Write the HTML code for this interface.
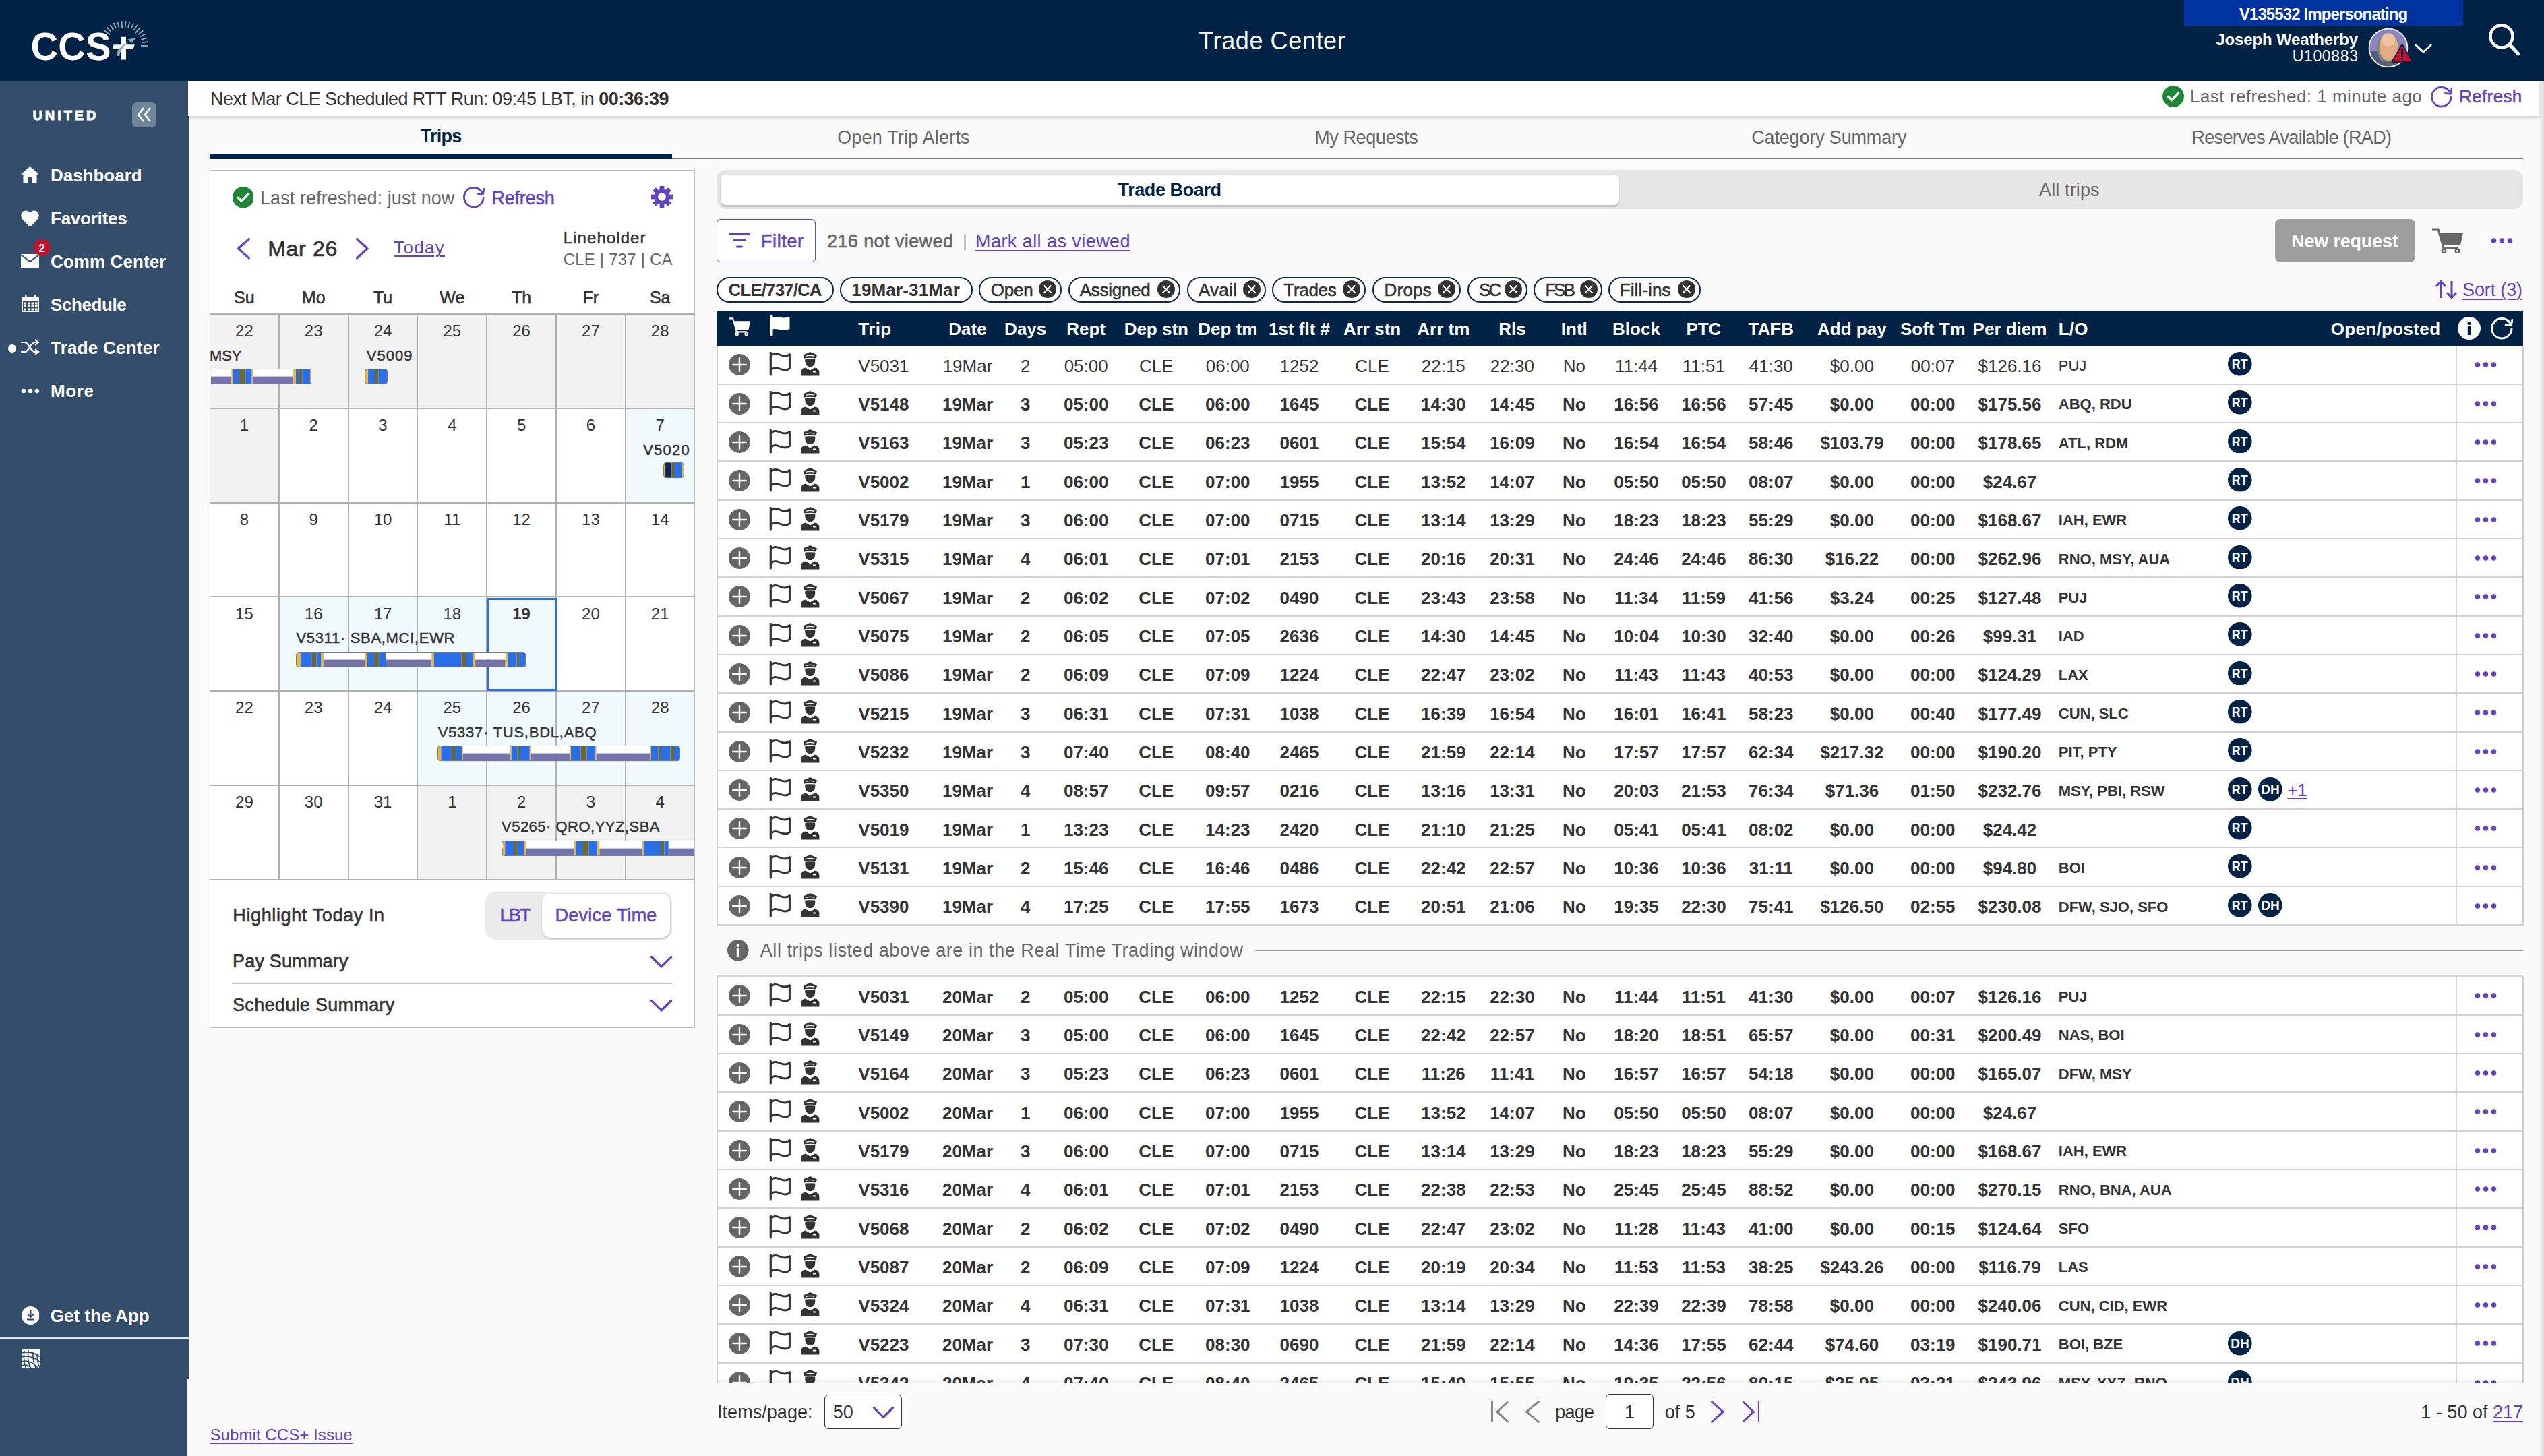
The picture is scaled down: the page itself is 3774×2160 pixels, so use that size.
<!DOCTYPE html><html><head><meta charset="utf-8"><title>Trade Center</title><style>
*{box-sizing:border-box;margin:0;padding:0}
html,body{width:3774px;height:2160px;overflow:hidden;background:#fafafa;font-family:"Liberation Sans",sans-serif;color:#333333}
.a{position:absolute;display:block}
.t{position:absolute;white-space:nowrap;line-height:1}
.u{text-decoration:underline;text-decoration-thickness:2px;text-underline-offset:4px}
</style></head><body>
<div class="a" style="left:0.00px;top:0.00px;width:3774.00px;height:120.00px;background:#002244;"></div>
<div class="a" style="left:0.00px;top:120.00px;width:280.00px;height:1926.00px;background:#334d6a;"></div>
<div class="a" style="left:0.00px;top:2046.00px;width:278.00px;height:114.00px;background:#334d6a;"></div>
<div class="a" style="left:3766.00px;top:120.00px;width:8.00px;height:2040.00px;background:linear-gradient(90deg,rgba(0,0,0,0),rgba(0,0,0,.12));"></div>
<div class="a" style="left:279.00px;top:120.00px;width:3488.00px;height:52.00px;background:#fff;box-shadow:0 3px 5px rgba(0,0,0,.16)"></div>
<svg class="a" style="left:30.00px;top:20.00px;width:210.00px;height:90.00px;" viewBox="0 0 210 90" preserveAspectRatio="none"><g stroke="#8ea3b5" stroke-width="1.9"><line x1="132.79" y1="31.64" x2="124.25" y2="24.72"/><line x1="134.41" y1="27.06" x2="128.43" y2="20.33"/><line x1="138.08" y1="24.31" x2="133.28" y2="16.69"/><line x1="142.15" y1="22.19" x2="138.66" y2="13.89"/><line x1="146.51" y1="20.76" x2="144.43" y2="12.01"/><line x1="151.19" y1="22.06" x2="150.42" y2="11.09"/><line x1="155.64" y1="20.12" x2="156.48" y2="11.16"/><line x1="160.15" y1="20.93" x2="162.45" y2="12.23"/><line x1="164.48" y1="22.46" x2="168.17" y2="14.25"/><line x1="168.49" y1="24.68" x2="173.48" y2="17.18"/><line x1="170.73" y1="28.98" x2="178.23" y2="20.94"/><line x1="175.18" y1="30.92" x2="182.31" y2="25.42"/><line x1="177.68" y1="34.77" x2="185.61" y2="30.52"/><line x1="179.51" y1="38.98" x2="188.03" y2="36.08"/><line x1="180.62" y1="43.43" x2="189.50" y2="41.96"/><line x1="179.00" y1="48.00" x2="190.00" y2="48.00"/></g><text x="15.5" y="69" font-family="Liberation Sans" font-weight="700" font-size="57" fill="#fff" textLength="119" lengthAdjust="spacingAndGlyphs">CCS</text><path d="M150 34.7 h7 v11.5 h12.8 l-2.2 6.6 h-10.6 v15.6 h-7 v-15.6 h-13.6 l2.4 -6.6 h11.2 z" fill="#fff"/><path d="M143 63 C 141 56, 149 48, 162 41.5 C 153 48, 148 55, 147.5 62.5 Z" fill="#8ea3b5"/><path d="M159.4 38.4 L 172.6 35.9 L 165.2 43.8 Z" fill="#8ea3b5"/></svg>
<div class="t" style="top:42.53px;font-size:36px;color:#fff;letter-spacing:0.603px;left:887.30px;width:2000px;text-align:center;">Trade Center</div>
<div class="a" style="left:3240.00px;top:0.00px;width:414.00px;height:38.30px;background:#0033a0;"></div>
<div class="t" style="top:8.68px;font-size:24px;color:#fff;font-weight:700;letter-spacing:-0.887px;left:2446.56px;width:2000px;text-align:center;">V135532 Impersonating</div>
<div class="t" style="top:46.68px;font-size:24px;color:#fff;font-weight:700;letter-spacing:-0.153px;right:276.15px;text-align:right;">Joseph Weatherby</div>
<div class="t" style="top:71.83px;font-size:23px;color:#fff;letter-spacing:0.663px;right:275.34px;text-align:right;">U100883</div>
<svg class="a" style="left:3512.50px;top:40.50px;width:60.00px;height:60.00px;" viewBox="0 0 60 60" preserveAspectRatio="none"><clipPath id="avc"><circle cx="30" cy="30" r="28.4"/></clipPath><g clip-path="url(#avc)"><rect width="60" height="60" fill="#8a86bd"/><rect x="0" y="34" width="60" height="26" fill="#4f5f7a"/><ellipse cx="30" cy="32" rx="17" ry="22" fill="#7b7f86"/><ellipse cx="30.5" cy="29" rx="14" ry="20" fill="#e2ad85"/><ellipse cx="30" cy="18" rx="10" ry="10" fill="#efc49e"/><path d="M14 60 Q16 50 30 50 Q44 50 46 60Z" fill="#5d6068"/></g><circle cx="30" cy="30" r="28.4" fill="none" stroke="#f4f4f4" stroke-width="1.8"/></svg>
<svg class="a" style="left:3546.80px;top:64.00px;width:33.00px;height:29.50px;" viewBox="0 0 33 29.5" preserveAspectRatio="none"><path d="M16.5 1.5 L32 28 L1 28 Z" fill="#c8102e" stroke="#002244" stroke-width="1.6" stroke-linejoin="round"/><rect x="15.1" y="9" width="2.8" height="11" fill="#002244"/><circle cx="16.5" cy="23.5" r="1.7" fill="#002244"/></svg>
<svg class="a" style="left:3582.00px;top:65.00px;width:26.00px;height:14.00px;" viewBox="0 0 26 14" preserveAspectRatio="none"><path d="M2 2 L13 12 L24 2" fill="none" stroke="#fff" stroke-width="3" stroke-linecap="round" stroke-linejoin="round"/></svg>
<svg class="a" style="left:3690.00px;top:33.00px;width:50.00px;height:53.00px;" viewBox="0 0 50 53" preserveAspectRatio="none"><circle cx="21" cy="21" r="16.5" fill="none" stroke="#fff" stroke-width="4.5"/><path d="M33 33 L46 47" stroke="#fff" stroke-width="5" stroke-linecap="round"/></svg>
<div class="t" style="top:160.57px;font-size:20px;color:#fff;font-weight:700;letter-spacing:3.924px;left:48.50px;-webkit-text-stroke:0.9px #fff;">UNITED</div>
<div class="a" style="left:196.00px;top:152.00px;width:36.00px;height:36.50px;background:#6f8698;border-radius:7px"></div>
<svg class="a" style="left:196.00px;top:152.00px;width:36.00px;height:36.50px;" viewBox="0 0 36 36.5" preserveAspectRatio="none"><path d="M17 8 L9 18 L17 28 M27 8 L19 18 L27 28" fill="none" stroke="#fff" stroke-width="2.6"/></svg>
<div class="t" style="top:246.99px;font-size:26px;color:#fff;font-weight:700;letter-spacing:-0.024px;left:75.00px;">Dashboard</div>
<div class="t" style="top:310.99px;font-size:26px;color:#fff;font-weight:700;letter-spacing:-0.245px;left:75.00px;">Favorites</div>
<div class="t" style="top:374.99px;font-size:26px;color:#fff;font-weight:700;letter-spacing:0.092px;left:75.00px;">Comm Center</div>
<div class="t" style="top:438.99px;font-size:26px;color:#fff;font-weight:700;letter-spacing:-0.399px;left:75.00px;">Schedule</div>
<div class="t" style="top:502.99px;font-size:26px;color:#fff;font-weight:700;letter-spacing:0.237px;left:75.00px;">Trade Center</div>
<div class="t" style="top:566.99px;font-size:26px;color:#fff;font-weight:700;letter-spacing:0.619px;left:75.00px;">More</div>
<svg class="a" style="left:31.00px;top:246.00px;width:27.00px;height:25.00px;" viewBox="0 0 27 25" preserveAspectRatio="none"><path d="M13.5 1 L27 12.5 L23.5 12.5 L23.5 25 L16.5 25 L16.5 17 L10.5 17 L10.5 25 L3.5 25 L3.5 12.5 L0 12.5 Z" fill="#fff"/></svg>
<svg class="a" style="left:31.00px;top:312.00px;width:27.00px;height:25.00px;" viewBox="0 0 27 25" preserveAspectRatio="none"><path d="M13.5 25 L2.5 13.5 C-2 8.5 1 0.5 7.5 0.5 C10.5 0.5 12.5 2.5 13.5 4.5 C14.5 2.5 16.5 0.5 19.5 0.5 C26 0.5 29 8.5 24.5 13.5 Z" fill="#fff"/></svg>
<svg class="a" style="left:31.00px;top:377.00px;width:27.00px;height:20.00px;" viewBox="0 0 27 20" preserveAspectRatio="none"><path d="M0 0 H27 V20 H0 Z" fill="#fff"/><path d="M0 1 L13.5 11 L27 1" fill="none" stroke="#334d6a" stroke-width="2"/></svg>
<svg class="a" style="left:50.40px;top:355.10px;width:24.60px;height:24.60px;" viewBox="0 0 24.6 24.6" preserveAspectRatio="none"><circle cx="12.3" cy="12.3" r="12.3" fill="#c8102e"/><text x="12.3" y="18.6" text-anchor="middle" font-family="Liberation Sans" font-weight="700" font-size="17" fill="#fff">2</text></svg>
<svg class="a" style="left:32.00px;top:438.00px;width:26.00px;height:25.00px;" viewBox="0 0 26 25" preserveAspectRatio="none"><rect x="0" y="3" width="26" height="22" fill="#fff"/><rect x="2" y="9" width="22" height="14" fill="#334d6a"/><rect x="3.5" y="10.5" width="3.5" height="3" fill="#fff"/><rect x="3.5" y="15.0" width="3.5" height="3" fill="#fff"/><rect x="3.5" y="19.5" width="3.5" height="3" fill="#fff"/><rect x="9.0" y="10.5" width="3.5" height="3" fill="#fff"/><rect x="9.0" y="15.0" width="3.5" height="3" fill="#fff"/><rect x="9.0" y="19.5" width="3.5" height="3" fill="#fff"/><rect x="14.5" y="10.5" width="3.5" height="3" fill="#fff"/><rect x="14.5" y="15.0" width="3.5" height="3" fill="#fff"/><rect x="14.5" y="19.5" width="3.5" height="3" fill="#fff"/><rect x="20.0" y="10.5" width="3.5" height="3" fill="#fff"/><rect x="20.0" y="15.0" width="3.5" height="3" fill="#fff"/><rect x="20.0" y="19.5" width="3.5" height="3" fill="#fff"/><rect x="5" y="0" width="2.5" height="6" fill="#fff"/><rect x="18.5" y="0" width="2.5" height="6" fill="#fff"/></svg>
<svg class="a" style="left:31.00px;top:503.00px;width:28.00px;height:24.00px;" viewBox="0 0 28 24" preserveAspectRatio="none"><path d="M0 5 H6 C12 5 14 19 21 19 H25 M0 19 H6 C12 19 14 5 21 5 H25" fill="none" stroke="#fff" stroke-width="2.2"/><path d="M21 1 L26 5 L21 9 M21 15 L26 19 L21 23" fill="none" stroke="#fff" stroke-width="2.2"/></svg>
<div class="a" style="left:11.80px;top:510.60px;width:12.00px;height:12.00px;background:#fff;border-radius:50%"></div>
<svg class="a" style="left:31.00px;top:575.00px;width:28.00px;height:10.00px;" viewBox="0 0 28 10" preserveAspectRatio="none"><circle cx="4" cy="5" r="3.3" fill="#fff"/><circle cx="14" cy="5" r="3.3" fill="#fff"/><circle cx="24" cy="5" r="3.3" fill="#fff"/></svg>
<svg class="a" style="left:31.60px;top:1938.00px;width:26.80px;height:27.00px;" viewBox="0 0 27 27" preserveAspectRatio="none"><circle cx="13.5" cy="13.5" r="13.5" fill="#fff"/><path d="M13.5 5.5 V15.5 M9 11.5 L13.5 16 L18 11.5 M8 19.5 H19" fill="none" stroke="#334d6a" stroke-width="2.2"/></svg>
<div class="t" style="top:1939.39px;font-size:26px;color:#fff;font-weight:700;letter-spacing:0.057px;left:74.80px;">Get the App</div>
<div class="a" style="left:0.00px;top:1983.50px;width:280.00px;height:2.00px;background:#dfe4ea;"></div>
<svg class="a" style="left:31.60px;top:2001.00px;width:28.40px;height:28.40px;" viewBox="0 0 28.4 28.4" preserveAspectRatio="none"><rect width="28.4" height="28.4" fill="#fff"/><g fill="none" stroke="#334d6a" stroke-width="1.6"><path d="M0 6 Q14 2 28 12"/><path d="M0 12 Q14 8 28 20"/><path d="M0 19 Q12 15 24 28"/><path d="M0 25 Q8 22 14 28"/><path d="M4 3 Q2 16 6 28"/><path d="M10 2 Q8 16 13 28"/><path d="M17 4 Q16 18 21 28"/><path d="M23 8 Q23 20 27 28"/></g></svg>
<div class="t" style="top:2117.28px;font-size:24px;color:#6244bb;letter-spacing:0.071px;left:311.50px;text-decoration:underline;text-decoration-thickness:2px;text-underline-offset:3px;">Submit CCS+ Issue</div>
<div class="t" style="top:134.34px;font-size:27px;color:#333333;letter-spacing:-0.535px;left:312.00px;">Next Mar CLE Scheduled RTT Run: 09:45 LBT, in <b>00:36:39</b></div>
<svg class="a" style="left:3207.80px;top:126.90px;width:32.00px;height:32.00px;" viewBox="0 0 32 32" preserveAspectRatio="none"><circle cx="16" cy="16" r="16" fill="#208637"/><path d="M8.5 16.5 L13.5 21.5 L23.5 11" fill="none" stroke="#fff" stroke-width="3.6" stroke-linecap="round" stroke-linejoin="round"/></svg>
<div class="t" style="top:130.09px;font-size:26px;color:#666666;letter-spacing:0.476px;left:3249.00px;">Last refreshed: 1 minute ago</div>
<svg class="a" style="left:3606.00px;top:127.50px;width:32.00px;height:32.00px;" viewBox="0 0 32 32" preserveAspectRatio="none"><path d="M28.2 8.6 A14.3 14.3 0 1 0 30.1 16.3" fill="none" stroke="#6244bb" stroke-width="2.8" stroke-linecap="round"/><path d="M21.5 10.4 L29.4 11.3 L31 3.3" fill="none" stroke="#6244bb" stroke-width="2.8" stroke-linejoin="round" stroke-linecap="round"/></svg>
<div class="t" style="top:130.09px;font-size:26px;color:#6244bb;-webkit-text-stroke:0.57px #6244bb;letter-spacing:0.379px;left:3648.00px;">Refresh</div>
<div class="t" style="top:189.34px;font-size:27px;color:#002244;font-weight:700;letter-spacing:-0.786px;left:-345.89px;width:2000px;text-align:center;">Trips</div>
<div class="t" style="top:190.74px;font-size:27px;color:#666666;letter-spacing:0.188px;left:340.49px;width:2000px;text-align:center;">Open Trip Alerts</div>
<div class="t" style="top:190.74px;font-size:27px;color:#666666;letter-spacing:-0.415px;left:1026.79px;width:2000px;text-align:center;">My Requests</div>
<div class="t" style="top:190.74px;font-size:27px;color:#666666;letter-spacing:-0.161px;left:1713.22px;width:2000px;text-align:center;">Category Summary</div>
<div class="t" style="top:190.74px;font-size:27px;color:#666666;letter-spacing:-0.651px;left:2399.37px;width:2000px;text-align:center;">Reserves Available (RAD)</div>
<div class="a" style="left:311.00px;top:234.50px;width:3432.00px;height:1.50px;background:#7a7a7a;"></div>
<div class="a" style="left:311.00px;top:228.00px;width:686.00px;height:8.00px;background:#002244;"></div>
<div class="a" style="left:311.00px;top:252.00px;width:720.00px;height:1273.00px;background:#fff;border:1.5px solid #bdbdbd"></div>
<svg class="a" style="left:344.60px;top:276.70px;width:31.60px;height:31.60px;" viewBox="0 0 32 32" preserveAspectRatio="none"><circle cx="16" cy="16" r="16" fill="#208637"/><path d="M8.5 16.5 L13.5 21.5 L23.5 11" fill="none" stroke="#fff" stroke-width="3.6" stroke-linecap="round" stroke-linejoin="round"/></svg>
<div class="t" style="top:280.64px;font-size:27px;color:#666666;letter-spacing:0.073px;left:386.00px;">Last refreshed: just now</div>
<svg class="a" style="left:687.00px;top:277.00px;width:32.00px;height:32.00px;" viewBox="0 0 32 32" preserveAspectRatio="none"><path d="M28.2 8.6 A14.3 14.3 0 1 0 30.1 16.3" fill="none" stroke="#6244bb" stroke-width="2.8" stroke-linecap="round"/><path d="M21.5 10.4 L29.4 11.3 L31 3.3" fill="none" stroke="#6244bb" stroke-width="2.8" stroke-linejoin="round" stroke-linecap="round"/></svg>
<div class="t" style="top:280.64px;font-size:27px;color:#6244bb;-webkit-text-stroke:0.59px #6244bb;letter-spacing:-0.164px;left:729.30px;">Refresh</div>
<svg class="a" style="left:966.00px;top:276.00px;width:32.00px;height:32.00px;" viewBox="0 0 32 32" preserveAspectRatio="none"><rect x="12.6" y="0" width="6.8" height="8" transform="rotate(0 16 16)" fill="#6244bb"/><rect x="12.6" y="0" width="6.8" height="8" transform="rotate(45 16 16)" fill="#6244bb"/><rect x="12.6" y="0" width="6.8" height="8" transform="rotate(90 16 16)" fill="#6244bb"/><rect x="12.6" y="0" width="6.8" height="8" transform="rotate(135 16 16)" fill="#6244bb"/><rect x="12.6" y="0" width="6.8" height="8" transform="rotate(180 16 16)" fill="#6244bb"/><rect x="12.6" y="0" width="6.8" height="8" transform="rotate(225 16 16)" fill="#6244bb"/><rect x="12.6" y="0" width="6.8" height="8" transform="rotate(270 16 16)" fill="#6244bb"/><rect x="12.6" y="0" width="6.8" height="8" transform="rotate(315 16 16)" fill="#6244bb"/><circle cx="16" cy="16" r="11.6" fill="#6244bb"/><circle cx="16" cy="16" r="5.8" fill="#fff"/></svg>
<svg class="a" style="left:351.50px;top:352.60px;width:18.90px;height:31.60px;overflow:visible" viewBox="0 0 18.90 31.60" preserveAspectRatio="none"><path d="M17.40 1.5 L1.5 15.80 L17.40 30.10" fill="none" stroke="#6244bb" stroke-width="3.2" stroke-linecap="round" stroke-linejoin="round"/></svg>
<div class="t" style="top:352.71px;font-size:32px;color:#333333;-webkit-text-stroke:0.70px #333333;letter-spacing:0.684px;left:397.20px;">Mar 26</div>
<svg class="a" style="left:527.70px;top:352.60px;width:18.50px;height:31.60px;overflow:visible" viewBox="0 0 18.50 31.60" preserveAspectRatio="none"><path d="M1.5 1.5 L17.00 15.80 L1.5 30.10" fill="none" stroke="#6244bb" stroke-width="3.2" stroke-linecap="round" stroke-linejoin="round"/></svg>
<div class="t" style="top:354.29px;font-size:26px;color:#6244bb;letter-spacing:1.242px;left:584.30px;text-decoration:underline;text-decoration-thickness:2px;text-underline-offset:3px;">Today</div>
<div class="t" style="top:340.58px;font-size:24px;color:#333333;-webkit-text-stroke:0.53px #333333;letter-spacing:1.081px;left:835.70px;">Lineholder</div>
<div class="t" style="top:373.18px;font-size:24px;color:#666666;letter-spacing:0.199px;left:835.70px;">CLE | 737 | CA</div>
<div class="t" style="top:429.04px;font-size:25px;color:#333333;-webkit-text-stroke:0.55px #333333;left:-637.60px;width:2000px;text-align:center;">Su</div>
<div class="t" style="top:429.04px;font-size:25px;color:#333333;-webkit-text-stroke:0.55px #333333;left:-534.80px;width:2000px;text-align:center;">Mo</div>
<div class="t" style="top:429.04px;font-size:25px;color:#333333;-webkit-text-stroke:0.55px #333333;left:-432.00px;width:2000px;text-align:center;">Tu</div>
<div class="t" style="top:429.04px;font-size:25px;color:#333333;-webkit-text-stroke:0.55px #333333;left:-329.20px;width:2000px;text-align:center;">We</div>
<div class="t" style="top:429.04px;font-size:25px;color:#333333;-webkit-text-stroke:0.55px #333333;left:-226.40px;width:2000px;text-align:center;">Th</div>
<div class="t" style="top:429.04px;font-size:25px;color:#333333;-webkit-text-stroke:0.55px #333333;left:-123.60px;width:2000px;text-align:center;">Fr</div>
<div class="t" style="top:429.04px;font-size:25px;color:#333333;-webkit-text-stroke:0.55px #333333;left:-20.80px;width:2000px;text-align:center;">Sa</div>
<div class="a" style="left:311.00px;top:466.00px;width:102.80px;height:139.80px;background:#f2f2f2;"></div>
<div class="a" style="left:413.80px;top:466.00px;width:102.80px;height:139.80px;background:#f2f2f2;"></div>
<div class="a" style="left:516.60px;top:466.00px;width:102.80px;height:139.80px;background:#f2f2f2;"></div>
<div class="a" style="left:619.40px;top:466.00px;width:102.80px;height:139.80px;background:#f2f2f2;"></div>
<div class="a" style="left:722.20px;top:466.00px;width:102.80px;height:139.80px;background:#f2f2f2;"></div>
<div class="a" style="left:825.00px;top:466.00px;width:102.80px;height:139.80px;background:#f2f2f2;"></div>
<div class="a" style="left:927.80px;top:466.00px;width:102.80px;height:139.80px;background:#f2f2f2;"></div>
<div class="a" style="left:311.00px;top:605.80px;width:102.80px;height:139.80px;background:#f2f2f2;"></div>
<div class="a" style="left:927.80px;top:605.80px;width:102.80px;height:139.80px;background:#f0f9fb;"></div>
<div class="a" style="left:413.80px;top:885.40px;width:102.80px;height:139.80px;background:#f0f9fb;"></div>
<div class="a" style="left:516.60px;top:885.40px;width:102.80px;height:139.80px;background:#f0f9fb;"></div>
<div class="a" style="left:619.40px;top:885.40px;width:102.80px;height:139.80px;background:#f0f9fb;"></div>
<div class="a" style="left:722.20px;top:885.40px;width:102.80px;height:139.80px;background:#f0f9fb;"></div>
<div class="a" style="left:619.40px;top:1025.20px;width:102.80px;height:139.80px;background:#f0f9fb;"></div>
<div class="a" style="left:722.20px;top:1025.20px;width:102.80px;height:139.80px;background:#f0f9fb;"></div>
<div class="a" style="left:825.00px;top:1025.20px;width:102.80px;height:139.80px;background:#f0f9fb;"></div>
<div class="a" style="left:927.80px;top:1025.20px;width:102.80px;height:139.80px;background:#f0f9fb;"></div>
<div class="a" style="left:619.40px;top:1165.00px;width:102.80px;height:139.80px;background:#f2f2f2;"></div>
<div class="a" style="left:722.20px;top:1165.00px;width:102.80px;height:139.80px;background:#f2f2f2;"></div>
<div class="a" style="left:825.00px;top:1165.00px;width:102.80px;height:139.80px;background:#f2f2f2;"></div>
<div class="a" style="left:927.80px;top:1165.00px;width:102.80px;height:139.80px;background:#f2f2f2;"></div>
<div class="a" style="left:311.00px;top:465.00px;width:720.00px;height:2.00px;background:#b0b0b0;"></div>
<div class="a" style="left:311.00px;top:604.80px;width:720.00px;height:2.00px;background:#b0b0b0;"></div>
<div class="a" style="left:311.00px;top:744.60px;width:720.00px;height:2.00px;background:#b0b0b0;"></div>
<div class="a" style="left:311.00px;top:884.40px;width:720.00px;height:2.00px;background:#b0b0b0;"></div>
<div class="a" style="left:311.00px;top:1024.20px;width:720.00px;height:2.00px;background:#b0b0b0;"></div>
<div class="a" style="left:311.00px;top:1164.00px;width:720.00px;height:2.00px;background:#b0b0b0;"></div>
<div class="a" style="left:311.00px;top:1303.80px;width:720.00px;height:2.00px;background:#b0b0b0;"></div>
<div class="a" style="left:412.80px;top:466.00px;width:2.00px;height:838.80px;background:#b0b0b0;"></div>
<div class="a" style="left:515.60px;top:466.00px;width:2.00px;height:838.80px;background:#b0b0b0;"></div>
<div class="a" style="left:618.40px;top:466.00px;width:2.00px;height:838.80px;background:#b0b0b0;"></div>
<div class="a" style="left:721.20px;top:466.00px;width:2.00px;height:838.80px;background:#b0b0b0;"></div>
<div class="a" style="left:824.00px;top:466.00px;width:2.00px;height:838.80px;background:#b0b0b0;"></div>
<div class="a" style="left:926.80px;top:466.00px;width:2.00px;height:838.80px;background:#b0b0b0;"></div>
<div class="t" style="top:479.18px;font-size:24px;color:#333333;left:-637.60px;width:2000px;text-align:center;">22</div>
<div class="t" style="top:479.18px;font-size:24px;color:#333333;left:-534.80px;width:2000px;text-align:center;">23</div>
<div class="t" style="top:479.18px;font-size:24px;color:#333333;left:-432.00px;width:2000px;text-align:center;">24</div>
<div class="t" style="top:479.18px;font-size:24px;color:#333333;left:-329.20px;width:2000px;text-align:center;">25</div>
<div class="t" style="top:479.18px;font-size:24px;color:#333333;left:-226.40px;width:2000px;text-align:center;">26</div>
<div class="t" style="top:479.18px;font-size:24px;color:#333333;left:-123.60px;width:2000px;text-align:center;">27</div>
<div class="t" style="top:479.18px;font-size:24px;color:#333333;left:-20.80px;width:2000px;text-align:center;">28</div>
<div class="t" style="top:618.98px;font-size:24px;color:#333333;left:-637.60px;width:2000px;text-align:center;">1</div>
<div class="t" style="top:618.98px;font-size:24px;color:#333333;left:-534.80px;width:2000px;text-align:center;">2</div>
<div class="t" style="top:618.98px;font-size:24px;color:#333333;left:-432.00px;width:2000px;text-align:center;">3</div>
<div class="t" style="top:618.98px;font-size:24px;color:#333333;left:-329.20px;width:2000px;text-align:center;">4</div>
<div class="t" style="top:618.98px;font-size:24px;color:#333333;left:-226.40px;width:2000px;text-align:center;">5</div>
<div class="t" style="top:618.98px;font-size:24px;color:#333333;left:-123.60px;width:2000px;text-align:center;">6</div>
<div class="t" style="top:618.98px;font-size:24px;color:#333333;left:-20.80px;width:2000px;text-align:center;">7</div>
<div class="t" style="top:758.78px;font-size:24px;color:#333333;left:-637.60px;width:2000px;text-align:center;">8</div>
<div class="t" style="top:758.78px;font-size:24px;color:#333333;left:-534.80px;width:2000px;text-align:center;">9</div>
<div class="t" style="top:758.78px;font-size:24px;color:#333333;left:-432.00px;width:2000px;text-align:center;">10</div>
<div class="t" style="top:758.78px;font-size:24px;color:#333333;left:-329.20px;width:2000px;text-align:center;">11</div>
<div class="t" style="top:758.78px;font-size:24px;color:#333333;left:-226.40px;width:2000px;text-align:center;">12</div>
<div class="t" style="top:758.78px;font-size:24px;color:#333333;left:-123.60px;width:2000px;text-align:center;">13</div>
<div class="t" style="top:758.78px;font-size:24px;color:#333333;left:-20.80px;width:2000px;text-align:center;">14</div>
<div class="t" style="top:898.58px;font-size:24px;color:#333333;left:-637.60px;width:2000px;text-align:center;">15</div>
<div class="t" style="top:898.58px;font-size:24px;color:#333333;left:-534.80px;width:2000px;text-align:center;">16</div>
<div class="t" style="top:898.58px;font-size:24px;color:#333333;left:-432.00px;width:2000px;text-align:center;">17</div>
<div class="t" style="top:898.58px;font-size:24px;color:#333333;left:-329.20px;width:2000px;text-align:center;">18</div>
<div class="t" style="top:898.58px;font-size:24px;color:#333333;font-weight:700;left:-226.40px;width:2000px;text-align:center;">19</div>
<div class="t" style="top:898.58px;font-size:24px;color:#333333;left:-123.60px;width:2000px;text-align:center;">20</div>
<div class="t" style="top:898.58px;font-size:24px;color:#333333;left:-20.80px;width:2000px;text-align:center;">21</div>
<div class="t" style="top:1038.38px;font-size:24px;color:#333333;left:-637.60px;width:2000px;text-align:center;">22</div>
<div class="t" style="top:1038.38px;font-size:24px;color:#333333;left:-534.80px;width:2000px;text-align:center;">23</div>
<div class="t" style="top:1038.38px;font-size:24px;color:#333333;left:-432.00px;width:2000px;text-align:center;">24</div>
<div class="t" style="top:1038.38px;font-size:24px;color:#333333;left:-329.20px;width:2000px;text-align:center;">25</div>
<div class="t" style="top:1038.38px;font-size:24px;color:#333333;left:-226.40px;width:2000px;text-align:center;">26</div>
<div class="t" style="top:1038.38px;font-size:24px;color:#333333;left:-123.60px;width:2000px;text-align:center;">27</div>
<div class="t" style="top:1038.38px;font-size:24px;color:#333333;left:-20.80px;width:2000px;text-align:center;">28</div>
<div class="t" style="top:1178.18px;font-size:24px;color:#333333;left:-637.60px;width:2000px;text-align:center;">29</div>
<div class="t" style="top:1178.18px;font-size:24px;color:#333333;left:-534.80px;width:2000px;text-align:center;">30</div>
<div class="t" style="top:1178.18px;font-size:24px;color:#333333;left:-432.00px;width:2000px;text-align:center;">31</div>
<div class="t" style="top:1178.18px;font-size:24px;color:#333333;left:-329.20px;width:2000px;text-align:center;">1</div>
<div class="t" style="top:1178.18px;font-size:24px;color:#333333;left:-226.40px;width:2000px;text-align:center;">2</div>
<div class="t" style="top:1178.18px;font-size:24px;color:#333333;left:-123.60px;width:2000px;text-align:center;">3</div>
<div class="t" style="top:1178.18px;font-size:24px;color:#333333;left:-20.80px;width:2000px;text-align:center;">4</div>
<div class="a" style="left:723.00px;top:887.40px;width:102.50px;height:137.30px;background:none;border:3px solid #2b70e0"></div>
<div class="t" style="top:516.68px;font-size:22px;color:#333333;-webkit-text-stroke:0.48px #333333;letter-spacing:-0.096px;left:311.00px;">MSY</div>
<div class="t" style="top:516.68px;font-size:22px;color:#333333;-webkit-text-stroke:0.48px #333333;letter-spacing:1.015px;left:543.80px;">V5009</div>
<div class="t" style="top:656.78px;font-size:22px;color:#333333;-webkit-text-stroke:0.48px #333333;letter-spacing:1.235px;left:954.20px;">V5020</div>
<div class="t" style="top:936.38px;font-size:22px;color:#333333;-webkit-text-stroke:0.48px #333333;letter-spacing:0.693px;left:439.40px;">V5311· SBA,MCI,EWR</div>
<div class="t" style="top:1075.78px;font-size:22px;color:#333333;-webkit-text-stroke:0.48px #333333;letter-spacing:0.753px;left:649.70px;">V5337· TUS,BDL,ABQ</div>
<div class="t" style="top:1216.38px;font-size:22px;color:#333333;-webkit-text-stroke:0.48px #333333;letter-spacing:0.489px;left:744.00px;">V5265· QRO,YYZ,SBA</div>
<svg class="a" style="left:312.50px;top:547.30px;width:149.70px;height:23.20px;" viewBox="0 0 149.70 23.20" preserveAspectRatio="none"><defs><clipPath id="cpmsy"><rect x="-12" y="0.5" width="161.20" height="22.20" rx="4"/></clipPath></defs><g clip-path="url(#cpmsy)"><rect x="-12.50" y="0" width="42.80" height="11.60" fill="#fff"/><rect x="-12.50" y="11.60" width="42.80" height="11.60" fill="#7474ab"/><rect x="30.30" y="0" width="2.40" height="23.20" fill="#e8b640"/><rect x="32.70" y="0" width="9.30" height="23.20" fill="#2a6fe8"/><rect x="42.00" y="0" width="9.30" height="23.20" fill="#6e6934"/><rect x="51.30" y="0" width="9.30" height="23.20" fill="#2a6fe8"/><rect x="60.60" y="0" width="1.40" height="23.20" fill="#e8b640"/><rect x="62.00" y="0" width="60.10" height="11.60" fill="#fff"/><rect x="62.00" y="11.60" width="60.10" height="11.60" fill="#7474ab"/><rect x="122.10" y="0" width="3.80" height="23.20" fill="#e8b640"/><rect x="125.90" y="0" width="4.20" height="23.20" fill="#2a6fe8"/><rect x="130.10" y="0" width="5.10" height="23.20" fill="#6e6934"/><rect x="135.20" y="0" width="12.40" height="23.20" fill="#2a6fe8"/><rect x="147.60" y="0" width="2.10" height="23.20" fill="#e8b640"/></g><rect x="-12" y="0.5" width="161.20" height="22.20" rx="4" fill="none" stroke="#777" stroke-width="1"/></svg>
<svg class="a" style="left:541.40px;top:547.30px;width:34.00px;height:23.20px;" viewBox="0 0 34.00 23.20" preserveAspectRatio="none"><defs><clipPath id="cp541547"><rect x="0.5" y="0.5" width="33.00" height="22.20" rx="4"/></clipPath></defs><g clip-path="url(#cp541547)"><rect x="0.00" y="0" width="5.10" height="23.20" fill="#e8b640"/><rect x="5.10" y="0" width="10.20" height="23.20" fill="#2a6fe8"/><rect x="15.30" y="0" width="5.10" height="23.20" fill="#6e6934"/><rect x="20.40" y="0" width="13.60" height="23.20" fill="#2a6fe8"/></g><rect x="0.5" y="0.5" width="33.00" height="22.20" rx="4" fill="none" stroke="#777" stroke-width="1"/></svg>
<svg class="a" style="left:984.40px;top:686.40px;width:30.90px;height:23.20px;" viewBox="0 0 30.90 23.20" preserveAspectRatio="none"><defs><clipPath id="cp984686"><rect x="0.5" y="0.5" width="29.90" height="22.20" rx="4"/></clipPath></defs><g clip-path="url(#cp984686)"><rect x="0.00" y="0" width="3.09" height="23.20" fill="#e8b640"/><rect x="3.09" y="0" width="9.27" height="23.20" fill="#0b2461"/><rect x="12.36" y="0" width="4.63" height="23.20" fill="#6e6934"/><rect x="16.99" y="0" width="10.81" height="23.20" fill="#2a6fe8"/><rect x="27.81" y="0" width="3.09" height="23.20" fill="#e8b640"/></g><rect x="0.5" y="0.5" width="29.90" height="22.20" rx="4" fill="none" stroke="#777" stroke-width="1"/></svg>
<svg class="a" style="left:438.60px;top:967.00px;width:341.30px;height:23.20px;" viewBox="0 0 341.30 23.20" preserveAspectRatio="none"><defs><clipPath id="cp438967"><rect x="0.5" y="0.5" width="340.30" height="22.20" rx="4"/></clipPath></defs><g clip-path="url(#cp438967)"><rect x="0.00" y="0" width="6.83" height="23.20" fill="#e8b640"/><rect x="6.83" y="0" width="17.06" height="23.20" fill="#2a6fe8"/><rect x="23.89" y="0" width="6.83" height="23.20" fill="#6e6934"/><rect x="30.72" y="0" width="6.83" height="23.20" fill="#2a6fe8"/><rect x="37.54" y="0" width="3.41" height="23.20" fill="#e8b640"/><rect x="40.96" y="0" width="61.43" height="11.60" fill="#fff"/><rect x="40.96" y="11.60" width="61.43" height="11.60" fill="#7474ab"/><rect x="102.39" y="0" width="3.41" height="23.20" fill="#e8b640"/><rect x="105.80" y="0" width="10.24" height="23.20" fill="#2a6fe8"/><rect x="116.04" y="0" width="6.83" height="23.20" fill="#6e6934"/><rect x="122.87" y="0" width="10.24" height="23.20" fill="#2a6fe8"/><rect x="133.11" y="0" width="68.26" height="11.60" fill="#fff"/><rect x="133.11" y="11.60" width="68.26" height="11.60" fill="#7474ab"/><rect x="201.37" y="0" width="3.41" height="23.20" fill="#e8b640"/><rect x="204.78" y="0" width="40.96" height="23.20" fill="#2a6fe8"/><rect x="245.74" y="0" width="6.83" height="23.20" fill="#6e6934"/><rect x="252.56" y="0" width="10.24" height="23.20" fill="#2a6fe8"/><rect x="262.80" y="0" width="3.41" height="23.20" fill="#e8b640"/><rect x="266.21" y="0" width="44.37" height="11.60" fill="#fff"/><rect x="266.21" y="11.60" width="44.37" height="11.60" fill="#7474ab"/><rect x="310.58" y="0" width="3.41" height="23.20" fill="#e8b640"/><rect x="314.00" y="0" width="13.65" height="23.20" fill="#2a6fe8"/><rect x="327.65" y="0" width="3.41" height="23.20" fill="#6e6934"/><rect x="331.06" y="0" width="10.24" height="23.20" fill="#2a6fe8"/></g><rect x="0.5" y="0.5" width="340.30" height="22.20" rx="4" fill="none" stroke="#777" stroke-width="1"/></svg>
<svg class="a" style="left:648.90px;top:1106.40px;width:360.00px;height:23.20px;" viewBox="0 0 360.00 23.20" preserveAspectRatio="none"><defs><clipPath id="cp6481106"><rect x="0.5" y="0.5" width="359.00" height="22.20" rx="4"/></clipPath></defs><g clip-path="url(#cp6481106)"><rect x="0.00" y="0" width="5.40" height="23.20" fill="#e8b640"/><rect x="5.40" y="0" width="16.20" height="23.20" fill="#2a6fe8"/><rect x="21.60" y="0" width="5.40" height="23.20" fill="#6e6934"/><rect x="27.00" y="0" width="9.00" height="23.20" fill="#2a6fe8"/><rect x="36.00" y="0" width="1.80" height="23.20" fill="#e8b640"/><rect x="37.80" y="0" width="70.20" height="11.60" fill="#fff"/><rect x="37.80" y="11.60" width="70.20" height="11.60" fill="#7474ab"/><rect x="108.00" y="0" width="1.80" height="23.20" fill="#e8b640"/><rect x="109.80" y="0" width="9.00" height="23.20" fill="#2a6fe8"/><rect x="118.80" y="0" width="3.60" height="23.20" fill="#6e6934"/><rect x="122.40" y="0" width="14.40" height="23.20" fill="#2a6fe8"/><rect x="136.80" y="0" width="1.80" height="23.20" fill="#e8b640"/><rect x="138.60" y="0" width="57.60" height="11.60" fill="#fff"/><rect x="138.60" y="11.60" width="57.60" height="11.60" fill="#7474ab"/><rect x="196.20" y="0" width="1.80" height="23.20" fill="#e8b640"/><rect x="198.00" y="0" width="14.40" height="23.20" fill="#2a6fe8"/><rect x="212.40" y="0" width="9.00" height="23.20" fill="#6e6934"/><rect x="221.40" y="0" width="12.60" height="23.20" fill="#2a6fe8"/><rect x="234.00" y="0" width="1.80" height="23.20" fill="#e8b640"/><rect x="235.80" y="0" width="79.20" height="11.60" fill="#fff"/><rect x="235.80" y="11.60" width="79.20" height="11.60" fill="#7474ab"/><rect x="315.00" y="0" width="1.80" height="23.20" fill="#e8b640"/><rect x="316.80" y="0" width="10.80" height="23.20" fill="#2a6fe8"/><rect x="327.60" y="0" width="3.60" height="23.20" fill="#6e6934"/><rect x="331.20" y="0" width="14.40" height="23.20" fill="#2a6fe8"/><rect x="345.60" y="0" width="5.40" height="23.20" fill="#6e6934"/><rect x="351.00" y="0" width="9.00" height="23.20" fill="#2a6fe8"/></g><rect x="0.5" y="0.5" width="359.00" height="22.20" rx="4" fill="none" stroke="#777" stroke-width="1"/></svg>
<svg class="a" style="left:744.00px;top:1246.60px;width:316.00px;height:23.20px;" viewBox="0 0 316.00 23.20" preserveAspectRatio="none"><defs><clipPath id="cp7441246"><rect x="0.5" y="0.5" width="315.00" height="22.20" rx="4"/></clipPath></defs><g clip-path="url(#cp7441246)"><rect x="0.00" y="0" width="1.90" height="11.60" fill="#fff"/><rect x="0.00" y="11.60" width="1.90" height="11.60" fill="#7474ab"/><rect x="1.90" y="0" width="3.32" height="23.20" fill="#e8b640"/><rect x="5.21" y="0" width="13.18" height="23.20" fill="#2a6fe8"/><rect x="18.39" y="0" width="5.50" height="23.20" fill="#6e6934"/><rect x="23.89" y="0" width="9.20" height="23.20" fill="#2a6fe8"/><rect x="33.09" y="0" width="2.81" height="23.20" fill="#e8b640"/><rect x="35.90" y="0" width="72.11" height="11.60" fill="#fff"/><rect x="35.90" y="11.60" width="72.11" height="11.60" fill="#7474ab"/><rect x="108.01" y="0" width="2.59" height="23.20" fill="#e8b640"/><rect x="110.60" y="0" width="9.39" height="23.20" fill="#2a6fe8"/><rect x="119.99" y="0" width="9.32" height="23.20" fill="#6e6934"/><rect x="129.31" y="0" width="12.89" height="23.20" fill="#2a6fe8"/><rect x="142.20" y="0" width="3.29" height="23.20" fill="#e8b640"/><rect x="145.49" y="0" width="62.82" height="11.60" fill="#fff"/><rect x="145.49" y="11.60" width="62.82" height="11.60" fill="#7474ab"/><rect x="208.31" y="0" width="2.59" height="23.20" fill="#e8b640"/><rect x="210.90" y="0" width="25.09" height="23.20" fill="#2a6fe8"/><rect x="235.99" y="0" width="5.31" height="23.20" fill="#6e6934"/><rect x="241.30" y="0" width="6.51" height="23.20" fill="#2a6fe8"/><rect x="247.81" y="0" width="68.19" height="11.60" fill="#fff"/><rect x="247.81" y="11.60" width="68.19" height="11.60" fill="#7474ab"/></g><rect x="0.5" y="0.5" width="315.00" height="22.20" rx="4" fill="none" stroke="#777" stroke-width="1"/></svg>
<div class="a" style="left:1030.40px;top:1240.00px;width:31.60px;height:35.00px;background:#fafafa;"></div>
<div class="a" style="left:1029.50px;top:466.00px;width:1.50px;height:839.00px;background:#bdbdbd;"></div>
<div class="t" style="top:1345.34px;font-size:27px;color:#333333;-webkit-text-stroke:0.59px #333333;letter-spacing:0.625px;left:345.30px;">Highlight Today In</div>
<div class="a" style="left:720.00px;top:1322.80px;width:277.00px;height:71.40px;background:#ebebeb;border-radius:15px"></div>
<div class="a" style="left:803.70px;top:1326.00px;width:190.10px;height:65.20px;background:#fff;border-radius:13px;box-shadow:0 2px 3px rgba(0,0,0,.2)"></div>
<div class="t" style="top:1345.34px;font-size:27px;color:#6244bb;-webkit-text-stroke:0.59px #6244bb;letter-spacing:-1.510px;left:741.40px;">LBT</div>
<div class="t" style="top:1345.34px;font-size:27px;color:#6244bb;-webkit-text-stroke:0.59px #6244bb;letter-spacing:0.223px;left:823.60px;">Device Time</div>
<div class="t" style="top:1412.74px;font-size:27px;color:#333333;-webkit-text-stroke:0.59px #333333;letter-spacing:0.196px;left:345.00px;">Pay Summary</div>
<svg class="a" style="left:965.30px;top:1418.20px;width:32.20px;height:17.40px;overflow:visible" viewBox="0 0 32.20 17.40" preserveAspectRatio="none"><path d="M1.5 1.5 L16.10 15.90 L30.70 1.5" fill="none" stroke="#6244bb" stroke-width="3.4" stroke-linecap="round" stroke-linejoin="round"/></svg>
<div class="a" style="left:344.00px;top:1458.50px;width:653.50px;height:1.50px;background:#c8c8c8;"></div>
<div class="t" style="top:1478.14px;font-size:27px;color:#333333;-webkit-text-stroke:0.59px #333333;letter-spacing:0.318px;left:345.00px;">Schedule Summary</div>
<svg class="a" style="left:965.30px;top:1483.00px;width:32.20px;height:17.50px;overflow:visible" viewBox="0 0 32.20 17.50" preserveAspectRatio="none"><path d="M1.5 1.5 L16.10 16.00 L30.70 1.5" fill="none" stroke="#6244bb" stroke-width="3.4" stroke-linecap="round" stroke-linejoin="round"/></svg>
<div class="a" style="left:1063.00px;top:252.00px;width:2680.00px;height:57.50px;background:#e6e6e6;border-radius:14px"></div>
<div class="a" style="left:1069.00px;top:258.70px;width:1333.20px;height:45.30px;background:#fff;border-radius:8px;box-shadow:0 2.5px 2px rgba(0,0,0,.16)"></div>
<div class="t" style="top:268.84px;font-size:27px;color:#002244;font-weight:700;letter-spacing:-0.413px;left:735.09px;width:2000px;text-align:center;">Trade Board</div>
<div class="t" style="top:269.14px;font-size:27px;color:#666666;letter-spacing:0.132px;left:2069.87px;width:2000px;text-align:center;">All trips</div>
<div class="a" style="left:1063.00px;top:325.30px;width:147.00px;height:63.30px;background:#fff;border:1.5px solid #6244bb;border-radius:6px"></div>
<svg class="a" style="left:1081.00px;top:345.00px;width:32.00px;height:23.00px;" viewBox="0 0 32 23" preserveAspectRatio="none"><path d="M1.5 2 H30.5 M7.5 11.5 H24.5 M12.5 21 H19.5" stroke="#6244bb" stroke-width="3.2" stroke-linecap="round"/></svg>
<div class="t" style="top:344.84px;font-size:27px;color:#6244bb;-webkit-text-stroke:0.59px #6244bb;letter-spacing:0.600px;left:1129.00px;">Filter</div>
<div class="t" style="top:344.84px;font-size:27px;color:#666666;-webkit-text-stroke:0.59px #666666;letter-spacing:0.411px;left:1227.00px;">216 not viewed</div>
<div class="a" style="left:1430.00px;top:347.00px;width:2.50px;height:24.00px;background:#c4c4c4;"></div>
<div class="t" style="top:344.84px;font-size:27px;color:#6244bb;letter-spacing:0.440px;left:1447.00px;text-decoration:underline;text-decoration-thickness:2px;text-underline-offset:4px;">Mark all as viewed</div>
<div class="a" style="left:3375.00px;top:325.20px;width:208.00px;height:63.80px;background:#9e9e9e;border-radius:8px"></div>
<div class="t" style="top:344.54px;font-size:27px;color:#fff;font-weight:700;letter-spacing:-0.197px;left:2478.40px;width:2000px;text-align:center;">New request</div>
<svg class="a" style="left:3608.00px;top:337.70px;width:46.00px;height:37.80px;" viewBox="0 0 46 38" preserveAspectRatio="none"><path d="M0 2 H9 L17 30 H38" fill="none" stroke="#666" stroke-width="3" stroke-linejoin="round"/><path d="M10 7.5 H46 L42 26 H15 Z" fill="#666"/><circle cx="17.5" cy="34.5" r="2.8" fill="none" stroke="#666" stroke-width="2.4"/><circle cx="37.5" cy="34.5" r="2.8" fill="none" stroke="#666" stroke-width="2.4"/></svg>
<svg class="a" style="left:3694.60px;top:351.60px;width:33.00px;height:10.00px;" viewBox="0 0 33 10" preserveAspectRatio="none"><circle cx="4.5" cy="5" r="3.8" fill="#6244bb"/><circle cx="16.5" cy="5" r="3.8" fill="#6244bb"/><circle cx="28.5" cy="5" r="3.8" fill="#6244bb"/></svg>
<div class="a" style="left:1063.30px;top:410.60px;width:173.40px;height:38.50px;background:#fff;border:2px solid #0d2a4d;border-radius:20px"></div>
<div class="t" style="top:417.19px;font-size:26px;color:#333333;font-weight:700;letter-spacing:-0.929px;left:1080.60px;">CLE/737/CA</div>
<div class="a" style="left:1246.00px;top:410.60px;width:197.00px;height:38.50px;background:#fff;border:2px solid #0d2a4d;border-radius:20px"></div>
<div class="t" style="top:417.19px;font-size:26px;color:#333333;font-weight:700;letter-spacing:0.156px;left:1263.30px;">19Mar-31Mar</div>
<div class="a" style="left:1452.40px;top:410.60px;width:122.60px;height:38.50px;background:#fff;border:2px solid #0d2a4d;border-radius:20px"></div>
<svg class="a" style="left:1541.00px;top:415.60px;width:26.00px;height:26.00px;" viewBox="0 0 26 26" preserveAspectRatio="none"><circle cx="13" cy="13" r="13" fill="#333"/><path d="M7.5 7.5 L18.5 18.5 M18.5 7.5 L7.5 18.5" stroke="#fff" stroke-width="1.9"/></svg>
<div class="t" style="top:417.19px;font-size:26px;color:#333333;-webkit-text-stroke:0.57px #333333;letter-spacing:-0.202px;left:1469.70px;">Open</div>
<div class="a" style="left:1584.50px;top:410.60px;width:166.70px;height:38.50px;background:#fff;border:2px solid #0d2a4d;border-radius:20px"></div>
<svg class="a" style="left:1717.20px;top:415.60px;width:26.00px;height:26.00px;" viewBox="0 0 26 26" preserveAspectRatio="none"><circle cx="13" cy="13" r="13" fill="#333"/><path d="M7.5 7.5 L18.5 18.5 M18.5 7.5 L7.5 18.5" stroke="#fff" stroke-width="1.9"/></svg>
<div class="t" style="top:417.19px;font-size:26px;color:#333333;-webkit-text-stroke:0.57px #333333;letter-spacing:-0.296px;left:1601.80px;">Assigned</div>
<div class="a" style="left:1760.60px;top:410.60px;width:117.20px;height:38.50px;background:#fff;border:2px solid #0d2a4d;border-radius:20px"></div>
<svg class="a" style="left:1843.80px;top:415.60px;width:26.00px;height:26.00px;" viewBox="0 0 26 26" preserveAspectRatio="none"><circle cx="13" cy="13" r="13" fill="#333"/><path d="M7.5 7.5 L18.5 18.5 M18.5 7.5 L7.5 18.5" stroke="#fff" stroke-width="1.9"/></svg>
<div class="t" style="top:417.19px;font-size:26px;color:#333333;-webkit-text-stroke:0.57px #333333;letter-spacing:0.282px;left:1777.90px;">Avail</div>
<div class="a" style="left:1887.00px;top:410.60px;width:139.40px;height:38.50px;background:#fff;border:2px solid #0d2a4d;border-radius:20px"></div>
<svg class="a" style="left:1992.40px;top:415.60px;width:26.00px;height:26.00px;" viewBox="0 0 26 26" preserveAspectRatio="none"><circle cx="13" cy="13" r="13" fill="#333"/><path d="M7.5 7.5 L18.5 18.5 M18.5 7.5 L7.5 18.5" stroke="#fff" stroke-width="1.9"/></svg>
<div class="t" style="top:417.19px;font-size:26px;color:#333333;-webkit-text-stroke:0.57px #333333;letter-spacing:-0.295px;left:1904.30px;">Trades</div>
<div class="a" style="left:2036.30px;top:410.60px;width:130.50px;height:38.50px;background:#fff;border:2px solid #0d2a4d;border-radius:20px"></div>
<svg class="a" style="left:2132.80px;top:415.60px;width:26.00px;height:26.00px;" viewBox="0 0 26 26" preserveAspectRatio="none"><circle cx="13" cy="13" r="13" fill="#333"/><path d="M7.5 7.5 L18.5 18.5 M18.5 7.5 L7.5 18.5" stroke="#fff" stroke-width="1.9"/></svg>
<div class="t" style="top:417.19px;font-size:26px;color:#333333;-webkit-text-stroke:0.57px #333333;letter-spacing:0.208px;left:2053.60px;">Drops</div>
<div class="a" style="left:2176.70px;top:410.60px;width:89.10px;height:38.50px;background:#fff;border:2px solid #0d2a4d;border-radius:20px"></div>
<svg class="a" style="left:2231.80px;top:415.60px;width:26.00px;height:26.00px;" viewBox="0 0 26 26" preserveAspectRatio="none"><circle cx="13" cy="13" r="13" fill="#333"/><path d="M7.5 7.5 L18.5 18.5 M18.5 7.5 L7.5 18.5" stroke="#fff" stroke-width="1.9"/></svg>
<div class="t" style="top:417.19px;font-size:26px;color:#333333;-webkit-text-stroke:0.57px #333333;letter-spacing:-2.963px;left:2194.00px;">SC</div>
<div class="a" style="left:2275.20px;top:410.60px;width:102.30px;height:38.50px;background:#fff;border:2px solid #0d2a4d;border-radius:20px"></div>
<svg class="a" style="left:2343.50px;top:415.60px;width:26.00px;height:26.00px;" viewBox="0 0 26 26" preserveAspectRatio="none"><circle cx="13" cy="13" r="13" fill="#333"/><path d="M7.5 7.5 L18.5 18.5 M18.5 7.5 L7.5 18.5" stroke="#fff" stroke-width="1.9"/></svg>
<div class="t" style="top:417.19px;font-size:26px;color:#333333;-webkit-text-stroke:0.57px #333333;letter-spacing:-3.093px;left:2292.50px;">FSB</div>
<div class="a" style="left:2385.50px;top:410.60px;width:137.50px;height:38.50px;background:#fff;border:2px solid #0d2a4d;border-radius:20px"></div>
<svg class="a" style="left:2489.00px;top:415.60px;width:26.00px;height:26.00px;" viewBox="0 0 26 26" preserveAspectRatio="none"><circle cx="13" cy="13" r="13" fill="#333"/><path d="M7.5 7.5 L18.5 18.5 M18.5 7.5 L7.5 18.5" stroke="#fff" stroke-width="1.9"/></svg>
<div class="t" style="top:417.19px;font-size:26px;color:#333333;-webkit-text-stroke:0.57px #333333;letter-spacing:0.074px;left:2402.80px;">Fill-ins</div>
<svg class="a" style="left:3612.00px;top:415.00px;width:34.00px;height:29.00px;" viewBox="0 0 34 29" preserveAspectRatio="none"><path d="M9 27 V3 M2 10 L9 2.5 L16 10" fill="none" stroke="#6244bb" stroke-width="3"/><path d="M25 2 V26 M18 19 L25 26.5 L32 19" fill="none" stroke="#6244bb" stroke-width="3"/></svg>
<div class="t" style="top:416.84px;font-size:27px;color:#6244bb;letter-spacing:-0.129px;left:3653.00px;text-decoration:underline;text-decoration-thickness:2px;text-underline-offset:4px;">Sort (3)</div>
<div class="a" style="left:1063.00px;top:461.00px;width:2680.00px;height:51.70px;background:#002244;"></div>
<svg class="a" style="left:1080.60px;top:471.00px;width:32.10px;height:27.00px;" viewBox="0 0 46 38" preserveAspectRatio="none"><path d="M0 2 H9 L17 30 H38" fill="none" stroke="#fff" stroke-width="3" stroke-linejoin="round"/><path d="M10 7.5 H46 L42 26 H15 Z" fill="#fff"/><circle cx="17.5" cy="34.5" r="2.8" fill="none" stroke="#fff" stroke-width="2.4"/><circle cx="37.5" cy="34.5" r="2.8" fill="none" stroke="#fff" stroke-width="2.4"/></svg>
<svg class="a" style="left:1141.50px;top:468.00px;width:30.50px;height:31.00px;" viewBox="0 0 30 31" preserveAspectRatio="none"><path d="M1.7 1 V30" stroke="#fff" stroke-width="3.4" stroke-linecap="round"/><path d="M2 3 C 9 0, 17 6, 29 2 V20 C 17 24, 9 18, 2 21 Z" fill="#fff"/></svg>
<div class="t" style="top:475.29px;font-size:26px;color:#fff;font-weight:700;letter-spacing:0.407px;left:1273.30px;">Trip</div>
<div class="t" style="top:475.29px;font-size:26px;color:#fff;font-weight:700;left:435.50px;width:2000px;text-align:center;">Date</div>
<div class="t" style="top:475.29px;font-size:26px;color:#fff;font-weight:700;left:521.20px;width:2000px;text-align:center;">Days</div>
<div class="t" style="top:475.29px;font-size:26px;color:#fff;font-weight:700;left:611.20px;width:2000px;text-align:center;">Rept</div>
<div class="t" style="top:475.29px;font-size:26px;color:#fff;font-weight:700;left:715.30px;width:2000px;text-align:center;">Dep stn</div>
<div class="t" style="top:475.29px;font-size:26px;color:#fff;font-weight:700;left:821.30px;width:2000px;text-align:center;">Dep tm</div>
<div class="t" style="top:475.29px;font-size:26px;color:#fff;font-weight:700;left:927.50px;width:2000px;text-align:center;">1st flt #</div>
<div class="t" style="top:475.29px;font-size:26px;color:#fff;font-weight:700;left:1035.60px;width:2000px;text-align:center;">Arr stn</div>
<div class="t" style="top:475.29px;font-size:26px;color:#fff;font-weight:700;left:1141.30px;width:2000px;text-align:center;">Arr tm</div>
<div class="t" style="top:475.29px;font-size:26px;color:#fff;font-weight:700;left:1243.40px;width:2000px;text-align:center;">Rls</div>
<div class="t" style="top:475.29px;font-size:26px;color:#fff;font-weight:700;left:1335.30px;width:2000px;text-align:center;">Intl</div>
<div class="t" style="top:475.29px;font-size:26px;color:#fff;font-weight:700;left:1427.50px;width:2000px;text-align:center;">Block</div>
<div class="t" style="top:475.29px;font-size:26px;color:#fff;font-weight:700;left:1527.40px;width:2000px;text-align:center;">PTC</div>
<div class="t" style="top:475.29px;font-size:26px;color:#fff;font-weight:700;left:1627.30px;width:2000px;text-align:center;">TAFB</div>
<div class="t" style="top:475.29px;font-size:26px;color:#fff;font-weight:700;left:1747.40px;width:2000px;text-align:center;">Add pay</div>
<div class="t" style="top:475.29px;font-size:26px;color:#fff;font-weight:700;left:1867.30px;width:2000px;text-align:center;">Soft Tm</div>
<div class="t" style="top:475.29px;font-size:26px;color:#fff;font-weight:700;left:1981.50px;width:2000px;text-align:center;">Per diem</div>
<div class="t" style="top:475.29px;font-size:26px;color:#fff;font-weight:700;letter-spacing:0.119px;left:3053.80px;">L/O</div>
<div class="t" style="top:475.29px;font-size:26px;color:#fff;font-weight:700;letter-spacing:0.345px;left:3457.70px;">Open/posted</div>
<svg class="a" style="left:3646.00px;top:469.50px;width:34.00px;height:34.00px;" viewBox="0 0 34 34" preserveAspectRatio="none"><circle cx="17" cy="17" r="17" fill="#fff"/><circle cx="17" cy="9.5" r="2.6" fill="#002244"/><rect x="14.8" y="14" width="4.4" height="13" fill="#002244"/></svg>
<svg class="a" style="left:3694.70px;top:470.50px;width:33.00px;height:33.00px;" viewBox="0 0 32 32" preserveAspectRatio="none"><path d="M28.2 8.6 A14.3 14.3 0 1 0 30.1 16.3" fill="none" stroke="#fff" stroke-width="2.9" stroke-linecap="round"/><path d="M21.5 10.4 L29.4 11.3 L31 3.3" fill="none" stroke="#fff" stroke-width="2.9" stroke-linejoin="round" stroke-linecap="round"/></svg>
<div class="a" style="left:1063.00px;top:512.70px;width:2680.00px;height:859.95px;background:#fff;"></div>
<div class="a" style="left:1063.00px;top:512.70px;width:2.00px;height:859.95px;background:#cfcfcf;"></div>
<div class="a" style="left:3642.50px;top:512.70px;width:2.00px;height:859.95px;background:#d6d6d6;"></div>
<div class="a" style="left:3741.50px;top:512.70px;width:2.00px;height:859.95px;background:#cfcfcf;"></div>
<div class="a" style="left:1065.00px;top:568.53px;width:2678.00px;height:2.00px;background:#d2d2d2;"></div>
<svg class="a" style="left:1081.20px;top:525.37px;width:32.00px;height:32.00px;" viewBox="0 0 32 32" preserveAspectRatio="none"><circle cx="16" cy="16" r="16" fill="#666"/><path d="M16 6.3 V25.7 M6.3 16 H25.7" stroke="#fff" stroke-width="2.4" stroke-linecap="round"/></svg>
<svg class="a" style="left:1140.50px;top:522.37px;width:32.00px;height:36.00px;" viewBox="0 0 32 36" preserveAspectRatio="none"><path d="M2.3 1.5 V34" stroke="#333" stroke-width="3.2" stroke-linecap="round"/><path d="M3 4.6 C 7 1.8, 10.5 1.6, 15.5 4 S 25.5 7.6, 30.4 3.6 V 24.6 C 25.5 28.6, 20.5 27.2, 15.5 25 S 7 22.2, 3 25.6" fill="none" stroke="#333" stroke-width="3" stroke-linejoin="round"/></svg>
<svg class="a" style="left:1188.00px;top:522.37px;width:28.00px;height:36.00px;" viewBox="0 0 28 36" preserveAspectRatio="none"><path d="M3.6 4.6 L13.8 0 L24 4.6 L22.6 9.4 Q13.8 8 5 9.4 Z" fill="#333"/><path d="M7.5 6.4 Q13.8 4.4 20.1 6.4" fill="none" stroke="#fff" stroke-width="1.3"/><path d="M6.6 10.6 Q13.8 9.8 21 10.6 Q21.6 12 21.2 14.8 A7.4 7.4 0 0 1 6.4 14.8 Q6 12 6.6 10.6 Z" fill="#333"/><path d="M0.4 35.5 V30.5 Q0.4 24.6 7 23.6 L13.8 27.4 L20.6 23.6 Q27.4 24.6 27.4 30.5 V35.5 Z" fill="#333"/><rect x="17.8" y="28.6" width="4.8" height="2" rx="1" fill="#fff"/></svg>
<div class="t" style="top:529.69px;font-size:26px;color:#333333;left:1273.30px;">V5031</div>
<div class="t" style="top:529.69px;font-size:26px;color:#333333;left:435.50px;width:2000px;text-align:center;">19Mar</div>
<div class="t" style="top:529.69px;font-size:26px;color:#333333;left:521.20px;width:2000px;text-align:center;">2</div>
<div class="t" style="top:529.69px;font-size:26px;color:#333333;left:611.20px;width:2000px;text-align:center;">05:00</div>
<div class="t" style="top:529.69px;font-size:26px;color:#333333;left:715.30px;width:2000px;text-align:center;">CLE</div>
<div class="t" style="top:529.69px;font-size:26px;color:#333333;left:821.30px;width:2000px;text-align:center;">06:00</div>
<div class="t" style="top:529.69px;font-size:26px;color:#333333;left:927.50px;width:2000px;text-align:center;">1252</div>
<div class="t" style="top:529.69px;font-size:26px;color:#333333;left:1035.60px;width:2000px;text-align:center;">CLE</div>
<div class="t" style="top:529.69px;font-size:26px;color:#333333;left:1141.30px;width:2000px;text-align:center;">22:15</div>
<div class="t" style="top:529.69px;font-size:26px;color:#333333;left:1243.40px;width:2000px;text-align:center;">22:30</div>
<div class="t" style="top:529.69px;font-size:26px;color:#333333;left:1335.30px;width:2000px;text-align:center;">No</div>
<div class="t" style="top:529.69px;font-size:26px;color:#333333;left:1427.50px;width:2000px;text-align:center;">11:44</div>
<div class="t" style="top:529.69px;font-size:26px;color:#333333;left:1527.40px;width:2000px;text-align:center;">11:51</div>
<div class="t" style="top:529.69px;font-size:26px;color:#333333;left:1627.30px;width:2000px;text-align:center;">41:30</div>
<div class="t" style="top:529.69px;font-size:26px;color:#333333;left:1747.40px;width:2000px;text-align:center;">$0.00</div>
<div class="t" style="top:529.69px;font-size:26px;color:#333333;left:1867.30px;width:2000px;text-align:center;">00:07</div>
<div class="t" style="top:529.69px;font-size:26px;color:#333333;left:1981.50px;width:2000px;text-align:center;">$126.16</div>
<div class="t" style="top:532.08px;font-size:22px;color:#333333;left:3053.80px;">PUJ</div>
<svg class="a" style="left:3305.40px;top:522.07px;width:35.60px;height:35.60px;" viewBox="0 0 35.6 35.6" preserveAspectRatio="none"><circle cx="17.8" cy="17.8" r="17.8" fill="#002244"/><text x="5.8" y="24.9" font-family="Liberation Sans" font-weight="700" font-size="19.5" fill="#fff" textLength="23.8" lengthAdjust="spacingAndGlyphs">RT</text></svg>
<svg class="a" style="left:3671.00px;top:536.37px;width:33.00px;height:10.00px;" viewBox="0 0 33 10" preserveAspectRatio="none"><circle cx="4.5" cy="5" r="3.8" fill="#6244bb"/><circle cx="16.5" cy="5" r="3.8" fill="#6244bb"/><circle cx="28.5" cy="5" r="3.8" fill="#6244bb"/></svg>
<div class="a" style="left:1065.00px;top:625.86px;width:2678.00px;height:2.00px;background:#d2d2d2;"></div>
<svg class="a" style="left:1081.20px;top:582.70px;width:32.00px;height:32.00px;" viewBox="0 0 32 32" preserveAspectRatio="none"><circle cx="16" cy="16" r="16" fill="#666"/><path d="M16 6.3 V25.7 M6.3 16 H25.7" stroke="#fff" stroke-width="2.4" stroke-linecap="round"/></svg>
<svg class="a" style="left:1140.50px;top:579.70px;width:32.00px;height:36.00px;" viewBox="0 0 32 36" preserveAspectRatio="none"><path d="M2.3 1.5 V34" stroke="#333" stroke-width="3.2" stroke-linecap="round"/><path d="M3 4.6 C 7 1.8, 10.5 1.6, 15.5 4 S 25.5 7.6, 30.4 3.6 V 24.6 C 25.5 28.6, 20.5 27.2, 15.5 25 S 7 22.2, 3 25.6" fill="none" stroke="#333" stroke-width="3" stroke-linejoin="round"/></svg>
<svg class="a" style="left:1188.00px;top:579.70px;width:28.00px;height:36.00px;" viewBox="0 0 28 36" preserveAspectRatio="none"><path d="M3.6 4.6 L13.8 0 L24 4.6 L22.6 9.4 Q13.8 8 5 9.4 Z" fill="#333"/><path d="M7.5 6.4 Q13.8 4.4 20.1 6.4" fill="none" stroke="#fff" stroke-width="1.3"/><path d="M6.6 10.6 Q13.8 9.8 21 10.6 Q21.6 12 21.2 14.8 A7.4 7.4 0 0 1 6.4 14.8 Q6 12 6.6 10.6 Z" fill="#333"/><path d="M0.4 35.5 V30.5 Q0.4 24.6 7 23.6 L13.8 27.4 L20.6 23.6 Q27.4 24.6 27.4 30.5 V35.5 Z" fill="#333"/><rect x="17.8" y="28.6" width="4.8" height="2" rx="1" fill="#fff"/></svg>
<div class="t" style="top:587.02px;font-size:26px;color:#333333;font-weight:700;left:1273.30px;">V5148</div>
<div class="t" style="top:587.02px;font-size:26px;color:#333333;font-weight:700;left:435.50px;width:2000px;text-align:center;">19Mar</div>
<div class="t" style="top:587.02px;font-size:26px;color:#333333;font-weight:700;left:521.20px;width:2000px;text-align:center;">3</div>
<div class="t" style="top:587.02px;font-size:26px;color:#333333;font-weight:700;left:611.20px;width:2000px;text-align:center;">05:00</div>
<div class="t" style="top:587.02px;font-size:26px;color:#333333;font-weight:700;left:715.30px;width:2000px;text-align:center;">CLE</div>
<div class="t" style="top:587.02px;font-size:26px;color:#333333;font-weight:700;left:821.30px;width:2000px;text-align:center;">06:00</div>
<div class="t" style="top:587.02px;font-size:26px;color:#333333;font-weight:700;left:927.50px;width:2000px;text-align:center;">1645</div>
<div class="t" style="top:587.02px;font-size:26px;color:#333333;font-weight:700;left:1035.60px;width:2000px;text-align:center;">CLE</div>
<div class="t" style="top:587.02px;font-size:26px;color:#333333;font-weight:700;left:1141.30px;width:2000px;text-align:center;">14:30</div>
<div class="t" style="top:587.02px;font-size:26px;color:#333333;font-weight:700;left:1243.40px;width:2000px;text-align:center;">14:45</div>
<div class="t" style="top:587.02px;font-size:26px;color:#333333;font-weight:700;left:1335.30px;width:2000px;text-align:center;">No</div>
<div class="t" style="top:587.02px;font-size:26px;color:#333333;font-weight:700;left:1427.50px;width:2000px;text-align:center;">16:56</div>
<div class="t" style="top:587.02px;font-size:26px;color:#333333;font-weight:700;left:1527.40px;width:2000px;text-align:center;">16:56</div>
<div class="t" style="top:587.02px;font-size:26px;color:#333333;font-weight:700;left:1627.30px;width:2000px;text-align:center;">57:45</div>
<div class="t" style="top:587.02px;font-size:26px;color:#333333;font-weight:700;left:1747.40px;width:2000px;text-align:center;">$0.00</div>
<div class="t" style="top:587.02px;font-size:26px;color:#333333;font-weight:700;left:1867.30px;width:2000px;text-align:center;">00:00</div>
<div class="t" style="top:587.02px;font-size:26px;color:#333333;font-weight:700;left:1981.50px;width:2000px;text-align:center;">$175.56</div>
<div class="t" style="top:589.41px;font-size:22px;color:#333333;font-weight:700;left:3053.80px;">ABQ, RDU</div>
<svg class="a" style="left:3305.40px;top:579.40px;width:35.60px;height:35.60px;" viewBox="0 0 35.6 35.6" preserveAspectRatio="none"><circle cx="17.8" cy="17.8" r="17.8" fill="#002244"/><text x="5.8" y="24.9" font-family="Liberation Sans" font-weight="700" font-size="19.5" fill="#fff" textLength="23.8" lengthAdjust="spacingAndGlyphs">RT</text></svg>
<svg class="a" style="left:3671.00px;top:593.70px;width:33.00px;height:10.00px;" viewBox="0 0 33 10" preserveAspectRatio="none"><circle cx="4.5" cy="5" r="3.8" fill="#6244bb"/><circle cx="16.5" cy="5" r="3.8" fill="#6244bb"/><circle cx="28.5" cy="5" r="3.8" fill="#6244bb"/></svg>
<div class="a" style="left:1065.00px;top:683.19px;width:2678.00px;height:2.00px;background:#d2d2d2;"></div>
<svg class="a" style="left:1081.20px;top:640.02px;width:32.00px;height:32.00px;" viewBox="0 0 32 32" preserveAspectRatio="none"><circle cx="16" cy="16" r="16" fill="#666"/><path d="M16 6.3 V25.7 M6.3 16 H25.7" stroke="#fff" stroke-width="2.4" stroke-linecap="round"/></svg>
<svg class="a" style="left:1140.50px;top:637.02px;width:32.00px;height:36.00px;" viewBox="0 0 32 36" preserveAspectRatio="none"><path d="M2.3 1.5 V34" stroke="#333" stroke-width="3.2" stroke-linecap="round"/><path d="M3 4.6 C 7 1.8, 10.5 1.6, 15.5 4 S 25.5 7.6, 30.4 3.6 V 24.6 C 25.5 28.6, 20.5 27.2, 15.5 25 S 7 22.2, 3 25.6" fill="none" stroke="#333" stroke-width="3" stroke-linejoin="round"/></svg>
<svg class="a" style="left:1188.00px;top:637.02px;width:28.00px;height:36.00px;" viewBox="0 0 28 36" preserveAspectRatio="none"><path d="M3.6 4.6 L13.8 0 L24 4.6 L22.6 9.4 Q13.8 8 5 9.4 Z" fill="#333"/><path d="M7.5 6.4 Q13.8 4.4 20.1 6.4" fill="none" stroke="#fff" stroke-width="1.3"/><path d="M6.6 10.6 Q13.8 9.8 21 10.6 Q21.6 12 21.2 14.8 A7.4 7.4 0 0 1 6.4 14.8 Q6 12 6.6 10.6 Z" fill="#333"/><path d="M0.4 35.5 V30.5 Q0.4 24.6 7 23.6 L13.8 27.4 L20.6 23.6 Q27.4 24.6 27.4 30.5 V35.5 Z" fill="#333"/><rect x="17.8" y="28.6" width="4.8" height="2" rx="1" fill="#fff"/></svg>
<div class="t" style="top:644.35px;font-size:26px;color:#333333;font-weight:700;left:1273.30px;">V5163</div>
<div class="t" style="top:644.35px;font-size:26px;color:#333333;font-weight:700;left:435.50px;width:2000px;text-align:center;">19Mar</div>
<div class="t" style="top:644.35px;font-size:26px;color:#333333;font-weight:700;left:521.20px;width:2000px;text-align:center;">3</div>
<div class="t" style="top:644.35px;font-size:26px;color:#333333;font-weight:700;left:611.20px;width:2000px;text-align:center;">05:23</div>
<div class="t" style="top:644.35px;font-size:26px;color:#333333;font-weight:700;left:715.30px;width:2000px;text-align:center;">CLE</div>
<div class="t" style="top:644.35px;font-size:26px;color:#333333;font-weight:700;left:821.30px;width:2000px;text-align:center;">06:23</div>
<div class="t" style="top:644.35px;font-size:26px;color:#333333;font-weight:700;left:927.50px;width:2000px;text-align:center;">0601</div>
<div class="t" style="top:644.35px;font-size:26px;color:#333333;font-weight:700;left:1035.60px;width:2000px;text-align:center;">CLE</div>
<div class="t" style="top:644.35px;font-size:26px;color:#333333;font-weight:700;left:1141.30px;width:2000px;text-align:center;">15:54</div>
<div class="t" style="top:644.35px;font-size:26px;color:#333333;font-weight:700;left:1243.40px;width:2000px;text-align:center;">16:09</div>
<div class="t" style="top:644.35px;font-size:26px;color:#333333;font-weight:700;left:1335.30px;width:2000px;text-align:center;">No</div>
<div class="t" style="top:644.35px;font-size:26px;color:#333333;font-weight:700;left:1427.50px;width:2000px;text-align:center;">16:54</div>
<div class="t" style="top:644.35px;font-size:26px;color:#333333;font-weight:700;left:1527.40px;width:2000px;text-align:center;">16:54</div>
<div class="t" style="top:644.35px;font-size:26px;color:#333333;font-weight:700;left:1627.30px;width:2000px;text-align:center;">58:46</div>
<div class="t" style="top:644.35px;font-size:26px;color:#333333;font-weight:700;left:1747.40px;width:2000px;text-align:center;">$103.79</div>
<div class="t" style="top:644.35px;font-size:26px;color:#333333;font-weight:700;left:1867.30px;width:2000px;text-align:center;">00:00</div>
<div class="t" style="top:644.35px;font-size:26px;color:#333333;font-weight:700;left:1981.50px;width:2000px;text-align:center;">$178.65</div>
<div class="t" style="top:646.74px;font-size:22px;color:#333333;font-weight:700;left:3053.80px;">ATL, RDM</div>
<svg class="a" style="left:3305.40px;top:636.73px;width:35.60px;height:35.60px;" viewBox="0 0 35.6 35.6" preserveAspectRatio="none"><circle cx="17.8" cy="17.8" r="17.8" fill="#002244"/><text x="5.8" y="24.9" font-family="Liberation Sans" font-weight="700" font-size="19.5" fill="#fff" textLength="23.8" lengthAdjust="spacingAndGlyphs">RT</text></svg>
<svg class="a" style="left:3671.00px;top:651.02px;width:33.00px;height:10.00px;" viewBox="0 0 33 10" preserveAspectRatio="none"><circle cx="4.5" cy="5" r="3.8" fill="#6244bb"/><circle cx="16.5" cy="5" r="3.8" fill="#6244bb"/><circle cx="28.5" cy="5" r="3.8" fill="#6244bb"/></svg>
<div class="a" style="left:1065.00px;top:740.52px;width:2678.00px;height:2.00px;background:#d2d2d2;"></div>
<svg class="a" style="left:1081.20px;top:697.36px;width:32.00px;height:32.00px;" viewBox="0 0 32 32" preserveAspectRatio="none"><circle cx="16" cy="16" r="16" fill="#666"/><path d="M16 6.3 V25.7 M6.3 16 H25.7" stroke="#fff" stroke-width="2.4" stroke-linecap="round"/></svg>
<svg class="a" style="left:1140.50px;top:694.36px;width:32.00px;height:36.00px;" viewBox="0 0 32 36" preserveAspectRatio="none"><path d="M2.3 1.5 V34" stroke="#333" stroke-width="3.2" stroke-linecap="round"/><path d="M3 4.6 C 7 1.8, 10.5 1.6, 15.5 4 S 25.5 7.6, 30.4 3.6 V 24.6 C 25.5 28.6, 20.5 27.2, 15.5 25 S 7 22.2, 3 25.6" fill="none" stroke="#333" stroke-width="3" stroke-linejoin="round"/></svg>
<svg class="a" style="left:1188.00px;top:694.36px;width:28.00px;height:36.00px;" viewBox="0 0 28 36" preserveAspectRatio="none"><path d="M3.6 4.6 L13.8 0 L24 4.6 L22.6 9.4 Q13.8 8 5 9.4 Z" fill="#333"/><path d="M7.5 6.4 Q13.8 4.4 20.1 6.4" fill="none" stroke="#fff" stroke-width="1.3"/><path d="M6.6 10.6 Q13.8 9.8 21 10.6 Q21.6 12 21.2 14.8 A7.4 7.4 0 0 1 6.4 14.8 Q6 12 6.6 10.6 Z" fill="#333"/><path d="M0.4 35.5 V30.5 Q0.4 24.6 7 23.6 L13.8 27.4 L20.6 23.6 Q27.4 24.6 27.4 30.5 V35.5 Z" fill="#333"/><rect x="17.8" y="28.6" width="4.8" height="2" rx="1" fill="#fff"/></svg>
<div class="t" style="top:701.68px;font-size:26px;color:#333333;font-weight:700;left:1273.30px;">V5002</div>
<div class="t" style="top:701.68px;font-size:26px;color:#333333;font-weight:700;left:435.50px;width:2000px;text-align:center;">19Mar</div>
<div class="t" style="top:701.68px;font-size:26px;color:#333333;font-weight:700;left:521.20px;width:2000px;text-align:center;">1</div>
<div class="t" style="top:701.68px;font-size:26px;color:#333333;font-weight:700;left:611.20px;width:2000px;text-align:center;">06:00</div>
<div class="t" style="top:701.68px;font-size:26px;color:#333333;font-weight:700;left:715.30px;width:2000px;text-align:center;">CLE</div>
<div class="t" style="top:701.68px;font-size:26px;color:#333333;font-weight:700;left:821.30px;width:2000px;text-align:center;">07:00</div>
<div class="t" style="top:701.68px;font-size:26px;color:#333333;font-weight:700;left:927.50px;width:2000px;text-align:center;">1955</div>
<div class="t" style="top:701.68px;font-size:26px;color:#333333;font-weight:700;left:1035.60px;width:2000px;text-align:center;">CLE</div>
<div class="t" style="top:701.68px;font-size:26px;color:#333333;font-weight:700;left:1141.30px;width:2000px;text-align:center;">13:52</div>
<div class="t" style="top:701.68px;font-size:26px;color:#333333;font-weight:700;left:1243.40px;width:2000px;text-align:center;">14:07</div>
<div class="t" style="top:701.68px;font-size:26px;color:#333333;font-weight:700;left:1335.30px;width:2000px;text-align:center;">No</div>
<div class="t" style="top:701.68px;font-size:26px;color:#333333;font-weight:700;left:1427.50px;width:2000px;text-align:center;">05:50</div>
<div class="t" style="top:701.68px;font-size:26px;color:#333333;font-weight:700;left:1527.40px;width:2000px;text-align:center;">05:50</div>
<div class="t" style="top:701.68px;font-size:26px;color:#333333;font-weight:700;left:1627.30px;width:2000px;text-align:center;">08:07</div>
<div class="t" style="top:701.68px;font-size:26px;color:#333333;font-weight:700;left:1747.40px;width:2000px;text-align:center;">$0.00</div>
<div class="t" style="top:701.68px;font-size:26px;color:#333333;font-weight:700;left:1867.30px;width:2000px;text-align:center;">00:00</div>
<div class="t" style="top:701.68px;font-size:26px;color:#333333;font-weight:700;left:1981.50px;width:2000px;text-align:center;">$24.67</div>
<svg class="a" style="left:3305.40px;top:694.06px;width:35.60px;height:35.60px;" viewBox="0 0 35.6 35.6" preserveAspectRatio="none"><circle cx="17.8" cy="17.8" r="17.8" fill="#002244"/><text x="5.8" y="24.9" font-family="Liberation Sans" font-weight="700" font-size="19.5" fill="#fff" textLength="23.8" lengthAdjust="spacingAndGlyphs">RT</text></svg>
<svg class="a" style="left:3671.00px;top:708.36px;width:33.00px;height:10.00px;" viewBox="0 0 33 10" preserveAspectRatio="none"><circle cx="4.5" cy="5" r="3.8" fill="#6244bb"/><circle cx="16.5" cy="5" r="3.8" fill="#6244bb"/><circle cx="28.5" cy="5" r="3.8" fill="#6244bb"/></svg>
<div class="a" style="left:1065.00px;top:797.85px;width:2678.00px;height:2.00px;background:#d2d2d2;"></div>
<svg class="a" style="left:1081.20px;top:754.68px;width:32.00px;height:32.00px;" viewBox="0 0 32 32" preserveAspectRatio="none"><circle cx="16" cy="16" r="16" fill="#666"/><path d="M16 6.3 V25.7 M6.3 16 H25.7" stroke="#fff" stroke-width="2.4" stroke-linecap="round"/></svg>
<svg class="a" style="left:1140.50px;top:751.68px;width:32.00px;height:36.00px;" viewBox="0 0 32 36" preserveAspectRatio="none"><path d="M2.3 1.5 V34" stroke="#333" stroke-width="3.2" stroke-linecap="round"/><path d="M3 4.6 C 7 1.8, 10.5 1.6, 15.5 4 S 25.5 7.6, 30.4 3.6 V 24.6 C 25.5 28.6, 20.5 27.2, 15.5 25 S 7 22.2, 3 25.6" fill="none" stroke="#333" stroke-width="3" stroke-linejoin="round"/></svg>
<svg class="a" style="left:1188.00px;top:751.68px;width:28.00px;height:36.00px;" viewBox="0 0 28 36" preserveAspectRatio="none"><path d="M3.6 4.6 L13.8 0 L24 4.6 L22.6 9.4 Q13.8 8 5 9.4 Z" fill="#333"/><path d="M7.5 6.4 Q13.8 4.4 20.1 6.4" fill="none" stroke="#fff" stroke-width="1.3"/><path d="M6.6 10.6 Q13.8 9.8 21 10.6 Q21.6 12 21.2 14.8 A7.4 7.4 0 0 1 6.4 14.8 Q6 12 6.6 10.6 Z" fill="#333"/><path d="M0.4 35.5 V30.5 Q0.4 24.6 7 23.6 L13.8 27.4 L20.6 23.6 Q27.4 24.6 27.4 30.5 V35.5 Z" fill="#333"/><rect x="17.8" y="28.6" width="4.8" height="2" rx="1" fill="#fff"/></svg>
<div class="t" style="top:759.01px;font-size:26px;color:#333333;font-weight:700;left:1273.30px;">V5179</div>
<div class="t" style="top:759.01px;font-size:26px;color:#333333;font-weight:700;left:435.50px;width:2000px;text-align:center;">19Mar</div>
<div class="t" style="top:759.01px;font-size:26px;color:#333333;font-weight:700;left:521.20px;width:2000px;text-align:center;">3</div>
<div class="t" style="top:759.01px;font-size:26px;color:#333333;font-weight:700;left:611.20px;width:2000px;text-align:center;">06:00</div>
<div class="t" style="top:759.01px;font-size:26px;color:#333333;font-weight:700;left:715.30px;width:2000px;text-align:center;">CLE</div>
<div class="t" style="top:759.01px;font-size:26px;color:#333333;font-weight:700;left:821.30px;width:2000px;text-align:center;">07:00</div>
<div class="t" style="top:759.01px;font-size:26px;color:#333333;font-weight:700;left:927.50px;width:2000px;text-align:center;">0715</div>
<div class="t" style="top:759.01px;font-size:26px;color:#333333;font-weight:700;left:1035.60px;width:2000px;text-align:center;">CLE</div>
<div class="t" style="top:759.01px;font-size:26px;color:#333333;font-weight:700;left:1141.30px;width:2000px;text-align:center;">13:14</div>
<div class="t" style="top:759.01px;font-size:26px;color:#333333;font-weight:700;left:1243.40px;width:2000px;text-align:center;">13:29</div>
<div class="t" style="top:759.01px;font-size:26px;color:#333333;font-weight:700;left:1335.30px;width:2000px;text-align:center;">No</div>
<div class="t" style="top:759.01px;font-size:26px;color:#333333;font-weight:700;left:1427.50px;width:2000px;text-align:center;">18:23</div>
<div class="t" style="top:759.01px;font-size:26px;color:#333333;font-weight:700;left:1527.40px;width:2000px;text-align:center;">18:23</div>
<div class="t" style="top:759.01px;font-size:26px;color:#333333;font-weight:700;left:1627.30px;width:2000px;text-align:center;">55:29</div>
<div class="t" style="top:759.01px;font-size:26px;color:#333333;font-weight:700;left:1747.40px;width:2000px;text-align:center;">$0.00</div>
<div class="t" style="top:759.01px;font-size:26px;color:#333333;font-weight:700;left:1867.30px;width:2000px;text-align:center;">00:00</div>
<div class="t" style="top:759.01px;font-size:26px;color:#333333;font-weight:700;left:1981.50px;width:2000px;text-align:center;">$168.67</div>
<div class="t" style="top:761.40px;font-size:22px;color:#333333;font-weight:700;left:3053.80px;">IAH, EWR</div>
<svg class="a" style="left:3305.40px;top:751.38px;width:35.60px;height:35.60px;" viewBox="0 0 35.6 35.6" preserveAspectRatio="none"><circle cx="17.8" cy="17.8" r="17.8" fill="#002244"/><text x="5.8" y="24.9" font-family="Liberation Sans" font-weight="700" font-size="19.5" fill="#fff" textLength="23.8" lengthAdjust="spacingAndGlyphs">RT</text></svg>
<svg class="a" style="left:3671.00px;top:765.68px;width:33.00px;height:10.00px;" viewBox="0 0 33 10" preserveAspectRatio="none"><circle cx="4.5" cy="5" r="3.8" fill="#6244bb"/><circle cx="16.5" cy="5" r="3.8" fill="#6244bb"/><circle cx="28.5" cy="5" r="3.8" fill="#6244bb"/></svg>
<div class="a" style="left:1065.00px;top:855.18px;width:2678.00px;height:2.00px;background:#d2d2d2;"></div>
<svg class="a" style="left:1081.20px;top:812.01px;width:32.00px;height:32.00px;" viewBox="0 0 32 32" preserveAspectRatio="none"><circle cx="16" cy="16" r="16" fill="#666"/><path d="M16 6.3 V25.7 M6.3 16 H25.7" stroke="#fff" stroke-width="2.4" stroke-linecap="round"/></svg>
<svg class="a" style="left:1140.50px;top:809.01px;width:32.00px;height:36.00px;" viewBox="0 0 32 36" preserveAspectRatio="none"><path d="M2.3 1.5 V34" stroke="#333" stroke-width="3.2" stroke-linecap="round"/><path d="M3 4.6 C 7 1.8, 10.5 1.6, 15.5 4 S 25.5 7.6, 30.4 3.6 V 24.6 C 25.5 28.6, 20.5 27.2, 15.5 25 S 7 22.2, 3 25.6" fill="none" stroke="#333" stroke-width="3" stroke-linejoin="round"/></svg>
<svg class="a" style="left:1188.00px;top:809.01px;width:28.00px;height:36.00px;" viewBox="0 0 28 36" preserveAspectRatio="none"><path d="M3.6 4.6 L13.8 0 L24 4.6 L22.6 9.4 Q13.8 8 5 9.4 Z" fill="#333"/><path d="M7.5 6.4 Q13.8 4.4 20.1 6.4" fill="none" stroke="#fff" stroke-width="1.3"/><path d="M6.6 10.6 Q13.8 9.8 21 10.6 Q21.6 12 21.2 14.8 A7.4 7.4 0 0 1 6.4 14.8 Q6 12 6.6 10.6 Z" fill="#333"/><path d="M0.4 35.5 V30.5 Q0.4 24.6 7 23.6 L13.8 27.4 L20.6 23.6 Q27.4 24.6 27.4 30.5 V35.5 Z" fill="#333"/><rect x="17.8" y="28.6" width="4.8" height="2" rx="1" fill="#fff"/></svg>
<div class="t" style="top:816.34px;font-size:26px;color:#333333;font-weight:700;left:1273.30px;">V5315</div>
<div class="t" style="top:816.34px;font-size:26px;color:#333333;font-weight:700;left:435.50px;width:2000px;text-align:center;">19Mar</div>
<div class="t" style="top:816.34px;font-size:26px;color:#333333;font-weight:700;left:521.20px;width:2000px;text-align:center;">4</div>
<div class="t" style="top:816.34px;font-size:26px;color:#333333;font-weight:700;left:611.20px;width:2000px;text-align:center;">06:01</div>
<div class="t" style="top:816.34px;font-size:26px;color:#333333;font-weight:700;left:715.30px;width:2000px;text-align:center;">CLE</div>
<div class="t" style="top:816.34px;font-size:26px;color:#333333;font-weight:700;left:821.30px;width:2000px;text-align:center;">07:01</div>
<div class="t" style="top:816.34px;font-size:26px;color:#333333;font-weight:700;left:927.50px;width:2000px;text-align:center;">2153</div>
<div class="t" style="top:816.34px;font-size:26px;color:#333333;font-weight:700;left:1035.60px;width:2000px;text-align:center;">CLE</div>
<div class="t" style="top:816.34px;font-size:26px;color:#333333;font-weight:700;left:1141.30px;width:2000px;text-align:center;">20:16</div>
<div class="t" style="top:816.34px;font-size:26px;color:#333333;font-weight:700;left:1243.40px;width:2000px;text-align:center;">20:31</div>
<div class="t" style="top:816.34px;font-size:26px;color:#333333;font-weight:700;left:1335.30px;width:2000px;text-align:center;">No</div>
<div class="t" style="top:816.34px;font-size:26px;color:#333333;font-weight:700;left:1427.50px;width:2000px;text-align:center;">24:46</div>
<div class="t" style="top:816.34px;font-size:26px;color:#333333;font-weight:700;left:1527.40px;width:2000px;text-align:center;">24:46</div>
<div class="t" style="top:816.34px;font-size:26px;color:#333333;font-weight:700;left:1627.30px;width:2000px;text-align:center;">86:30</div>
<div class="t" style="top:816.34px;font-size:26px;color:#333333;font-weight:700;left:1747.40px;width:2000px;text-align:center;">$16.22</div>
<div class="t" style="top:816.34px;font-size:26px;color:#333333;font-weight:700;left:1867.30px;width:2000px;text-align:center;">00:00</div>
<div class="t" style="top:816.34px;font-size:26px;color:#333333;font-weight:700;left:1981.50px;width:2000px;text-align:center;">$262.96</div>
<div class="t" style="top:818.73px;font-size:22px;color:#333333;font-weight:700;left:3053.80px;">RNO, MSY, AUA</div>
<svg class="a" style="left:3305.40px;top:808.72px;width:35.60px;height:35.60px;" viewBox="0 0 35.6 35.6" preserveAspectRatio="none"><circle cx="17.8" cy="17.8" r="17.8" fill="#002244"/><text x="5.8" y="24.9" font-family="Liberation Sans" font-weight="700" font-size="19.5" fill="#fff" textLength="23.8" lengthAdjust="spacingAndGlyphs">RT</text></svg>
<svg class="a" style="left:3671.00px;top:823.01px;width:33.00px;height:10.00px;" viewBox="0 0 33 10" preserveAspectRatio="none"><circle cx="4.5" cy="5" r="3.8" fill="#6244bb"/><circle cx="16.5" cy="5" r="3.8" fill="#6244bb"/><circle cx="28.5" cy="5" r="3.8" fill="#6244bb"/></svg>
<div class="a" style="left:1065.00px;top:912.51px;width:2678.00px;height:2.00px;background:#d2d2d2;"></div>
<svg class="a" style="left:1081.20px;top:869.35px;width:32.00px;height:32.00px;" viewBox="0 0 32 32" preserveAspectRatio="none"><circle cx="16" cy="16" r="16" fill="#666"/><path d="M16 6.3 V25.7 M6.3 16 H25.7" stroke="#fff" stroke-width="2.4" stroke-linecap="round"/></svg>
<svg class="a" style="left:1140.50px;top:866.35px;width:32.00px;height:36.00px;" viewBox="0 0 32 36" preserveAspectRatio="none"><path d="M2.3 1.5 V34" stroke="#333" stroke-width="3.2" stroke-linecap="round"/><path d="M3 4.6 C 7 1.8, 10.5 1.6, 15.5 4 S 25.5 7.6, 30.4 3.6 V 24.6 C 25.5 28.6, 20.5 27.2, 15.5 25 S 7 22.2, 3 25.6" fill="none" stroke="#333" stroke-width="3" stroke-linejoin="round"/></svg>
<svg class="a" style="left:1188.00px;top:866.35px;width:28.00px;height:36.00px;" viewBox="0 0 28 36" preserveAspectRatio="none"><path d="M3.6 4.6 L13.8 0 L24 4.6 L22.6 9.4 Q13.8 8 5 9.4 Z" fill="#333"/><path d="M7.5 6.4 Q13.8 4.4 20.1 6.4" fill="none" stroke="#fff" stroke-width="1.3"/><path d="M6.6 10.6 Q13.8 9.8 21 10.6 Q21.6 12 21.2 14.8 A7.4 7.4 0 0 1 6.4 14.8 Q6 12 6.6 10.6 Z" fill="#333"/><path d="M0.4 35.5 V30.5 Q0.4 24.6 7 23.6 L13.8 27.4 L20.6 23.6 Q27.4 24.6 27.4 30.5 V35.5 Z" fill="#333"/><rect x="17.8" y="28.6" width="4.8" height="2" rx="1" fill="#fff"/></svg>
<div class="t" style="top:873.67px;font-size:26px;color:#333333;font-weight:700;left:1273.30px;">V5067</div>
<div class="t" style="top:873.67px;font-size:26px;color:#333333;font-weight:700;left:435.50px;width:2000px;text-align:center;">19Mar</div>
<div class="t" style="top:873.67px;font-size:26px;color:#333333;font-weight:700;left:521.20px;width:2000px;text-align:center;">2</div>
<div class="t" style="top:873.67px;font-size:26px;color:#333333;font-weight:700;left:611.20px;width:2000px;text-align:center;">06:02</div>
<div class="t" style="top:873.67px;font-size:26px;color:#333333;font-weight:700;left:715.30px;width:2000px;text-align:center;">CLE</div>
<div class="t" style="top:873.67px;font-size:26px;color:#333333;font-weight:700;left:821.30px;width:2000px;text-align:center;">07:02</div>
<div class="t" style="top:873.67px;font-size:26px;color:#333333;font-weight:700;left:927.50px;width:2000px;text-align:center;">0490</div>
<div class="t" style="top:873.67px;font-size:26px;color:#333333;font-weight:700;left:1035.60px;width:2000px;text-align:center;">CLE</div>
<div class="t" style="top:873.67px;font-size:26px;color:#333333;font-weight:700;left:1141.30px;width:2000px;text-align:center;">23:43</div>
<div class="t" style="top:873.67px;font-size:26px;color:#333333;font-weight:700;left:1243.40px;width:2000px;text-align:center;">23:58</div>
<div class="t" style="top:873.67px;font-size:26px;color:#333333;font-weight:700;left:1335.30px;width:2000px;text-align:center;">No</div>
<div class="t" style="top:873.67px;font-size:26px;color:#333333;font-weight:700;left:1427.50px;width:2000px;text-align:center;">11:34</div>
<div class="t" style="top:873.67px;font-size:26px;color:#333333;font-weight:700;left:1527.40px;width:2000px;text-align:center;">11:59</div>
<div class="t" style="top:873.67px;font-size:26px;color:#333333;font-weight:700;left:1627.30px;width:2000px;text-align:center;">41:56</div>
<div class="t" style="top:873.67px;font-size:26px;color:#333333;font-weight:700;left:1747.40px;width:2000px;text-align:center;">$3.24</div>
<div class="t" style="top:873.67px;font-size:26px;color:#333333;font-weight:700;left:1867.30px;width:2000px;text-align:center;">00:25</div>
<div class="t" style="top:873.67px;font-size:26px;color:#333333;font-weight:700;left:1981.50px;width:2000px;text-align:center;">$127.48</div>
<div class="t" style="top:876.06px;font-size:22px;color:#333333;font-weight:700;left:3053.80px;">PUJ</div>
<svg class="a" style="left:3305.40px;top:866.05px;width:35.60px;height:35.60px;" viewBox="0 0 35.6 35.6" preserveAspectRatio="none"><circle cx="17.8" cy="17.8" r="17.8" fill="#002244"/><text x="5.8" y="24.9" font-family="Liberation Sans" font-weight="700" font-size="19.5" fill="#fff" textLength="23.8" lengthAdjust="spacingAndGlyphs">RT</text></svg>
<svg class="a" style="left:3671.00px;top:880.35px;width:33.00px;height:10.00px;" viewBox="0 0 33 10" preserveAspectRatio="none"><circle cx="4.5" cy="5" r="3.8" fill="#6244bb"/><circle cx="16.5" cy="5" r="3.8" fill="#6244bb"/><circle cx="28.5" cy="5" r="3.8" fill="#6244bb"/></svg>
<div class="a" style="left:1065.00px;top:969.84px;width:2678.00px;height:2.00px;background:#d2d2d2;"></div>
<svg class="a" style="left:1081.20px;top:926.67px;width:32.00px;height:32.00px;" viewBox="0 0 32 32" preserveAspectRatio="none"><circle cx="16" cy="16" r="16" fill="#666"/><path d="M16 6.3 V25.7 M6.3 16 H25.7" stroke="#fff" stroke-width="2.4" stroke-linecap="round"/></svg>
<svg class="a" style="left:1140.50px;top:923.67px;width:32.00px;height:36.00px;" viewBox="0 0 32 36" preserveAspectRatio="none"><path d="M2.3 1.5 V34" stroke="#333" stroke-width="3.2" stroke-linecap="round"/><path d="M3 4.6 C 7 1.8, 10.5 1.6, 15.5 4 S 25.5 7.6, 30.4 3.6 V 24.6 C 25.5 28.6, 20.5 27.2, 15.5 25 S 7 22.2, 3 25.6" fill="none" stroke="#333" stroke-width="3" stroke-linejoin="round"/></svg>
<svg class="a" style="left:1188.00px;top:923.67px;width:28.00px;height:36.00px;" viewBox="0 0 28 36" preserveAspectRatio="none"><path d="M3.6 4.6 L13.8 0 L24 4.6 L22.6 9.4 Q13.8 8 5 9.4 Z" fill="#333"/><path d="M7.5 6.4 Q13.8 4.4 20.1 6.4" fill="none" stroke="#fff" stroke-width="1.3"/><path d="M6.6 10.6 Q13.8 9.8 21 10.6 Q21.6 12 21.2 14.8 A7.4 7.4 0 0 1 6.4 14.8 Q6 12 6.6 10.6 Z" fill="#333"/><path d="M0.4 35.5 V30.5 Q0.4 24.6 7 23.6 L13.8 27.4 L20.6 23.6 Q27.4 24.6 27.4 30.5 V35.5 Z" fill="#333"/><rect x="17.8" y="28.6" width="4.8" height="2" rx="1" fill="#fff"/></svg>
<div class="t" style="top:931.00px;font-size:26px;color:#333333;font-weight:700;left:1273.30px;">V5075</div>
<div class="t" style="top:931.00px;font-size:26px;color:#333333;font-weight:700;left:435.50px;width:2000px;text-align:center;">19Mar</div>
<div class="t" style="top:931.00px;font-size:26px;color:#333333;font-weight:700;left:521.20px;width:2000px;text-align:center;">2</div>
<div class="t" style="top:931.00px;font-size:26px;color:#333333;font-weight:700;left:611.20px;width:2000px;text-align:center;">06:05</div>
<div class="t" style="top:931.00px;font-size:26px;color:#333333;font-weight:700;left:715.30px;width:2000px;text-align:center;">CLE</div>
<div class="t" style="top:931.00px;font-size:26px;color:#333333;font-weight:700;left:821.30px;width:2000px;text-align:center;">07:05</div>
<div class="t" style="top:931.00px;font-size:26px;color:#333333;font-weight:700;left:927.50px;width:2000px;text-align:center;">2636</div>
<div class="t" style="top:931.00px;font-size:26px;color:#333333;font-weight:700;left:1035.60px;width:2000px;text-align:center;">CLE</div>
<div class="t" style="top:931.00px;font-size:26px;color:#333333;font-weight:700;left:1141.30px;width:2000px;text-align:center;">14:30</div>
<div class="t" style="top:931.00px;font-size:26px;color:#333333;font-weight:700;left:1243.40px;width:2000px;text-align:center;">14:45</div>
<div class="t" style="top:931.00px;font-size:26px;color:#333333;font-weight:700;left:1335.30px;width:2000px;text-align:center;">No</div>
<div class="t" style="top:931.00px;font-size:26px;color:#333333;font-weight:700;left:1427.50px;width:2000px;text-align:center;">10:04</div>
<div class="t" style="top:931.00px;font-size:26px;color:#333333;font-weight:700;left:1527.40px;width:2000px;text-align:center;">10:30</div>
<div class="t" style="top:931.00px;font-size:26px;color:#333333;font-weight:700;left:1627.30px;width:2000px;text-align:center;">32:40</div>
<div class="t" style="top:931.00px;font-size:26px;color:#333333;font-weight:700;left:1747.40px;width:2000px;text-align:center;">$0.00</div>
<div class="t" style="top:931.00px;font-size:26px;color:#333333;font-weight:700;left:1867.30px;width:2000px;text-align:center;">00:26</div>
<div class="t" style="top:931.00px;font-size:26px;color:#333333;font-weight:700;left:1981.50px;width:2000px;text-align:center;">$99.31</div>
<div class="t" style="top:933.39px;font-size:22px;color:#333333;font-weight:700;left:3053.80px;">IAD</div>
<svg class="a" style="left:3305.40px;top:923.38px;width:35.60px;height:35.60px;" viewBox="0 0 35.6 35.6" preserveAspectRatio="none"><circle cx="17.8" cy="17.8" r="17.8" fill="#002244"/><text x="5.8" y="24.9" font-family="Liberation Sans" font-weight="700" font-size="19.5" fill="#fff" textLength="23.8" lengthAdjust="spacingAndGlyphs">RT</text></svg>
<svg class="a" style="left:3671.00px;top:937.67px;width:33.00px;height:10.00px;" viewBox="0 0 33 10" preserveAspectRatio="none"><circle cx="4.5" cy="5" r="3.8" fill="#6244bb"/><circle cx="16.5" cy="5" r="3.8" fill="#6244bb"/><circle cx="28.5" cy="5" r="3.8" fill="#6244bb"/></svg>
<div class="a" style="left:1065.00px;top:1027.17px;width:2678.00px;height:2.00px;background:#d2d2d2;"></div>
<svg class="a" style="left:1081.20px;top:984.00px;width:32.00px;height:32.00px;" viewBox="0 0 32 32" preserveAspectRatio="none"><circle cx="16" cy="16" r="16" fill="#666"/><path d="M16 6.3 V25.7 M6.3 16 H25.7" stroke="#fff" stroke-width="2.4" stroke-linecap="round"/></svg>
<svg class="a" style="left:1140.50px;top:981.00px;width:32.00px;height:36.00px;" viewBox="0 0 32 36" preserveAspectRatio="none"><path d="M2.3 1.5 V34" stroke="#333" stroke-width="3.2" stroke-linecap="round"/><path d="M3 4.6 C 7 1.8, 10.5 1.6, 15.5 4 S 25.5 7.6, 30.4 3.6 V 24.6 C 25.5 28.6, 20.5 27.2, 15.5 25 S 7 22.2, 3 25.6" fill="none" stroke="#333" stroke-width="3" stroke-linejoin="round"/></svg>
<svg class="a" style="left:1188.00px;top:981.00px;width:28.00px;height:36.00px;" viewBox="0 0 28 36" preserveAspectRatio="none"><path d="M3.6 4.6 L13.8 0 L24 4.6 L22.6 9.4 Q13.8 8 5 9.4 Z" fill="#333"/><path d="M7.5 6.4 Q13.8 4.4 20.1 6.4" fill="none" stroke="#fff" stroke-width="1.3"/><path d="M6.6 10.6 Q13.8 9.8 21 10.6 Q21.6 12 21.2 14.8 A7.4 7.4 0 0 1 6.4 14.8 Q6 12 6.6 10.6 Z" fill="#333"/><path d="M0.4 35.5 V30.5 Q0.4 24.6 7 23.6 L13.8 27.4 L20.6 23.6 Q27.4 24.6 27.4 30.5 V35.5 Z" fill="#333"/><rect x="17.8" y="28.6" width="4.8" height="2" rx="1" fill="#fff"/></svg>
<div class="t" style="top:988.33px;font-size:26px;color:#333333;font-weight:700;left:1273.30px;">V5086</div>
<div class="t" style="top:988.33px;font-size:26px;color:#333333;font-weight:700;left:435.50px;width:2000px;text-align:center;">19Mar</div>
<div class="t" style="top:988.33px;font-size:26px;color:#333333;font-weight:700;left:521.20px;width:2000px;text-align:center;">2</div>
<div class="t" style="top:988.33px;font-size:26px;color:#333333;font-weight:700;left:611.20px;width:2000px;text-align:center;">06:09</div>
<div class="t" style="top:988.33px;font-size:26px;color:#333333;font-weight:700;left:715.30px;width:2000px;text-align:center;">CLE</div>
<div class="t" style="top:988.33px;font-size:26px;color:#333333;font-weight:700;left:821.30px;width:2000px;text-align:center;">07:09</div>
<div class="t" style="top:988.33px;font-size:26px;color:#333333;font-weight:700;left:927.50px;width:2000px;text-align:center;">1224</div>
<div class="t" style="top:988.33px;font-size:26px;color:#333333;font-weight:700;left:1035.60px;width:2000px;text-align:center;">CLE</div>
<div class="t" style="top:988.33px;font-size:26px;color:#333333;font-weight:700;left:1141.30px;width:2000px;text-align:center;">22:47</div>
<div class="t" style="top:988.33px;font-size:26px;color:#333333;font-weight:700;left:1243.40px;width:2000px;text-align:center;">23:02</div>
<div class="t" style="top:988.33px;font-size:26px;color:#333333;font-weight:700;left:1335.30px;width:2000px;text-align:center;">No</div>
<div class="t" style="top:988.33px;font-size:26px;color:#333333;font-weight:700;left:1427.50px;width:2000px;text-align:center;">11:43</div>
<div class="t" style="top:988.33px;font-size:26px;color:#333333;font-weight:700;left:1527.40px;width:2000px;text-align:center;">11:43</div>
<div class="t" style="top:988.33px;font-size:26px;color:#333333;font-weight:700;left:1627.30px;width:2000px;text-align:center;">40:53</div>
<div class="t" style="top:988.33px;font-size:26px;color:#333333;font-weight:700;left:1747.40px;width:2000px;text-align:center;">$0.00</div>
<div class="t" style="top:988.33px;font-size:26px;color:#333333;font-weight:700;left:1867.30px;width:2000px;text-align:center;">00:00</div>
<div class="t" style="top:988.33px;font-size:26px;color:#333333;font-weight:700;left:1981.50px;width:2000px;text-align:center;">$124.29</div>
<div class="t" style="top:990.72px;font-size:22px;color:#333333;font-weight:700;left:3053.80px;">LAX</div>
<svg class="a" style="left:3305.40px;top:980.71px;width:35.60px;height:35.60px;" viewBox="0 0 35.6 35.6" preserveAspectRatio="none"><circle cx="17.8" cy="17.8" r="17.8" fill="#002244"/><text x="5.8" y="24.9" font-family="Liberation Sans" font-weight="700" font-size="19.5" fill="#fff" textLength="23.8" lengthAdjust="spacingAndGlyphs">RT</text></svg>
<svg class="a" style="left:3671.00px;top:995.00px;width:33.00px;height:10.00px;" viewBox="0 0 33 10" preserveAspectRatio="none"><circle cx="4.5" cy="5" r="3.8" fill="#6244bb"/><circle cx="16.5" cy="5" r="3.8" fill="#6244bb"/><circle cx="28.5" cy="5" r="3.8" fill="#6244bb"/></svg>
<div class="a" style="left:1065.00px;top:1084.50px;width:2678.00px;height:2.00px;background:#d2d2d2;"></div>
<svg class="a" style="left:1081.20px;top:1041.34px;width:32.00px;height:32.00px;" viewBox="0 0 32 32" preserveAspectRatio="none"><circle cx="16" cy="16" r="16" fill="#666"/><path d="M16 6.3 V25.7 M6.3 16 H25.7" stroke="#fff" stroke-width="2.4" stroke-linecap="round"/></svg>
<svg class="a" style="left:1140.50px;top:1038.34px;width:32.00px;height:36.00px;" viewBox="0 0 32 36" preserveAspectRatio="none"><path d="M2.3 1.5 V34" stroke="#333" stroke-width="3.2" stroke-linecap="round"/><path d="M3 4.6 C 7 1.8, 10.5 1.6, 15.5 4 S 25.5 7.6, 30.4 3.6 V 24.6 C 25.5 28.6, 20.5 27.2, 15.5 25 S 7 22.2, 3 25.6" fill="none" stroke="#333" stroke-width="3" stroke-linejoin="round"/></svg>
<svg class="a" style="left:1188.00px;top:1038.34px;width:28.00px;height:36.00px;" viewBox="0 0 28 36" preserveAspectRatio="none"><path d="M3.6 4.6 L13.8 0 L24 4.6 L22.6 9.4 Q13.8 8 5 9.4 Z" fill="#333"/><path d="M7.5 6.4 Q13.8 4.4 20.1 6.4" fill="none" stroke="#fff" stroke-width="1.3"/><path d="M6.6 10.6 Q13.8 9.8 21 10.6 Q21.6 12 21.2 14.8 A7.4 7.4 0 0 1 6.4 14.8 Q6 12 6.6 10.6 Z" fill="#333"/><path d="M0.4 35.5 V30.5 Q0.4 24.6 7 23.6 L13.8 27.4 L20.6 23.6 Q27.4 24.6 27.4 30.5 V35.5 Z" fill="#333"/><rect x="17.8" y="28.6" width="4.8" height="2" rx="1" fill="#fff"/></svg>
<div class="t" style="top:1045.66px;font-size:26px;color:#333333;font-weight:700;left:1273.30px;">V5215</div>
<div class="t" style="top:1045.66px;font-size:26px;color:#333333;font-weight:700;left:435.50px;width:2000px;text-align:center;">19Mar</div>
<div class="t" style="top:1045.66px;font-size:26px;color:#333333;font-weight:700;left:521.20px;width:2000px;text-align:center;">3</div>
<div class="t" style="top:1045.66px;font-size:26px;color:#333333;font-weight:700;left:611.20px;width:2000px;text-align:center;">06:31</div>
<div class="t" style="top:1045.66px;font-size:26px;color:#333333;font-weight:700;left:715.30px;width:2000px;text-align:center;">CLE</div>
<div class="t" style="top:1045.66px;font-size:26px;color:#333333;font-weight:700;left:821.30px;width:2000px;text-align:center;">07:31</div>
<div class="t" style="top:1045.66px;font-size:26px;color:#333333;font-weight:700;left:927.50px;width:2000px;text-align:center;">1038</div>
<div class="t" style="top:1045.66px;font-size:26px;color:#333333;font-weight:700;left:1035.60px;width:2000px;text-align:center;">CLE</div>
<div class="t" style="top:1045.66px;font-size:26px;color:#333333;font-weight:700;left:1141.30px;width:2000px;text-align:center;">16:39</div>
<div class="t" style="top:1045.66px;font-size:26px;color:#333333;font-weight:700;left:1243.40px;width:2000px;text-align:center;">16:54</div>
<div class="t" style="top:1045.66px;font-size:26px;color:#333333;font-weight:700;left:1335.30px;width:2000px;text-align:center;">No</div>
<div class="t" style="top:1045.66px;font-size:26px;color:#333333;font-weight:700;left:1427.50px;width:2000px;text-align:center;">16:01</div>
<div class="t" style="top:1045.66px;font-size:26px;color:#333333;font-weight:700;left:1527.40px;width:2000px;text-align:center;">16:41</div>
<div class="t" style="top:1045.66px;font-size:26px;color:#333333;font-weight:700;left:1627.30px;width:2000px;text-align:center;">58:23</div>
<div class="t" style="top:1045.66px;font-size:26px;color:#333333;font-weight:700;left:1747.40px;width:2000px;text-align:center;">$0.00</div>
<div class="t" style="top:1045.66px;font-size:26px;color:#333333;font-weight:700;left:1867.30px;width:2000px;text-align:center;">00:40</div>
<div class="t" style="top:1045.66px;font-size:26px;color:#333333;font-weight:700;left:1981.50px;width:2000px;text-align:center;">$177.49</div>
<div class="t" style="top:1048.05px;font-size:22px;color:#333333;font-weight:700;left:3053.80px;">CUN, SLC</div>
<svg class="a" style="left:3305.40px;top:1038.04px;width:35.60px;height:35.60px;" viewBox="0 0 35.6 35.6" preserveAspectRatio="none"><circle cx="17.8" cy="17.8" r="17.8" fill="#002244"/><text x="5.8" y="24.9" font-family="Liberation Sans" font-weight="700" font-size="19.5" fill="#fff" textLength="23.8" lengthAdjust="spacingAndGlyphs">RT</text></svg>
<svg class="a" style="left:3671.00px;top:1052.34px;width:33.00px;height:10.00px;" viewBox="0 0 33 10" preserveAspectRatio="none"><circle cx="4.5" cy="5" r="3.8" fill="#6244bb"/><circle cx="16.5" cy="5" r="3.8" fill="#6244bb"/><circle cx="28.5" cy="5" r="3.8" fill="#6244bb"/></svg>
<div class="a" style="left:1065.00px;top:1141.83px;width:2678.00px;height:2.00px;background:#d2d2d2;"></div>
<svg class="a" style="left:1081.20px;top:1098.66px;width:32.00px;height:32.00px;" viewBox="0 0 32 32" preserveAspectRatio="none"><circle cx="16" cy="16" r="16" fill="#666"/><path d="M16 6.3 V25.7 M6.3 16 H25.7" stroke="#fff" stroke-width="2.4" stroke-linecap="round"/></svg>
<svg class="a" style="left:1140.50px;top:1095.66px;width:32.00px;height:36.00px;" viewBox="0 0 32 36" preserveAspectRatio="none"><path d="M2.3 1.5 V34" stroke="#333" stroke-width="3.2" stroke-linecap="round"/><path d="M3 4.6 C 7 1.8, 10.5 1.6, 15.5 4 S 25.5 7.6, 30.4 3.6 V 24.6 C 25.5 28.6, 20.5 27.2, 15.5 25 S 7 22.2, 3 25.6" fill="none" stroke="#333" stroke-width="3" stroke-linejoin="round"/></svg>
<svg class="a" style="left:1188.00px;top:1095.66px;width:28.00px;height:36.00px;" viewBox="0 0 28 36" preserveAspectRatio="none"><path d="M3.6 4.6 L13.8 0 L24 4.6 L22.6 9.4 Q13.8 8 5 9.4 Z" fill="#333"/><path d="M7.5 6.4 Q13.8 4.4 20.1 6.4" fill="none" stroke="#fff" stroke-width="1.3"/><path d="M6.6 10.6 Q13.8 9.8 21 10.6 Q21.6 12 21.2 14.8 A7.4 7.4 0 0 1 6.4 14.8 Q6 12 6.6 10.6 Z" fill="#333"/><path d="M0.4 35.5 V30.5 Q0.4 24.6 7 23.6 L13.8 27.4 L20.6 23.6 Q27.4 24.6 27.4 30.5 V35.5 Z" fill="#333"/><rect x="17.8" y="28.6" width="4.8" height="2" rx="1" fill="#fff"/></svg>
<div class="t" style="top:1102.99px;font-size:26px;color:#333333;font-weight:700;left:1273.30px;">V5232</div>
<div class="t" style="top:1102.99px;font-size:26px;color:#333333;font-weight:700;left:435.50px;width:2000px;text-align:center;">19Mar</div>
<div class="t" style="top:1102.99px;font-size:26px;color:#333333;font-weight:700;left:521.20px;width:2000px;text-align:center;">3</div>
<div class="t" style="top:1102.99px;font-size:26px;color:#333333;font-weight:700;left:611.20px;width:2000px;text-align:center;">07:40</div>
<div class="t" style="top:1102.99px;font-size:26px;color:#333333;font-weight:700;left:715.30px;width:2000px;text-align:center;">CLE</div>
<div class="t" style="top:1102.99px;font-size:26px;color:#333333;font-weight:700;left:821.30px;width:2000px;text-align:center;">08:40</div>
<div class="t" style="top:1102.99px;font-size:26px;color:#333333;font-weight:700;left:927.50px;width:2000px;text-align:center;">2465</div>
<div class="t" style="top:1102.99px;font-size:26px;color:#333333;font-weight:700;left:1035.60px;width:2000px;text-align:center;">CLE</div>
<div class="t" style="top:1102.99px;font-size:26px;color:#333333;font-weight:700;left:1141.30px;width:2000px;text-align:center;">21:59</div>
<div class="t" style="top:1102.99px;font-size:26px;color:#333333;font-weight:700;left:1243.40px;width:2000px;text-align:center;">22:14</div>
<div class="t" style="top:1102.99px;font-size:26px;color:#333333;font-weight:700;left:1335.30px;width:2000px;text-align:center;">No</div>
<div class="t" style="top:1102.99px;font-size:26px;color:#333333;font-weight:700;left:1427.50px;width:2000px;text-align:center;">17:57</div>
<div class="t" style="top:1102.99px;font-size:26px;color:#333333;font-weight:700;left:1527.40px;width:2000px;text-align:center;">17:57</div>
<div class="t" style="top:1102.99px;font-size:26px;color:#333333;font-weight:700;left:1627.30px;width:2000px;text-align:center;">62:34</div>
<div class="t" style="top:1102.99px;font-size:26px;color:#333333;font-weight:700;left:1747.40px;width:2000px;text-align:center;">$217.32</div>
<div class="t" style="top:1102.99px;font-size:26px;color:#333333;font-weight:700;left:1867.30px;width:2000px;text-align:center;">00:00</div>
<div class="t" style="top:1102.99px;font-size:26px;color:#333333;font-weight:700;left:1981.50px;width:2000px;text-align:center;">$190.20</div>
<div class="t" style="top:1105.38px;font-size:22px;color:#333333;font-weight:700;left:3053.80px;">PIT, PTY</div>
<svg class="a" style="left:3305.40px;top:1095.37px;width:35.60px;height:35.60px;" viewBox="0 0 35.6 35.6" preserveAspectRatio="none"><circle cx="17.8" cy="17.8" r="17.8" fill="#002244"/><text x="5.8" y="24.9" font-family="Liberation Sans" font-weight="700" font-size="19.5" fill="#fff" textLength="23.8" lengthAdjust="spacingAndGlyphs">RT</text></svg>
<svg class="a" style="left:3671.00px;top:1109.66px;width:33.00px;height:10.00px;" viewBox="0 0 33 10" preserveAspectRatio="none"><circle cx="4.5" cy="5" r="3.8" fill="#6244bb"/><circle cx="16.5" cy="5" r="3.8" fill="#6244bb"/><circle cx="28.5" cy="5" r="3.8" fill="#6244bb"/></svg>
<div class="a" style="left:1065.00px;top:1199.16px;width:2678.00px;height:2.00px;background:#d2d2d2;"></div>
<svg class="a" style="left:1081.20px;top:1155.99px;width:32.00px;height:32.00px;" viewBox="0 0 32 32" preserveAspectRatio="none"><circle cx="16" cy="16" r="16" fill="#666"/><path d="M16 6.3 V25.7 M6.3 16 H25.7" stroke="#fff" stroke-width="2.4" stroke-linecap="round"/></svg>
<svg class="a" style="left:1140.50px;top:1152.99px;width:32.00px;height:36.00px;" viewBox="0 0 32 36" preserveAspectRatio="none"><path d="M2.3 1.5 V34" stroke="#333" stroke-width="3.2" stroke-linecap="round"/><path d="M3 4.6 C 7 1.8, 10.5 1.6, 15.5 4 S 25.5 7.6, 30.4 3.6 V 24.6 C 25.5 28.6, 20.5 27.2, 15.5 25 S 7 22.2, 3 25.6" fill="none" stroke="#333" stroke-width="3" stroke-linejoin="round"/></svg>
<svg class="a" style="left:1188.00px;top:1152.99px;width:28.00px;height:36.00px;" viewBox="0 0 28 36" preserveAspectRatio="none"><path d="M3.6 4.6 L13.8 0 L24 4.6 L22.6 9.4 Q13.8 8 5 9.4 Z" fill="#333"/><path d="M7.5 6.4 Q13.8 4.4 20.1 6.4" fill="none" stroke="#fff" stroke-width="1.3"/><path d="M6.6 10.6 Q13.8 9.8 21 10.6 Q21.6 12 21.2 14.8 A7.4 7.4 0 0 1 6.4 14.8 Q6 12 6.6 10.6 Z" fill="#333"/><path d="M0.4 35.5 V30.5 Q0.4 24.6 7 23.6 L13.8 27.4 L20.6 23.6 Q27.4 24.6 27.4 30.5 V35.5 Z" fill="#333"/><rect x="17.8" y="28.6" width="4.8" height="2" rx="1" fill="#fff"/></svg>
<div class="t" style="top:1160.32px;font-size:26px;color:#333333;font-weight:700;left:1273.30px;">V5350</div>
<div class="t" style="top:1160.32px;font-size:26px;color:#333333;font-weight:700;left:435.50px;width:2000px;text-align:center;">19Mar</div>
<div class="t" style="top:1160.32px;font-size:26px;color:#333333;font-weight:700;left:521.20px;width:2000px;text-align:center;">4</div>
<div class="t" style="top:1160.32px;font-size:26px;color:#333333;font-weight:700;left:611.20px;width:2000px;text-align:center;">08:57</div>
<div class="t" style="top:1160.32px;font-size:26px;color:#333333;font-weight:700;left:715.30px;width:2000px;text-align:center;">CLE</div>
<div class="t" style="top:1160.32px;font-size:26px;color:#333333;font-weight:700;left:821.30px;width:2000px;text-align:center;">09:57</div>
<div class="t" style="top:1160.32px;font-size:26px;color:#333333;font-weight:700;left:927.50px;width:2000px;text-align:center;">0216</div>
<div class="t" style="top:1160.32px;font-size:26px;color:#333333;font-weight:700;left:1035.60px;width:2000px;text-align:center;">CLE</div>
<div class="t" style="top:1160.32px;font-size:26px;color:#333333;font-weight:700;left:1141.30px;width:2000px;text-align:center;">13:16</div>
<div class="t" style="top:1160.32px;font-size:26px;color:#333333;font-weight:700;left:1243.40px;width:2000px;text-align:center;">13:31</div>
<div class="t" style="top:1160.32px;font-size:26px;color:#333333;font-weight:700;left:1335.30px;width:2000px;text-align:center;">No</div>
<div class="t" style="top:1160.32px;font-size:26px;color:#333333;font-weight:700;left:1427.50px;width:2000px;text-align:center;">20:03</div>
<div class="t" style="top:1160.32px;font-size:26px;color:#333333;font-weight:700;left:1527.40px;width:2000px;text-align:center;">21:53</div>
<div class="t" style="top:1160.32px;font-size:26px;color:#333333;font-weight:700;left:1627.30px;width:2000px;text-align:center;">76:34</div>
<div class="t" style="top:1160.32px;font-size:26px;color:#333333;font-weight:700;left:1747.40px;width:2000px;text-align:center;">$71.36</div>
<div class="t" style="top:1160.32px;font-size:26px;color:#333333;font-weight:700;left:1867.30px;width:2000px;text-align:center;">01:50</div>
<div class="t" style="top:1160.32px;font-size:26px;color:#333333;font-weight:700;left:1981.50px;width:2000px;text-align:center;">$232.76</div>
<div class="t" style="top:1162.71px;font-size:22px;color:#333333;font-weight:700;left:3053.80px;">MSY, PBI, RSW</div>
<svg class="a" style="left:3305.40px;top:1152.69px;width:35.60px;height:35.60px;" viewBox="0 0 35.6 35.6" preserveAspectRatio="none"><circle cx="17.8" cy="17.8" r="17.8" fill="#002244"/><text x="5.8" y="24.9" font-family="Liberation Sans" font-weight="700" font-size="19.5" fill="#fff" textLength="23.8" lengthAdjust="spacingAndGlyphs">RT</text></svg>
<svg class="a" style="left:3349.70px;top:1152.69px;width:35.60px;height:35.60px;" viewBox="0 0 35.6 35.6" preserveAspectRatio="none"><circle cx="17.8" cy="17.8" r="17.8" fill="#002244"/><text x="4.3" y="24.9" font-family="Liberation Sans" font-weight="700" font-size="19.5" fill="#fff" textLength="27.5" lengthAdjust="spacingAndGlyphs">DH</text></svg>
<div class="t" style="top:1158.99px;font-size:26px;color:#6244bb;letter-spacing:-0.328px;left:3393.50px;text-decoration:underline;text-decoration-thickness:1.5px;text-underline-offset:3px;">+1</div>
<svg class="a" style="left:3671.00px;top:1166.99px;width:33.00px;height:10.00px;" viewBox="0 0 33 10" preserveAspectRatio="none"><circle cx="4.5" cy="5" r="3.8" fill="#6244bb"/><circle cx="16.5" cy="5" r="3.8" fill="#6244bb"/><circle cx="28.5" cy="5" r="3.8" fill="#6244bb"/></svg>
<div class="a" style="left:1065.00px;top:1256.49px;width:2678.00px;height:2.00px;background:#d2d2d2;"></div>
<svg class="a" style="left:1081.20px;top:1213.33px;width:32.00px;height:32.00px;" viewBox="0 0 32 32" preserveAspectRatio="none"><circle cx="16" cy="16" r="16" fill="#666"/><path d="M16 6.3 V25.7 M6.3 16 H25.7" stroke="#fff" stroke-width="2.4" stroke-linecap="round"/></svg>
<svg class="a" style="left:1140.50px;top:1210.33px;width:32.00px;height:36.00px;" viewBox="0 0 32 36" preserveAspectRatio="none"><path d="M2.3 1.5 V34" stroke="#333" stroke-width="3.2" stroke-linecap="round"/><path d="M3 4.6 C 7 1.8, 10.5 1.6, 15.5 4 S 25.5 7.6, 30.4 3.6 V 24.6 C 25.5 28.6, 20.5 27.2, 15.5 25 S 7 22.2, 3 25.6" fill="none" stroke="#333" stroke-width="3" stroke-linejoin="round"/></svg>
<svg class="a" style="left:1188.00px;top:1210.33px;width:28.00px;height:36.00px;" viewBox="0 0 28 36" preserveAspectRatio="none"><path d="M3.6 4.6 L13.8 0 L24 4.6 L22.6 9.4 Q13.8 8 5 9.4 Z" fill="#333"/><path d="M7.5 6.4 Q13.8 4.4 20.1 6.4" fill="none" stroke="#fff" stroke-width="1.3"/><path d="M6.6 10.6 Q13.8 9.8 21 10.6 Q21.6 12 21.2 14.8 A7.4 7.4 0 0 1 6.4 14.8 Q6 12 6.6 10.6 Z" fill="#333"/><path d="M0.4 35.5 V30.5 Q0.4 24.6 7 23.6 L13.8 27.4 L20.6 23.6 Q27.4 24.6 27.4 30.5 V35.5 Z" fill="#333"/><rect x="17.8" y="28.6" width="4.8" height="2" rx="1" fill="#fff"/></svg>
<div class="t" style="top:1217.65px;font-size:26px;color:#333333;font-weight:700;left:1273.30px;">V5019</div>
<div class="t" style="top:1217.65px;font-size:26px;color:#333333;font-weight:700;left:435.50px;width:2000px;text-align:center;">19Mar</div>
<div class="t" style="top:1217.65px;font-size:26px;color:#333333;font-weight:700;left:521.20px;width:2000px;text-align:center;">1</div>
<div class="t" style="top:1217.65px;font-size:26px;color:#333333;font-weight:700;left:611.20px;width:2000px;text-align:center;">13:23</div>
<div class="t" style="top:1217.65px;font-size:26px;color:#333333;font-weight:700;left:715.30px;width:2000px;text-align:center;">CLE</div>
<div class="t" style="top:1217.65px;font-size:26px;color:#333333;font-weight:700;left:821.30px;width:2000px;text-align:center;">14:23</div>
<div class="t" style="top:1217.65px;font-size:26px;color:#333333;font-weight:700;left:927.50px;width:2000px;text-align:center;">2420</div>
<div class="t" style="top:1217.65px;font-size:26px;color:#333333;font-weight:700;left:1035.60px;width:2000px;text-align:center;">CLE</div>
<div class="t" style="top:1217.65px;font-size:26px;color:#333333;font-weight:700;left:1141.30px;width:2000px;text-align:center;">21:10</div>
<div class="t" style="top:1217.65px;font-size:26px;color:#333333;font-weight:700;left:1243.40px;width:2000px;text-align:center;">21:25</div>
<div class="t" style="top:1217.65px;font-size:26px;color:#333333;font-weight:700;left:1335.30px;width:2000px;text-align:center;">No</div>
<div class="t" style="top:1217.65px;font-size:26px;color:#333333;font-weight:700;left:1427.50px;width:2000px;text-align:center;">05:41</div>
<div class="t" style="top:1217.65px;font-size:26px;color:#333333;font-weight:700;left:1527.40px;width:2000px;text-align:center;">05:41</div>
<div class="t" style="top:1217.65px;font-size:26px;color:#333333;font-weight:700;left:1627.30px;width:2000px;text-align:center;">08:02</div>
<div class="t" style="top:1217.65px;font-size:26px;color:#333333;font-weight:700;left:1747.40px;width:2000px;text-align:center;">$0.00</div>
<div class="t" style="top:1217.65px;font-size:26px;color:#333333;font-weight:700;left:1867.30px;width:2000px;text-align:center;">00:00</div>
<div class="t" style="top:1217.65px;font-size:26px;color:#333333;font-weight:700;left:1981.50px;width:2000px;text-align:center;">$24.42</div>
<svg class="a" style="left:3305.40px;top:1210.03px;width:35.60px;height:35.60px;" viewBox="0 0 35.6 35.6" preserveAspectRatio="none"><circle cx="17.8" cy="17.8" r="17.8" fill="#002244"/><text x="5.8" y="24.9" font-family="Liberation Sans" font-weight="700" font-size="19.5" fill="#fff" textLength="23.8" lengthAdjust="spacingAndGlyphs">RT</text></svg>
<svg class="a" style="left:3671.00px;top:1224.33px;width:33.00px;height:10.00px;" viewBox="0 0 33 10" preserveAspectRatio="none"><circle cx="4.5" cy="5" r="3.8" fill="#6244bb"/><circle cx="16.5" cy="5" r="3.8" fill="#6244bb"/><circle cx="28.5" cy="5" r="3.8" fill="#6244bb"/></svg>
<div class="a" style="left:1065.00px;top:1313.82px;width:2678.00px;height:2.00px;background:#d2d2d2;"></div>
<svg class="a" style="left:1081.20px;top:1270.65px;width:32.00px;height:32.00px;" viewBox="0 0 32 32" preserveAspectRatio="none"><circle cx="16" cy="16" r="16" fill="#666"/><path d="M16 6.3 V25.7 M6.3 16 H25.7" stroke="#fff" stroke-width="2.4" stroke-linecap="round"/></svg>
<svg class="a" style="left:1140.50px;top:1267.65px;width:32.00px;height:36.00px;" viewBox="0 0 32 36" preserveAspectRatio="none"><path d="M2.3 1.5 V34" stroke="#333" stroke-width="3.2" stroke-linecap="round"/><path d="M3 4.6 C 7 1.8, 10.5 1.6, 15.5 4 S 25.5 7.6, 30.4 3.6 V 24.6 C 25.5 28.6, 20.5 27.2, 15.5 25 S 7 22.2, 3 25.6" fill="none" stroke="#333" stroke-width="3" stroke-linejoin="round"/></svg>
<svg class="a" style="left:1188.00px;top:1267.65px;width:28.00px;height:36.00px;" viewBox="0 0 28 36" preserveAspectRatio="none"><path d="M3.6 4.6 L13.8 0 L24 4.6 L22.6 9.4 Q13.8 8 5 9.4 Z" fill="#333"/><path d="M7.5 6.4 Q13.8 4.4 20.1 6.4" fill="none" stroke="#fff" stroke-width="1.3"/><path d="M6.6 10.6 Q13.8 9.8 21 10.6 Q21.6 12 21.2 14.8 A7.4 7.4 0 0 1 6.4 14.8 Q6 12 6.6 10.6 Z" fill="#333"/><path d="M0.4 35.5 V30.5 Q0.4 24.6 7 23.6 L13.8 27.4 L20.6 23.6 Q27.4 24.6 27.4 30.5 V35.5 Z" fill="#333"/><rect x="17.8" y="28.6" width="4.8" height="2" rx="1" fill="#fff"/></svg>
<div class="t" style="top:1274.98px;font-size:26px;color:#333333;font-weight:700;left:1273.30px;">V5131</div>
<div class="t" style="top:1274.98px;font-size:26px;color:#333333;font-weight:700;left:435.50px;width:2000px;text-align:center;">19Mar</div>
<div class="t" style="top:1274.98px;font-size:26px;color:#333333;font-weight:700;left:521.20px;width:2000px;text-align:center;">2</div>
<div class="t" style="top:1274.98px;font-size:26px;color:#333333;font-weight:700;left:611.20px;width:2000px;text-align:center;">15:46</div>
<div class="t" style="top:1274.98px;font-size:26px;color:#333333;font-weight:700;left:715.30px;width:2000px;text-align:center;">CLE</div>
<div class="t" style="top:1274.98px;font-size:26px;color:#333333;font-weight:700;left:821.30px;width:2000px;text-align:center;">16:46</div>
<div class="t" style="top:1274.98px;font-size:26px;color:#333333;font-weight:700;left:927.50px;width:2000px;text-align:center;">0486</div>
<div class="t" style="top:1274.98px;font-size:26px;color:#333333;font-weight:700;left:1035.60px;width:2000px;text-align:center;">CLE</div>
<div class="t" style="top:1274.98px;font-size:26px;color:#333333;font-weight:700;left:1141.30px;width:2000px;text-align:center;">22:42</div>
<div class="t" style="top:1274.98px;font-size:26px;color:#333333;font-weight:700;left:1243.40px;width:2000px;text-align:center;">22:57</div>
<div class="t" style="top:1274.98px;font-size:26px;color:#333333;font-weight:700;left:1335.30px;width:2000px;text-align:center;">No</div>
<div class="t" style="top:1274.98px;font-size:26px;color:#333333;font-weight:700;left:1427.50px;width:2000px;text-align:center;">10:36</div>
<div class="t" style="top:1274.98px;font-size:26px;color:#333333;font-weight:700;left:1527.40px;width:2000px;text-align:center;">10:36</div>
<div class="t" style="top:1274.98px;font-size:26px;color:#333333;font-weight:700;left:1627.30px;width:2000px;text-align:center;">31:11</div>
<div class="t" style="top:1274.98px;font-size:26px;color:#333333;font-weight:700;left:1747.40px;width:2000px;text-align:center;">$0.00</div>
<div class="t" style="top:1274.98px;font-size:26px;color:#333333;font-weight:700;left:1867.30px;width:2000px;text-align:center;">00:00</div>
<div class="t" style="top:1274.98px;font-size:26px;color:#333333;font-weight:700;left:1981.50px;width:2000px;text-align:center;">$94.80</div>
<div class="t" style="top:1277.37px;font-size:22px;color:#333333;font-weight:700;left:3053.80px;">BOI</div>
<svg class="a" style="left:3305.40px;top:1267.36px;width:35.60px;height:35.60px;" viewBox="0 0 35.6 35.6" preserveAspectRatio="none"><circle cx="17.8" cy="17.8" r="17.8" fill="#002244"/><text x="5.8" y="24.9" font-family="Liberation Sans" font-weight="700" font-size="19.5" fill="#fff" textLength="23.8" lengthAdjust="spacingAndGlyphs">RT</text></svg>
<svg class="a" style="left:3671.00px;top:1281.65px;width:33.00px;height:10.00px;" viewBox="0 0 33 10" preserveAspectRatio="none"><circle cx="4.5" cy="5" r="3.8" fill="#6244bb"/><circle cx="16.5" cy="5" r="3.8" fill="#6244bb"/><circle cx="28.5" cy="5" r="3.8" fill="#6244bb"/></svg>
<div class="a" style="left:1065.00px;top:1371.15px;width:2678.00px;height:2.00px;background:#d2d2d2;"></div>
<svg class="a" style="left:1081.20px;top:1327.99px;width:32.00px;height:32.00px;" viewBox="0 0 32 32" preserveAspectRatio="none"><circle cx="16" cy="16" r="16" fill="#666"/><path d="M16 6.3 V25.7 M6.3 16 H25.7" stroke="#fff" stroke-width="2.4" stroke-linecap="round"/></svg>
<svg class="a" style="left:1140.50px;top:1324.99px;width:32.00px;height:36.00px;" viewBox="0 0 32 36" preserveAspectRatio="none"><path d="M2.3 1.5 V34" stroke="#333" stroke-width="3.2" stroke-linecap="round"/><path d="M3 4.6 C 7 1.8, 10.5 1.6, 15.5 4 S 25.5 7.6, 30.4 3.6 V 24.6 C 25.5 28.6, 20.5 27.2, 15.5 25 S 7 22.2, 3 25.6" fill="none" stroke="#333" stroke-width="3" stroke-linejoin="round"/></svg>
<svg class="a" style="left:1188.00px;top:1324.99px;width:28.00px;height:36.00px;" viewBox="0 0 28 36" preserveAspectRatio="none"><path d="M3.6 4.6 L13.8 0 L24 4.6 L22.6 9.4 Q13.8 8 5 9.4 Z" fill="#333"/><path d="M7.5 6.4 Q13.8 4.4 20.1 6.4" fill="none" stroke="#fff" stroke-width="1.3"/><path d="M6.6 10.6 Q13.8 9.8 21 10.6 Q21.6 12 21.2 14.8 A7.4 7.4 0 0 1 6.4 14.8 Q6 12 6.6 10.6 Z" fill="#333"/><path d="M0.4 35.5 V30.5 Q0.4 24.6 7 23.6 L13.8 27.4 L20.6 23.6 Q27.4 24.6 27.4 30.5 V35.5 Z" fill="#333"/><rect x="17.8" y="28.6" width="4.8" height="2" rx="1" fill="#fff"/></svg>
<div class="t" style="top:1332.31px;font-size:26px;color:#333333;font-weight:700;left:1273.30px;">V5390</div>
<div class="t" style="top:1332.31px;font-size:26px;color:#333333;font-weight:700;left:435.50px;width:2000px;text-align:center;">19Mar</div>
<div class="t" style="top:1332.31px;font-size:26px;color:#333333;font-weight:700;left:521.20px;width:2000px;text-align:center;">4</div>
<div class="t" style="top:1332.31px;font-size:26px;color:#333333;font-weight:700;left:611.20px;width:2000px;text-align:center;">17:25</div>
<div class="t" style="top:1332.31px;font-size:26px;color:#333333;font-weight:700;left:715.30px;width:2000px;text-align:center;">CLE</div>
<div class="t" style="top:1332.31px;font-size:26px;color:#333333;font-weight:700;left:821.30px;width:2000px;text-align:center;">17:55</div>
<div class="t" style="top:1332.31px;font-size:26px;color:#333333;font-weight:700;left:927.50px;width:2000px;text-align:center;">1673</div>
<div class="t" style="top:1332.31px;font-size:26px;color:#333333;font-weight:700;left:1035.60px;width:2000px;text-align:center;">CLE</div>
<div class="t" style="top:1332.31px;font-size:26px;color:#333333;font-weight:700;left:1141.30px;width:2000px;text-align:center;">20:51</div>
<div class="t" style="top:1332.31px;font-size:26px;color:#333333;font-weight:700;left:1243.40px;width:2000px;text-align:center;">21:06</div>
<div class="t" style="top:1332.31px;font-size:26px;color:#333333;font-weight:700;left:1335.30px;width:2000px;text-align:center;">No</div>
<div class="t" style="top:1332.31px;font-size:26px;color:#333333;font-weight:700;left:1427.50px;width:2000px;text-align:center;">19:35</div>
<div class="t" style="top:1332.31px;font-size:26px;color:#333333;font-weight:700;left:1527.40px;width:2000px;text-align:center;">22:30</div>
<div class="t" style="top:1332.31px;font-size:26px;color:#333333;font-weight:700;left:1627.30px;width:2000px;text-align:center;">75:41</div>
<div class="t" style="top:1332.31px;font-size:26px;color:#333333;font-weight:700;left:1747.40px;width:2000px;text-align:center;">$126.50</div>
<div class="t" style="top:1332.31px;font-size:26px;color:#333333;font-weight:700;left:1867.30px;width:2000px;text-align:center;">02:55</div>
<div class="t" style="top:1332.31px;font-size:26px;color:#333333;font-weight:700;left:1981.50px;width:2000px;text-align:center;">$230.08</div>
<div class="t" style="top:1334.70px;font-size:22px;color:#333333;font-weight:700;left:3053.80px;">DFW, SJO, SFO</div>
<svg class="a" style="left:3305.40px;top:1324.69px;width:35.60px;height:35.60px;" viewBox="0 0 35.6 35.6" preserveAspectRatio="none"><circle cx="17.8" cy="17.8" r="17.8" fill="#002244"/><text x="5.8" y="24.9" font-family="Liberation Sans" font-weight="700" font-size="19.5" fill="#fff" textLength="23.8" lengthAdjust="spacingAndGlyphs">RT</text></svg>
<svg class="a" style="left:3349.70px;top:1324.69px;width:35.60px;height:35.60px;" viewBox="0 0 35.6 35.6" preserveAspectRatio="none"><circle cx="17.8" cy="17.8" r="17.8" fill="#002244"/><text x="4.3" y="24.9" font-family="Liberation Sans" font-weight="700" font-size="19.5" fill="#fff" textLength="27.5" lengthAdjust="spacingAndGlyphs">DH</text></svg>
<svg class="a" style="left:3671.00px;top:1338.99px;width:33.00px;height:10.00px;" viewBox="0 0 33 10" preserveAspectRatio="none"><circle cx="4.5" cy="5" r="3.8" fill="#6244bb"/><circle cx="16.5" cy="5" r="3.8" fill="#6244bb"/><circle cx="28.5" cy="5" r="3.8" fill="#6244bb"/></svg>
<svg class="a" style="left:1079.40px;top:1394.40px;width:31.60px;height:31.60px;" viewBox="0 0 31.6 31.6" preserveAspectRatio="none"><circle cx="15.8" cy="15.8" r="15.8" fill="#666"/><circle cx="15.8" cy="8.8" r="2.4" fill="#fff"/><rect x="13.8" y="13" width="4" height="12" fill="#fff"/></svg>
<div class="t" style="top:1397.24px;font-size:27px;color:#666666;letter-spacing:0.554px;left:1127.80px;">All trips listed above are in the Real Time Trading window</div>
<div class="a" style="left:1861.50px;top:1409.00px;width:1881.50px;height:1.50px;background:#9a9a9a;"></div>
<div class="a" style="left:1063.00px;top:1446.00px;width:2680.00px;height:3.00px;background:#d6d6d6;"></div>
<div class="a" style="left:1063.00px;top:1448.70px;width:2680.00px;height:602.50px;background:#fff;"></div>
<div class="a" style="left:1063.00px;top:1448.70px;width:2.00px;height:602.50px;background:#cfcfcf;"></div>
<div class="a" style="left:3642.50px;top:1448.70px;width:2.00px;height:602.50px;background:#d6d6d6;"></div>
<div class="a" style="left:3741.50px;top:1448.70px;width:2.00px;height:602.50px;background:#cfcfcf;"></div>
<div class="a" style="left:1065.00px;top:1504.53px;width:2678.00px;height:2.00px;background:#d2d2d2;"></div>
<svg class="a" style="left:1081.20px;top:1461.37px;width:32.00px;height:32.00px;" viewBox="0 0 32 32" preserveAspectRatio="none"><circle cx="16" cy="16" r="16" fill="#666"/><path d="M16 6.3 V25.7 M6.3 16 H25.7" stroke="#fff" stroke-width="2.4" stroke-linecap="round"/></svg>
<svg class="a" style="left:1140.50px;top:1458.37px;width:32.00px;height:36.00px;" viewBox="0 0 32 36" preserveAspectRatio="none"><path d="M2.3 1.5 V34" stroke="#333" stroke-width="3.2" stroke-linecap="round"/><path d="M3 4.6 C 7 1.8, 10.5 1.6, 15.5 4 S 25.5 7.6, 30.4 3.6 V 24.6 C 25.5 28.6, 20.5 27.2, 15.5 25 S 7 22.2, 3 25.6" fill="none" stroke="#333" stroke-width="3" stroke-linejoin="round"/></svg>
<svg class="a" style="left:1188.00px;top:1458.37px;width:28.00px;height:36.00px;" viewBox="0 0 28 36" preserveAspectRatio="none"><path d="M3.6 4.6 L13.8 0 L24 4.6 L22.6 9.4 Q13.8 8 5 9.4 Z" fill="#333"/><path d="M7.5 6.4 Q13.8 4.4 20.1 6.4" fill="none" stroke="#fff" stroke-width="1.3"/><path d="M6.6 10.6 Q13.8 9.8 21 10.6 Q21.6 12 21.2 14.8 A7.4 7.4 0 0 1 6.4 14.8 Q6 12 6.6 10.6 Z" fill="#333"/><path d="M0.4 35.5 V30.5 Q0.4 24.6 7 23.6 L13.8 27.4 L20.6 23.6 Q27.4 24.6 27.4 30.5 V35.5 Z" fill="#333"/><rect x="17.8" y="28.6" width="4.8" height="2" rx="1" fill="#fff"/></svg>
<div class="t" style="top:1465.69px;font-size:26px;color:#333333;font-weight:700;left:1273.30px;">V5031</div>
<div class="t" style="top:1465.69px;font-size:26px;color:#333333;font-weight:700;left:435.50px;width:2000px;text-align:center;">20Mar</div>
<div class="t" style="top:1465.69px;font-size:26px;color:#333333;font-weight:700;left:521.20px;width:2000px;text-align:center;">2</div>
<div class="t" style="top:1465.69px;font-size:26px;color:#333333;font-weight:700;left:611.20px;width:2000px;text-align:center;">05:00</div>
<div class="t" style="top:1465.69px;font-size:26px;color:#333333;font-weight:700;left:715.30px;width:2000px;text-align:center;">CLE</div>
<div class="t" style="top:1465.69px;font-size:26px;color:#333333;font-weight:700;left:821.30px;width:2000px;text-align:center;">06:00</div>
<div class="t" style="top:1465.69px;font-size:26px;color:#333333;font-weight:700;left:927.50px;width:2000px;text-align:center;">1252</div>
<div class="t" style="top:1465.69px;font-size:26px;color:#333333;font-weight:700;left:1035.60px;width:2000px;text-align:center;">CLE</div>
<div class="t" style="top:1465.69px;font-size:26px;color:#333333;font-weight:700;left:1141.30px;width:2000px;text-align:center;">22:15</div>
<div class="t" style="top:1465.69px;font-size:26px;color:#333333;font-weight:700;left:1243.40px;width:2000px;text-align:center;">22:30</div>
<div class="t" style="top:1465.69px;font-size:26px;color:#333333;font-weight:700;left:1335.30px;width:2000px;text-align:center;">No</div>
<div class="t" style="top:1465.69px;font-size:26px;color:#333333;font-weight:700;left:1427.50px;width:2000px;text-align:center;">11:44</div>
<div class="t" style="top:1465.69px;font-size:26px;color:#333333;font-weight:700;left:1527.40px;width:2000px;text-align:center;">11:51</div>
<div class="t" style="top:1465.69px;font-size:26px;color:#333333;font-weight:700;left:1627.30px;width:2000px;text-align:center;">41:30</div>
<div class="t" style="top:1465.69px;font-size:26px;color:#333333;font-weight:700;left:1747.40px;width:2000px;text-align:center;">$0.00</div>
<div class="t" style="top:1465.69px;font-size:26px;color:#333333;font-weight:700;left:1867.30px;width:2000px;text-align:center;">00:07</div>
<div class="t" style="top:1465.69px;font-size:26px;color:#333333;font-weight:700;left:1981.50px;width:2000px;text-align:center;">$126.16</div>
<div class="t" style="top:1468.08px;font-size:22px;color:#333333;font-weight:700;left:3053.80px;">PUJ</div>
<svg class="a" style="left:3671.00px;top:1472.37px;width:33.00px;height:10.00px;" viewBox="0 0 33 10" preserveAspectRatio="none"><circle cx="4.5" cy="5" r="3.8" fill="#6244bb"/><circle cx="16.5" cy="5" r="3.8" fill="#6244bb"/><circle cx="28.5" cy="5" r="3.8" fill="#6244bb"/></svg>
<div class="a" style="left:1065.00px;top:1561.86px;width:2678.00px;height:2.00px;background:#d2d2d2;"></div>
<svg class="a" style="left:1081.20px;top:1518.69px;width:32.00px;height:32.00px;" viewBox="0 0 32 32" preserveAspectRatio="none"><circle cx="16" cy="16" r="16" fill="#666"/><path d="M16 6.3 V25.7 M6.3 16 H25.7" stroke="#fff" stroke-width="2.4" stroke-linecap="round"/></svg>
<svg class="a" style="left:1140.50px;top:1515.69px;width:32.00px;height:36.00px;" viewBox="0 0 32 36" preserveAspectRatio="none"><path d="M2.3 1.5 V34" stroke="#333" stroke-width="3.2" stroke-linecap="round"/><path d="M3 4.6 C 7 1.8, 10.5 1.6, 15.5 4 S 25.5 7.6, 30.4 3.6 V 24.6 C 25.5 28.6, 20.5 27.2, 15.5 25 S 7 22.2, 3 25.6" fill="none" stroke="#333" stroke-width="3" stroke-linejoin="round"/></svg>
<svg class="a" style="left:1188.00px;top:1515.69px;width:28.00px;height:36.00px;" viewBox="0 0 28 36" preserveAspectRatio="none"><path d="M3.6 4.6 L13.8 0 L24 4.6 L22.6 9.4 Q13.8 8 5 9.4 Z" fill="#333"/><path d="M7.5 6.4 Q13.8 4.4 20.1 6.4" fill="none" stroke="#fff" stroke-width="1.3"/><path d="M6.6 10.6 Q13.8 9.8 21 10.6 Q21.6 12 21.2 14.8 A7.4 7.4 0 0 1 6.4 14.8 Q6 12 6.6 10.6 Z" fill="#333"/><path d="M0.4 35.5 V30.5 Q0.4 24.6 7 23.6 L13.8 27.4 L20.6 23.6 Q27.4 24.6 27.4 30.5 V35.5 Z" fill="#333"/><rect x="17.8" y="28.6" width="4.8" height="2" rx="1" fill="#fff"/></svg>
<div class="t" style="top:1523.02px;font-size:26px;color:#333333;font-weight:700;left:1273.30px;">V5149</div>
<div class="t" style="top:1523.02px;font-size:26px;color:#333333;font-weight:700;left:435.50px;width:2000px;text-align:center;">20Mar</div>
<div class="t" style="top:1523.02px;font-size:26px;color:#333333;font-weight:700;left:521.20px;width:2000px;text-align:center;">3</div>
<div class="t" style="top:1523.02px;font-size:26px;color:#333333;font-weight:700;left:611.20px;width:2000px;text-align:center;">05:00</div>
<div class="t" style="top:1523.02px;font-size:26px;color:#333333;font-weight:700;left:715.30px;width:2000px;text-align:center;">CLE</div>
<div class="t" style="top:1523.02px;font-size:26px;color:#333333;font-weight:700;left:821.30px;width:2000px;text-align:center;">06:00</div>
<div class="t" style="top:1523.02px;font-size:26px;color:#333333;font-weight:700;left:927.50px;width:2000px;text-align:center;">1645</div>
<div class="t" style="top:1523.02px;font-size:26px;color:#333333;font-weight:700;left:1035.60px;width:2000px;text-align:center;">CLE</div>
<div class="t" style="top:1523.02px;font-size:26px;color:#333333;font-weight:700;left:1141.30px;width:2000px;text-align:center;">22:42</div>
<div class="t" style="top:1523.02px;font-size:26px;color:#333333;font-weight:700;left:1243.40px;width:2000px;text-align:center;">22:57</div>
<div class="t" style="top:1523.02px;font-size:26px;color:#333333;font-weight:700;left:1335.30px;width:2000px;text-align:center;">No</div>
<div class="t" style="top:1523.02px;font-size:26px;color:#333333;font-weight:700;left:1427.50px;width:2000px;text-align:center;">18:20</div>
<div class="t" style="top:1523.02px;font-size:26px;color:#333333;font-weight:700;left:1527.40px;width:2000px;text-align:center;">18:51</div>
<div class="t" style="top:1523.02px;font-size:26px;color:#333333;font-weight:700;left:1627.30px;width:2000px;text-align:center;">65:57</div>
<div class="t" style="top:1523.02px;font-size:26px;color:#333333;font-weight:700;left:1747.40px;width:2000px;text-align:center;">$0.00</div>
<div class="t" style="top:1523.02px;font-size:26px;color:#333333;font-weight:700;left:1867.30px;width:2000px;text-align:center;">00:31</div>
<div class="t" style="top:1523.02px;font-size:26px;color:#333333;font-weight:700;left:1981.50px;width:2000px;text-align:center;">$200.49</div>
<div class="t" style="top:1525.41px;font-size:22px;color:#333333;font-weight:700;left:3053.80px;">NAS, BOI</div>
<svg class="a" style="left:3671.00px;top:1529.69px;width:33.00px;height:10.00px;" viewBox="0 0 33 10" preserveAspectRatio="none"><circle cx="4.5" cy="5" r="3.8" fill="#6244bb"/><circle cx="16.5" cy="5" r="3.8" fill="#6244bb"/><circle cx="28.5" cy="5" r="3.8" fill="#6244bb"/></svg>
<div class="a" style="left:1065.00px;top:1619.19px;width:2678.00px;height:2.00px;background:#d2d2d2;"></div>
<svg class="a" style="left:1081.20px;top:1576.03px;width:32.00px;height:32.00px;" viewBox="0 0 32 32" preserveAspectRatio="none"><circle cx="16" cy="16" r="16" fill="#666"/><path d="M16 6.3 V25.7 M6.3 16 H25.7" stroke="#fff" stroke-width="2.4" stroke-linecap="round"/></svg>
<svg class="a" style="left:1140.50px;top:1573.03px;width:32.00px;height:36.00px;" viewBox="0 0 32 36" preserveAspectRatio="none"><path d="M2.3 1.5 V34" stroke="#333" stroke-width="3.2" stroke-linecap="round"/><path d="M3 4.6 C 7 1.8, 10.5 1.6, 15.5 4 S 25.5 7.6, 30.4 3.6 V 24.6 C 25.5 28.6, 20.5 27.2, 15.5 25 S 7 22.2, 3 25.6" fill="none" stroke="#333" stroke-width="3" stroke-linejoin="round"/></svg>
<svg class="a" style="left:1188.00px;top:1573.03px;width:28.00px;height:36.00px;" viewBox="0 0 28 36" preserveAspectRatio="none"><path d="M3.6 4.6 L13.8 0 L24 4.6 L22.6 9.4 Q13.8 8 5 9.4 Z" fill="#333"/><path d="M7.5 6.4 Q13.8 4.4 20.1 6.4" fill="none" stroke="#fff" stroke-width="1.3"/><path d="M6.6 10.6 Q13.8 9.8 21 10.6 Q21.6 12 21.2 14.8 A7.4 7.4 0 0 1 6.4 14.8 Q6 12 6.6 10.6 Z" fill="#333"/><path d="M0.4 35.5 V30.5 Q0.4 24.6 7 23.6 L13.8 27.4 L20.6 23.6 Q27.4 24.6 27.4 30.5 V35.5 Z" fill="#333"/><rect x="17.8" y="28.6" width="4.8" height="2" rx="1" fill="#fff"/></svg>
<div class="t" style="top:1580.35px;font-size:26px;color:#333333;font-weight:700;left:1273.30px;">V5164</div>
<div class="t" style="top:1580.35px;font-size:26px;color:#333333;font-weight:700;left:435.50px;width:2000px;text-align:center;">20Mar</div>
<div class="t" style="top:1580.35px;font-size:26px;color:#333333;font-weight:700;left:521.20px;width:2000px;text-align:center;">3</div>
<div class="t" style="top:1580.35px;font-size:26px;color:#333333;font-weight:700;left:611.20px;width:2000px;text-align:center;">05:23</div>
<div class="t" style="top:1580.35px;font-size:26px;color:#333333;font-weight:700;left:715.30px;width:2000px;text-align:center;">CLE</div>
<div class="t" style="top:1580.35px;font-size:26px;color:#333333;font-weight:700;left:821.30px;width:2000px;text-align:center;">06:23</div>
<div class="t" style="top:1580.35px;font-size:26px;color:#333333;font-weight:700;left:927.50px;width:2000px;text-align:center;">0601</div>
<div class="t" style="top:1580.35px;font-size:26px;color:#333333;font-weight:700;left:1035.60px;width:2000px;text-align:center;">CLE</div>
<div class="t" style="top:1580.35px;font-size:26px;color:#333333;font-weight:700;left:1141.30px;width:2000px;text-align:center;">11:26</div>
<div class="t" style="top:1580.35px;font-size:26px;color:#333333;font-weight:700;left:1243.40px;width:2000px;text-align:center;">11:41</div>
<div class="t" style="top:1580.35px;font-size:26px;color:#333333;font-weight:700;left:1335.30px;width:2000px;text-align:center;">No</div>
<div class="t" style="top:1580.35px;font-size:26px;color:#333333;font-weight:700;left:1427.50px;width:2000px;text-align:center;">16:57</div>
<div class="t" style="top:1580.35px;font-size:26px;color:#333333;font-weight:700;left:1527.40px;width:2000px;text-align:center;">16:57</div>
<div class="t" style="top:1580.35px;font-size:26px;color:#333333;font-weight:700;left:1627.30px;width:2000px;text-align:center;">54:18</div>
<div class="t" style="top:1580.35px;font-size:26px;color:#333333;font-weight:700;left:1747.40px;width:2000px;text-align:center;">$0.00</div>
<div class="t" style="top:1580.35px;font-size:26px;color:#333333;font-weight:700;left:1867.30px;width:2000px;text-align:center;">00:00</div>
<div class="t" style="top:1580.35px;font-size:26px;color:#333333;font-weight:700;left:1981.50px;width:2000px;text-align:center;">$165.07</div>
<div class="t" style="top:1582.74px;font-size:22px;color:#333333;font-weight:700;left:3053.80px;">DFW, MSY</div>
<svg class="a" style="left:3671.00px;top:1587.03px;width:33.00px;height:10.00px;" viewBox="0 0 33 10" preserveAspectRatio="none"><circle cx="4.5" cy="5" r="3.8" fill="#6244bb"/><circle cx="16.5" cy="5" r="3.8" fill="#6244bb"/><circle cx="28.5" cy="5" r="3.8" fill="#6244bb"/></svg>
<div class="a" style="left:1065.00px;top:1676.52px;width:2678.00px;height:2.00px;background:#d2d2d2;"></div>
<svg class="a" style="left:1081.20px;top:1633.36px;width:32.00px;height:32.00px;" viewBox="0 0 32 32" preserveAspectRatio="none"><circle cx="16" cy="16" r="16" fill="#666"/><path d="M16 6.3 V25.7 M6.3 16 H25.7" stroke="#fff" stroke-width="2.4" stroke-linecap="round"/></svg>
<svg class="a" style="left:1140.50px;top:1630.36px;width:32.00px;height:36.00px;" viewBox="0 0 32 36" preserveAspectRatio="none"><path d="M2.3 1.5 V34" stroke="#333" stroke-width="3.2" stroke-linecap="round"/><path d="M3 4.6 C 7 1.8, 10.5 1.6, 15.5 4 S 25.5 7.6, 30.4 3.6 V 24.6 C 25.5 28.6, 20.5 27.2, 15.5 25 S 7 22.2, 3 25.6" fill="none" stroke="#333" stroke-width="3" stroke-linejoin="round"/></svg>
<svg class="a" style="left:1188.00px;top:1630.36px;width:28.00px;height:36.00px;" viewBox="0 0 28 36" preserveAspectRatio="none"><path d="M3.6 4.6 L13.8 0 L24 4.6 L22.6 9.4 Q13.8 8 5 9.4 Z" fill="#333"/><path d="M7.5 6.4 Q13.8 4.4 20.1 6.4" fill="none" stroke="#fff" stroke-width="1.3"/><path d="M6.6 10.6 Q13.8 9.8 21 10.6 Q21.6 12 21.2 14.8 A7.4 7.4 0 0 1 6.4 14.8 Q6 12 6.6 10.6 Z" fill="#333"/><path d="M0.4 35.5 V30.5 Q0.4 24.6 7 23.6 L13.8 27.4 L20.6 23.6 Q27.4 24.6 27.4 30.5 V35.5 Z" fill="#333"/><rect x="17.8" y="28.6" width="4.8" height="2" rx="1" fill="#fff"/></svg>
<div class="t" style="top:1637.68px;font-size:26px;color:#333333;font-weight:700;left:1273.30px;">V5002</div>
<div class="t" style="top:1637.68px;font-size:26px;color:#333333;font-weight:700;left:435.50px;width:2000px;text-align:center;">20Mar</div>
<div class="t" style="top:1637.68px;font-size:26px;color:#333333;font-weight:700;left:521.20px;width:2000px;text-align:center;">1</div>
<div class="t" style="top:1637.68px;font-size:26px;color:#333333;font-weight:700;left:611.20px;width:2000px;text-align:center;">06:00</div>
<div class="t" style="top:1637.68px;font-size:26px;color:#333333;font-weight:700;left:715.30px;width:2000px;text-align:center;">CLE</div>
<div class="t" style="top:1637.68px;font-size:26px;color:#333333;font-weight:700;left:821.30px;width:2000px;text-align:center;">07:00</div>
<div class="t" style="top:1637.68px;font-size:26px;color:#333333;font-weight:700;left:927.50px;width:2000px;text-align:center;">1955</div>
<div class="t" style="top:1637.68px;font-size:26px;color:#333333;font-weight:700;left:1035.60px;width:2000px;text-align:center;">CLE</div>
<div class="t" style="top:1637.68px;font-size:26px;color:#333333;font-weight:700;left:1141.30px;width:2000px;text-align:center;">13:52</div>
<div class="t" style="top:1637.68px;font-size:26px;color:#333333;font-weight:700;left:1243.40px;width:2000px;text-align:center;">14:07</div>
<div class="t" style="top:1637.68px;font-size:26px;color:#333333;font-weight:700;left:1335.30px;width:2000px;text-align:center;">No</div>
<div class="t" style="top:1637.68px;font-size:26px;color:#333333;font-weight:700;left:1427.50px;width:2000px;text-align:center;">05:50</div>
<div class="t" style="top:1637.68px;font-size:26px;color:#333333;font-weight:700;left:1527.40px;width:2000px;text-align:center;">05:50</div>
<div class="t" style="top:1637.68px;font-size:26px;color:#333333;font-weight:700;left:1627.30px;width:2000px;text-align:center;">08:07</div>
<div class="t" style="top:1637.68px;font-size:26px;color:#333333;font-weight:700;left:1747.40px;width:2000px;text-align:center;">$0.00</div>
<div class="t" style="top:1637.68px;font-size:26px;color:#333333;font-weight:700;left:1867.30px;width:2000px;text-align:center;">00:00</div>
<div class="t" style="top:1637.68px;font-size:26px;color:#333333;font-weight:700;left:1981.50px;width:2000px;text-align:center;">$24.67</div>
<svg class="a" style="left:3671.00px;top:1644.36px;width:33.00px;height:10.00px;" viewBox="0 0 33 10" preserveAspectRatio="none"><circle cx="4.5" cy="5" r="3.8" fill="#6244bb"/><circle cx="16.5" cy="5" r="3.8" fill="#6244bb"/><circle cx="28.5" cy="5" r="3.8" fill="#6244bb"/></svg>
<div class="a" style="left:1065.00px;top:1733.85px;width:2678.00px;height:2.00px;background:#d2d2d2;"></div>
<svg class="a" style="left:1081.20px;top:1690.68px;width:32.00px;height:32.00px;" viewBox="0 0 32 32" preserveAspectRatio="none"><circle cx="16" cy="16" r="16" fill="#666"/><path d="M16 6.3 V25.7 M6.3 16 H25.7" stroke="#fff" stroke-width="2.4" stroke-linecap="round"/></svg>
<svg class="a" style="left:1140.50px;top:1687.68px;width:32.00px;height:36.00px;" viewBox="0 0 32 36" preserveAspectRatio="none"><path d="M2.3 1.5 V34" stroke="#333" stroke-width="3.2" stroke-linecap="round"/><path d="M3 4.6 C 7 1.8, 10.5 1.6, 15.5 4 S 25.5 7.6, 30.4 3.6 V 24.6 C 25.5 28.6, 20.5 27.2, 15.5 25 S 7 22.2, 3 25.6" fill="none" stroke="#333" stroke-width="3" stroke-linejoin="round"/></svg>
<svg class="a" style="left:1188.00px;top:1687.68px;width:28.00px;height:36.00px;" viewBox="0 0 28 36" preserveAspectRatio="none"><path d="M3.6 4.6 L13.8 0 L24 4.6 L22.6 9.4 Q13.8 8 5 9.4 Z" fill="#333"/><path d="M7.5 6.4 Q13.8 4.4 20.1 6.4" fill="none" stroke="#fff" stroke-width="1.3"/><path d="M6.6 10.6 Q13.8 9.8 21 10.6 Q21.6 12 21.2 14.8 A7.4 7.4 0 0 1 6.4 14.8 Q6 12 6.6 10.6 Z" fill="#333"/><path d="M0.4 35.5 V30.5 Q0.4 24.6 7 23.6 L13.8 27.4 L20.6 23.6 Q27.4 24.6 27.4 30.5 V35.5 Z" fill="#333"/><rect x="17.8" y="28.6" width="4.8" height="2" rx="1" fill="#fff"/></svg>
<div class="t" style="top:1695.01px;font-size:26px;color:#333333;font-weight:700;left:1273.30px;">V5179</div>
<div class="t" style="top:1695.01px;font-size:26px;color:#333333;font-weight:700;left:435.50px;width:2000px;text-align:center;">20Mar</div>
<div class="t" style="top:1695.01px;font-size:26px;color:#333333;font-weight:700;left:521.20px;width:2000px;text-align:center;">3</div>
<div class="t" style="top:1695.01px;font-size:26px;color:#333333;font-weight:700;left:611.20px;width:2000px;text-align:center;">06:00</div>
<div class="t" style="top:1695.01px;font-size:26px;color:#333333;font-weight:700;left:715.30px;width:2000px;text-align:center;">CLE</div>
<div class="t" style="top:1695.01px;font-size:26px;color:#333333;font-weight:700;left:821.30px;width:2000px;text-align:center;">07:00</div>
<div class="t" style="top:1695.01px;font-size:26px;color:#333333;font-weight:700;left:927.50px;width:2000px;text-align:center;">0715</div>
<div class="t" style="top:1695.01px;font-size:26px;color:#333333;font-weight:700;left:1035.60px;width:2000px;text-align:center;">CLE</div>
<div class="t" style="top:1695.01px;font-size:26px;color:#333333;font-weight:700;left:1141.30px;width:2000px;text-align:center;">13:14</div>
<div class="t" style="top:1695.01px;font-size:26px;color:#333333;font-weight:700;left:1243.40px;width:2000px;text-align:center;">13:29</div>
<div class="t" style="top:1695.01px;font-size:26px;color:#333333;font-weight:700;left:1335.30px;width:2000px;text-align:center;">No</div>
<div class="t" style="top:1695.01px;font-size:26px;color:#333333;font-weight:700;left:1427.50px;width:2000px;text-align:center;">18:23</div>
<div class="t" style="top:1695.01px;font-size:26px;color:#333333;font-weight:700;left:1527.40px;width:2000px;text-align:center;">18:23</div>
<div class="t" style="top:1695.01px;font-size:26px;color:#333333;font-weight:700;left:1627.30px;width:2000px;text-align:center;">55:29</div>
<div class="t" style="top:1695.01px;font-size:26px;color:#333333;font-weight:700;left:1747.40px;width:2000px;text-align:center;">$0.00</div>
<div class="t" style="top:1695.01px;font-size:26px;color:#333333;font-weight:700;left:1867.30px;width:2000px;text-align:center;">00:00</div>
<div class="t" style="top:1695.01px;font-size:26px;color:#333333;font-weight:700;left:1981.50px;width:2000px;text-align:center;">$168.67</div>
<div class="t" style="top:1697.40px;font-size:22px;color:#333333;font-weight:700;left:3053.80px;">IAH, EWR</div>
<svg class="a" style="left:3671.00px;top:1701.68px;width:33.00px;height:10.00px;" viewBox="0 0 33 10" preserveAspectRatio="none"><circle cx="4.5" cy="5" r="3.8" fill="#6244bb"/><circle cx="16.5" cy="5" r="3.8" fill="#6244bb"/><circle cx="28.5" cy="5" r="3.8" fill="#6244bb"/></svg>
<div class="a" style="left:1065.00px;top:1791.18px;width:2678.00px;height:2.00px;background:#d2d2d2;"></div>
<svg class="a" style="left:1081.20px;top:1748.01px;width:32.00px;height:32.00px;" viewBox="0 0 32 32" preserveAspectRatio="none"><circle cx="16" cy="16" r="16" fill="#666"/><path d="M16 6.3 V25.7 M6.3 16 H25.7" stroke="#fff" stroke-width="2.4" stroke-linecap="round"/></svg>
<svg class="a" style="left:1140.50px;top:1745.01px;width:32.00px;height:36.00px;" viewBox="0 0 32 36" preserveAspectRatio="none"><path d="M2.3 1.5 V34" stroke="#333" stroke-width="3.2" stroke-linecap="round"/><path d="M3 4.6 C 7 1.8, 10.5 1.6, 15.5 4 S 25.5 7.6, 30.4 3.6 V 24.6 C 25.5 28.6, 20.5 27.2, 15.5 25 S 7 22.2, 3 25.6" fill="none" stroke="#333" stroke-width="3" stroke-linejoin="round"/></svg>
<svg class="a" style="left:1188.00px;top:1745.01px;width:28.00px;height:36.00px;" viewBox="0 0 28 36" preserveAspectRatio="none"><path d="M3.6 4.6 L13.8 0 L24 4.6 L22.6 9.4 Q13.8 8 5 9.4 Z" fill="#333"/><path d="M7.5 6.4 Q13.8 4.4 20.1 6.4" fill="none" stroke="#fff" stroke-width="1.3"/><path d="M6.6 10.6 Q13.8 9.8 21 10.6 Q21.6 12 21.2 14.8 A7.4 7.4 0 0 1 6.4 14.8 Q6 12 6.6 10.6 Z" fill="#333"/><path d="M0.4 35.5 V30.5 Q0.4 24.6 7 23.6 L13.8 27.4 L20.6 23.6 Q27.4 24.6 27.4 30.5 V35.5 Z" fill="#333"/><rect x="17.8" y="28.6" width="4.8" height="2" rx="1" fill="#fff"/></svg>
<div class="t" style="top:1752.34px;font-size:26px;color:#333333;font-weight:700;left:1273.30px;">V5316</div>
<div class="t" style="top:1752.34px;font-size:26px;color:#333333;font-weight:700;left:435.50px;width:2000px;text-align:center;">20Mar</div>
<div class="t" style="top:1752.34px;font-size:26px;color:#333333;font-weight:700;left:521.20px;width:2000px;text-align:center;">4</div>
<div class="t" style="top:1752.34px;font-size:26px;color:#333333;font-weight:700;left:611.20px;width:2000px;text-align:center;">06:01</div>
<div class="t" style="top:1752.34px;font-size:26px;color:#333333;font-weight:700;left:715.30px;width:2000px;text-align:center;">CLE</div>
<div class="t" style="top:1752.34px;font-size:26px;color:#333333;font-weight:700;left:821.30px;width:2000px;text-align:center;">07:01</div>
<div class="t" style="top:1752.34px;font-size:26px;color:#333333;font-weight:700;left:927.50px;width:2000px;text-align:center;">2153</div>
<div class="t" style="top:1752.34px;font-size:26px;color:#333333;font-weight:700;left:1035.60px;width:2000px;text-align:center;">CLE</div>
<div class="t" style="top:1752.34px;font-size:26px;color:#333333;font-weight:700;left:1141.30px;width:2000px;text-align:center;">22:38</div>
<div class="t" style="top:1752.34px;font-size:26px;color:#333333;font-weight:700;left:1243.40px;width:2000px;text-align:center;">22:53</div>
<div class="t" style="top:1752.34px;font-size:26px;color:#333333;font-weight:700;left:1335.30px;width:2000px;text-align:center;">No</div>
<div class="t" style="top:1752.34px;font-size:26px;color:#333333;font-weight:700;left:1427.50px;width:2000px;text-align:center;">25:45</div>
<div class="t" style="top:1752.34px;font-size:26px;color:#333333;font-weight:700;left:1527.40px;width:2000px;text-align:center;">25:45</div>
<div class="t" style="top:1752.34px;font-size:26px;color:#333333;font-weight:700;left:1627.30px;width:2000px;text-align:center;">88:52</div>
<div class="t" style="top:1752.34px;font-size:26px;color:#333333;font-weight:700;left:1747.40px;width:2000px;text-align:center;">$0.00</div>
<div class="t" style="top:1752.34px;font-size:26px;color:#333333;font-weight:700;left:1867.30px;width:2000px;text-align:center;">00:00</div>
<div class="t" style="top:1752.34px;font-size:26px;color:#333333;font-weight:700;left:1981.50px;width:2000px;text-align:center;">$270.15</div>
<div class="t" style="top:1754.73px;font-size:22px;color:#333333;font-weight:700;left:3053.80px;">RNO, BNA, AUA</div>
<svg class="a" style="left:3671.00px;top:1759.01px;width:33.00px;height:10.00px;" viewBox="0 0 33 10" preserveAspectRatio="none"><circle cx="4.5" cy="5" r="3.8" fill="#6244bb"/><circle cx="16.5" cy="5" r="3.8" fill="#6244bb"/><circle cx="28.5" cy="5" r="3.8" fill="#6244bb"/></svg>
<div class="a" style="left:1065.00px;top:1848.51px;width:2678.00px;height:2.00px;background:#d2d2d2;"></div>
<svg class="a" style="left:1081.20px;top:1805.35px;width:32.00px;height:32.00px;" viewBox="0 0 32 32" preserveAspectRatio="none"><circle cx="16" cy="16" r="16" fill="#666"/><path d="M16 6.3 V25.7 M6.3 16 H25.7" stroke="#fff" stroke-width="2.4" stroke-linecap="round"/></svg>
<svg class="a" style="left:1140.50px;top:1802.35px;width:32.00px;height:36.00px;" viewBox="0 0 32 36" preserveAspectRatio="none"><path d="M2.3 1.5 V34" stroke="#333" stroke-width="3.2" stroke-linecap="round"/><path d="M3 4.6 C 7 1.8, 10.5 1.6, 15.5 4 S 25.5 7.6, 30.4 3.6 V 24.6 C 25.5 28.6, 20.5 27.2, 15.5 25 S 7 22.2, 3 25.6" fill="none" stroke="#333" stroke-width="3" stroke-linejoin="round"/></svg>
<svg class="a" style="left:1188.00px;top:1802.35px;width:28.00px;height:36.00px;" viewBox="0 0 28 36" preserveAspectRatio="none"><path d="M3.6 4.6 L13.8 0 L24 4.6 L22.6 9.4 Q13.8 8 5 9.4 Z" fill="#333"/><path d="M7.5 6.4 Q13.8 4.4 20.1 6.4" fill="none" stroke="#fff" stroke-width="1.3"/><path d="M6.6 10.6 Q13.8 9.8 21 10.6 Q21.6 12 21.2 14.8 A7.4 7.4 0 0 1 6.4 14.8 Q6 12 6.6 10.6 Z" fill="#333"/><path d="M0.4 35.5 V30.5 Q0.4 24.6 7 23.6 L13.8 27.4 L20.6 23.6 Q27.4 24.6 27.4 30.5 V35.5 Z" fill="#333"/><rect x="17.8" y="28.6" width="4.8" height="2" rx="1" fill="#fff"/></svg>
<div class="t" style="top:1809.67px;font-size:26px;color:#333333;font-weight:700;left:1273.30px;">V5068</div>
<div class="t" style="top:1809.67px;font-size:26px;color:#333333;font-weight:700;left:435.50px;width:2000px;text-align:center;">20Mar</div>
<div class="t" style="top:1809.67px;font-size:26px;color:#333333;font-weight:700;left:521.20px;width:2000px;text-align:center;">2</div>
<div class="t" style="top:1809.67px;font-size:26px;color:#333333;font-weight:700;left:611.20px;width:2000px;text-align:center;">06:02</div>
<div class="t" style="top:1809.67px;font-size:26px;color:#333333;font-weight:700;left:715.30px;width:2000px;text-align:center;">CLE</div>
<div class="t" style="top:1809.67px;font-size:26px;color:#333333;font-weight:700;left:821.30px;width:2000px;text-align:center;">07:02</div>
<div class="t" style="top:1809.67px;font-size:26px;color:#333333;font-weight:700;left:927.50px;width:2000px;text-align:center;">0490</div>
<div class="t" style="top:1809.67px;font-size:26px;color:#333333;font-weight:700;left:1035.60px;width:2000px;text-align:center;">CLE</div>
<div class="t" style="top:1809.67px;font-size:26px;color:#333333;font-weight:700;left:1141.30px;width:2000px;text-align:center;">22:47</div>
<div class="t" style="top:1809.67px;font-size:26px;color:#333333;font-weight:700;left:1243.40px;width:2000px;text-align:center;">23:02</div>
<div class="t" style="top:1809.67px;font-size:26px;color:#333333;font-weight:700;left:1335.30px;width:2000px;text-align:center;">No</div>
<div class="t" style="top:1809.67px;font-size:26px;color:#333333;font-weight:700;left:1427.50px;width:2000px;text-align:center;">11:28</div>
<div class="t" style="top:1809.67px;font-size:26px;color:#333333;font-weight:700;left:1527.40px;width:2000px;text-align:center;">11:43</div>
<div class="t" style="top:1809.67px;font-size:26px;color:#333333;font-weight:700;left:1627.30px;width:2000px;text-align:center;">41:00</div>
<div class="t" style="top:1809.67px;font-size:26px;color:#333333;font-weight:700;left:1747.40px;width:2000px;text-align:center;">$0.00</div>
<div class="t" style="top:1809.67px;font-size:26px;color:#333333;font-weight:700;left:1867.30px;width:2000px;text-align:center;">00:15</div>
<div class="t" style="top:1809.67px;font-size:26px;color:#333333;font-weight:700;left:1981.50px;width:2000px;text-align:center;">$124.64</div>
<div class="t" style="top:1812.06px;font-size:22px;color:#333333;font-weight:700;left:3053.80px;">SFO</div>
<svg class="a" style="left:3671.00px;top:1816.35px;width:33.00px;height:10.00px;" viewBox="0 0 33 10" preserveAspectRatio="none"><circle cx="4.5" cy="5" r="3.8" fill="#6244bb"/><circle cx="16.5" cy="5" r="3.8" fill="#6244bb"/><circle cx="28.5" cy="5" r="3.8" fill="#6244bb"/></svg>
<div class="a" style="left:1065.00px;top:1905.84px;width:2678.00px;height:2.00px;background:#d2d2d2;"></div>
<svg class="a" style="left:1081.20px;top:1862.67px;width:32.00px;height:32.00px;" viewBox="0 0 32 32" preserveAspectRatio="none"><circle cx="16" cy="16" r="16" fill="#666"/><path d="M16 6.3 V25.7 M6.3 16 H25.7" stroke="#fff" stroke-width="2.4" stroke-linecap="round"/></svg>
<svg class="a" style="left:1140.50px;top:1859.67px;width:32.00px;height:36.00px;" viewBox="0 0 32 36" preserveAspectRatio="none"><path d="M2.3 1.5 V34" stroke="#333" stroke-width="3.2" stroke-linecap="round"/><path d="M3 4.6 C 7 1.8, 10.5 1.6, 15.5 4 S 25.5 7.6, 30.4 3.6 V 24.6 C 25.5 28.6, 20.5 27.2, 15.5 25 S 7 22.2, 3 25.6" fill="none" stroke="#333" stroke-width="3" stroke-linejoin="round"/></svg>
<svg class="a" style="left:1188.00px;top:1859.67px;width:28.00px;height:36.00px;" viewBox="0 0 28 36" preserveAspectRatio="none"><path d="M3.6 4.6 L13.8 0 L24 4.6 L22.6 9.4 Q13.8 8 5 9.4 Z" fill="#333"/><path d="M7.5 6.4 Q13.8 4.4 20.1 6.4" fill="none" stroke="#fff" stroke-width="1.3"/><path d="M6.6 10.6 Q13.8 9.8 21 10.6 Q21.6 12 21.2 14.8 A7.4 7.4 0 0 1 6.4 14.8 Q6 12 6.6 10.6 Z" fill="#333"/><path d="M0.4 35.5 V30.5 Q0.4 24.6 7 23.6 L13.8 27.4 L20.6 23.6 Q27.4 24.6 27.4 30.5 V35.5 Z" fill="#333"/><rect x="17.8" y="28.6" width="4.8" height="2" rx="1" fill="#fff"/></svg>
<div class="t" style="top:1867.00px;font-size:26px;color:#333333;font-weight:700;left:1273.30px;">V5087</div>
<div class="t" style="top:1867.00px;font-size:26px;color:#333333;font-weight:700;left:435.50px;width:2000px;text-align:center;">20Mar</div>
<div class="t" style="top:1867.00px;font-size:26px;color:#333333;font-weight:700;left:521.20px;width:2000px;text-align:center;">2</div>
<div class="t" style="top:1867.00px;font-size:26px;color:#333333;font-weight:700;left:611.20px;width:2000px;text-align:center;">06:09</div>
<div class="t" style="top:1867.00px;font-size:26px;color:#333333;font-weight:700;left:715.30px;width:2000px;text-align:center;">CLE</div>
<div class="t" style="top:1867.00px;font-size:26px;color:#333333;font-weight:700;left:821.30px;width:2000px;text-align:center;">07:09</div>
<div class="t" style="top:1867.00px;font-size:26px;color:#333333;font-weight:700;left:927.50px;width:2000px;text-align:center;">1224</div>
<div class="t" style="top:1867.00px;font-size:26px;color:#333333;font-weight:700;left:1035.60px;width:2000px;text-align:center;">CLE</div>
<div class="t" style="top:1867.00px;font-size:26px;color:#333333;font-weight:700;left:1141.30px;width:2000px;text-align:center;">20:19</div>
<div class="t" style="top:1867.00px;font-size:26px;color:#333333;font-weight:700;left:1243.40px;width:2000px;text-align:center;">20:34</div>
<div class="t" style="top:1867.00px;font-size:26px;color:#333333;font-weight:700;left:1335.30px;width:2000px;text-align:center;">No</div>
<div class="t" style="top:1867.00px;font-size:26px;color:#333333;font-weight:700;left:1427.50px;width:2000px;text-align:center;">11:53</div>
<div class="t" style="top:1867.00px;font-size:26px;color:#333333;font-weight:700;left:1527.40px;width:2000px;text-align:center;">11:53</div>
<div class="t" style="top:1867.00px;font-size:26px;color:#333333;font-weight:700;left:1627.30px;width:2000px;text-align:center;">38:25</div>
<div class="t" style="top:1867.00px;font-size:26px;color:#333333;font-weight:700;left:1747.40px;width:2000px;text-align:center;">$243.26</div>
<div class="t" style="top:1867.00px;font-size:26px;color:#333333;font-weight:700;left:1867.30px;width:2000px;text-align:center;">00:00</div>
<div class="t" style="top:1867.00px;font-size:26px;color:#333333;font-weight:700;left:1981.50px;width:2000px;text-align:center;">$116.79</div>
<div class="t" style="top:1869.39px;font-size:22px;color:#333333;font-weight:700;left:3053.80px;">LAS</div>
<svg class="a" style="left:3671.00px;top:1873.67px;width:33.00px;height:10.00px;" viewBox="0 0 33 10" preserveAspectRatio="none"><circle cx="4.5" cy="5" r="3.8" fill="#6244bb"/><circle cx="16.5" cy="5" r="3.8" fill="#6244bb"/><circle cx="28.5" cy="5" r="3.8" fill="#6244bb"/></svg>
<div class="a" style="left:1065.00px;top:1963.17px;width:2678.00px;height:2.00px;background:#d2d2d2;"></div>
<svg class="a" style="left:1081.20px;top:1920.01px;width:32.00px;height:32.00px;" viewBox="0 0 32 32" preserveAspectRatio="none"><circle cx="16" cy="16" r="16" fill="#666"/><path d="M16 6.3 V25.7 M6.3 16 H25.7" stroke="#fff" stroke-width="2.4" stroke-linecap="round"/></svg>
<svg class="a" style="left:1140.50px;top:1917.01px;width:32.00px;height:36.00px;" viewBox="0 0 32 36" preserveAspectRatio="none"><path d="M2.3 1.5 V34" stroke="#333" stroke-width="3.2" stroke-linecap="round"/><path d="M3 4.6 C 7 1.8, 10.5 1.6, 15.5 4 S 25.5 7.6, 30.4 3.6 V 24.6 C 25.5 28.6, 20.5 27.2, 15.5 25 S 7 22.2, 3 25.6" fill="none" stroke="#333" stroke-width="3" stroke-linejoin="round"/></svg>
<svg class="a" style="left:1188.00px;top:1917.01px;width:28.00px;height:36.00px;" viewBox="0 0 28 36" preserveAspectRatio="none"><path d="M3.6 4.6 L13.8 0 L24 4.6 L22.6 9.4 Q13.8 8 5 9.4 Z" fill="#333"/><path d="M7.5 6.4 Q13.8 4.4 20.1 6.4" fill="none" stroke="#fff" stroke-width="1.3"/><path d="M6.6 10.6 Q13.8 9.8 21 10.6 Q21.6 12 21.2 14.8 A7.4 7.4 0 0 1 6.4 14.8 Q6 12 6.6 10.6 Z" fill="#333"/><path d="M0.4 35.5 V30.5 Q0.4 24.6 7 23.6 L13.8 27.4 L20.6 23.6 Q27.4 24.6 27.4 30.5 V35.5 Z" fill="#333"/><rect x="17.8" y="28.6" width="4.8" height="2" rx="1" fill="#fff"/></svg>
<div class="t" style="top:1924.33px;font-size:26px;color:#333333;font-weight:700;left:1273.30px;">V5324</div>
<div class="t" style="top:1924.33px;font-size:26px;color:#333333;font-weight:700;left:435.50px;width:2000px;text-align:center;">20Mar</div>
<div class="t" style="top:1924.33px;font-size:26px;color:#333333;font-weight:700;left:521.20px;width:2000px;text-align:center;">4</div>
<div class="t" style="top:1924.33px;font-size:26px;color:#333333;font-weight:700;left:611.20px;width:2000px;text-align:center;">06:31</div>
<div class="t" style="top:1924.33px;font-size:26px;color:#333333;font-weight:700;left:715.30px;width:2000px;text-align:center;">CLE</div>
<div class="t" style="top:1924.33px;font-size:26px;color:#333333;font-weight:700;left:821.30px;width:2000px;text-align:center;">07:31</div>
<div class="t" style="top:1924.33px;font-size:26px;color:#333333;font-weight:700;left:927.50px;width:2000px;text-align:center;">1038</div>
<div class="t" style="top:1924.33px;font-size:26px;color:#333333;font-weight:700;left:1035.60px;width:2000px;text-align:center;">CLE</div>
<div class="t" style="top:1924.33px;font-size:26px;color:#333333;font-weight:700;left:1141.30px;width:2000px;text-align:center;">13:14</div>
<div class="t" style="top:1924.33px;font-size:26px;color:#333333;font-weight:700;left:1243.40px;width:2000px;text-align:center;">13:29</div>
<div class="t" style="top:1924.33px;font-size:26px;color:#333333;font-weight:700;left:1335.30px;width:2000px;text-align:center;">No</div>
<div class="t" style="top:1924.33px;font-size:26px;color:#333333;font-weight:700;left:1427.50px;width:2000px;text-align:center;">22:39</div>
<div class="t" style="top:1924.33px;font-size:26px;color:#333333;font-weight:700;left:1527.40px;width:2000px;text-align:center;">22:39</div>
<div class="t" style="top:1924.33px;font-size:26px;color:#333333;font-weight:700;left:1627.30px;width:2000px;text-align:center;">78:58</div>
<div class="t" style="top:1924.33px;font-size:26px;color:#333333;font-weight:700;left:1747.40px;width:2000px;text-align:center;">$0.00</div>
<div class="t" style="top:1924.33px;font-size:26px;color:#333333;font-weight:700;left:1867.30px;width:2000px;text-align:center;">00:00</div>
<div class="t" style="top:1924.33px;font-size:26px;color:#333333;font-weight:700;left:1981.50px;width:2000px;text-align:center;">$240.06</div>
<div class="t" style="top:1926.72px;font-size:22px;color:#333333;font-weight:700;left:3053.80px;">CUN, CID, EWR</div>
<svg class="a" style="left:3671.00px;top:1931.01px;width:33.00px;height:10.00px;" viewBox="0 0 33 10" preserveAspectRatio="none"><circle cx="4.5" cy="5" r="3.8" fill="#6244bb"/><circle cx="16.5" cy="5" r="3.8" fill="#6244bb"/><circle cx="28.5" cy="5" r="3.8" fill="#6244bb"/></svg>
<div class="a" style="left:1065.00px;top:2020.50px;width:2678.00px;height:2.00px;background:#d2d2d2;"></div>
<svg class="a" style="left:1081.20px;top:1977.34px;width:32.00px;height:32.00px;" viewBox="0 0 32 32" preserveAspectRatio="none"><circle cx="16" cy="16" r="16" fill="#666"/><path d="M16 6.3 V25.7 M6.3 16 H25.7" stroke="#fff" stroke-width="2.4" stroke-linecap="round"/></svg>
<svg class="a" style="left:1140.50px;top:1974.34px;width:32.00px;height:36.00px;" viewBox="0 0 32 36" preserveAspectRatio="none"><path d="M2.3 1.5 V34" stroke="#333" stroke-width="3.2" stroke-linecap="round"/><path d="M3 4.6 C 7 1.8, 10.5 1.6, 15.5 4 S 25.5 7.6, 30.4 3.6 V 24.6 C 25.5 28.6, 20.5 27.2, 15.5 25 S 7 22.2, 3 25.6" fill="none" stroke="#333" stroke-width="3" stroke-linejoin="round"/></svg>
<svg class="a" style="left:1188.00px;top:1974.34px;width:28.00px;height:36.00px;" viewBox="0 0 28 36" preserveAspectRatio="none"><path d="M3.6 4.6 L13.8 0 L24 4.6 L22.6 9.4 Q13.8 8 5 9.4 Z" fill="#333"/><path d="M7.5 6.4 Q13.8 4.4 20.1 6.4" fill="none" stroke="#fff" stroke-width="1.3"/><path d="M6.6 10.6 Q13.8 9.8 21 10.6 Q21.6 12 21.2 14.8 A7.4 7.4 0 0 1 6.4 14.8 Q6 12 6.6 10.6 Z" fill="#333"/><path d="M0.4 35.5 V30.5 Q0.4 24.6 7 23.6 L13.8 27.4 L20.6 23.6 Q27.4 24.6 27.4 30.5 V35.5 Z" fill="#333"/><rect x="17.8" y="28.6" width="4.8" height="2" rx="1" fill="#fff"/></svg>
<div class="t" style="top:1981.66px;font-size:26px;color:#333333;font-weight:700;left:1273.30px;">V5223</div>
<div class="t" style="top:1981.66px;font-size:26px;color:#333333;font-weight:700;left:435.50px;width:2000px;text-align:center;">20Mar</div>
<div class="t" style="top:1981.66px;font-size:26px;color:#333333;font-weight:700;left:521.20px;width:2000px;text-align:center;">3</div>
<div class="t" style="top:1981.66px;font-size:26px;color:#333333;font-weight:700;left:611.20px;width:2000px;text-align:center;">07:30</div>
<div class="t" style="top:1981.66px;font-size:26px;color:#333333;font-weight:700;left:715.30px;width:2000px;text-align:center;">CLE</div>
<div class="t" style="top:1981.66px;font-size:26px;color:#333333;font-weight:700;left:821.30px;width:2000px;text-align:center;">08:30</div>
<div class="t" style="top:1981.66px;font-size:26px;color:#333333;font-weight:700;left:927.50px;width:2000px;text-align:center;">0690</div>
<div class="t" style="top:1981.66px;font-size:26px;color:#333333;font-weight:700;left:1035.60px;width:2000px;text-align:center;">CLE</div>
<div class="t" style="top:1981.66px;font-size:26px;color:#333333;font-weight:700;left:1141.30px;width:2000px;text-align:center;">21:59</div>
<div class="t" style="top:1981.66px;font-size:26px;color:#333333;font-weight:700;left:1243.40px;width:2000px;text-align:center;">22:14</div>
<div class="t" style="top:1981.66px;font-size:26px;color:#333333;font-weight:700;left:1335.30px;width:2000px;text-align:center;">No</div>
<div class="t" style="top:1981.66px;font-size:26px;color:#333333;font-weight:700;left:1427.50px;width:2000px;text-align:center;">14:36</div>
<div class="t" style="top:1981.66px;font-size:26px;color:#333333;font-weight:700;left:1527.40px;width:2000px;text-align:center;">17:55</div>
<div class="t" style="top:1981.66px;font-size:26px;color:#333333;font-weight:700;left:1627.30px;width:2000px;text-align:center;">62:44</div>
<div class="t" style="top:1981.66px;font-size:26px;color:#333333;font-weight:700;left:1747.40px;width:2000px;text-align:center;">$74.60</div>
<div class="t" style="top:1981.66px;font-size:26px;color:#333333;font-weight:700;left:1867.30px;width:2000px;text-align:center;">03:19</div>
<div class="t" style="top:1981.66px;font-size:26px;color:#333333;font-weight:700;left:1981.50px;width:2000px;text-align:center;">$190.71</div>
<div class="t" style="top:1984.05px;font-size:22px;color:#333333;font-weight:700;left:3053.80px;">BOI, BZE</div>
<svg class="a" style="left:3305.40px;top:1975.24px;width:35.60px;height:35.60px;" viewBox="0 0 35.6 35.6" preserveAspectRatio="none"><circle cx="17.8" cy="17.8" r="17.8" fill="#002244"/><text x="4.3" y="24.9" font-family="Liberation Sans" font-weight="700" font-size="19.5" fill="#fff" textLength="27.5" lengthAdjust="spacingAndGlyphs">DH</text></svg>
<svg class="a" style="left:3671.00px;top:1988.34px;width:33.00px;height:10.00px;" viewBox="0 0 33 10" preserveAspectRatio="none"><circle cx="4.5" cy="5" r="3.8" fill="#6244bb"/><circle cx="16.5" cy="5" r="3.8" fill="#6244bb"/><circle cx="28.5" cy="5" r="3.8" fill="#6244bb"/></svg>
<div class="a" style="left:1065.00px;top:2077.83px;width:2678.00px;height:2.00px;background:#d2d2d2;"></div>
<svg class="a" style="left:1081.20px;top:2034.66px;width:32.00px;height:32.00px;" viewBox="0 0 32 32" preserveAspectRatio="none"><circle cx="16" cy="16" r="16" fill="#666"/><path d="M16 6.3 V25.7 M6.3 16 H25.7" stroke="#fff" stroke-width="2.4" stroke-linecap="round"/></svg>
<svg class="a" style="left:1140.50px;top:2031.66px;width:32.00px;height:36.00px;" viewBox="0 0 32 36" preserveAspectRatio="none"><path d="M2.3 1.5 V34" stroke="#333" stroke-width="3.2" stroke-linecap="round"/><path d="M3 4.6 C 7 1.8, 10.5 1.6, 15.5 4 S 25.5 7.6, 30.4 3.6 V 24.6 C 25.5 28.6, 20.5 27.2, 15.5 25 S 7 22.2, 3 25.6" fill="none" stroke="#333" stroke-width="3" stroke-linejoin="round"/></svg>
<svg class="a" style="left:1188.00px;top:2031.66px;width:28.00px;height:36.00px;" viewBox="0 0 28 36" preserveAspectRatio="none"><path d="M3.6 4.6 L13.8 0 L24 4.6 L22.6 9.4 Q13.8 8 5 9.4 Z" fill="#333"/><path d="M7.5 6.4 Q13.8 4.4 20.1 6.4" fill="none" stroke="#fff" stroke-width="1.3"/><path d="M6.6 10.6 Q13.8 9.8 21 10.6 Q21.6 12 21.2 14.8 A7.4 7.4 0 0 1 6.4 14.8 Q6 12 6.6 10.6 Z" fill="#333"/><path d="M0.4 35.5 V30.5 Q0.4 24.6 7 23.6 L13.8 27.4 L20.6 23.6 Q27.4 24.6 27.4 30.5 V35.5 Z" fill="#333"/><rect x="17.8" y="28.6" width="4.8" height="2" rx="1" fill="#fff"/></svg>
<div class="t" style="top:2038.99px;font-size:26px;color:#333333;font-weight:700;left:1273.30px;">V5342</div>
<div class="t" style="top:2038.99px;font-size:26px;color:#333333;font-weight:700;left:435.50px;width:2000px;text-align:center;">20Mar</div>
<div class="t" style="top:2038.99px;font-size:26px;color:#333333;font-weight:700;left:521.20px;width:2000px;text-align:center;">4</div>
<div class="t" style="top:2038.99px;font-size:26px;color:#333333;font-weight:700;left:611.20px;width:2000px;text-align:center;">07:40</div>
<div class="t" style="top:2038.99px;font-size:26px;color:#333333;font-weight:700;left:715.30px;width:2000px;text-align:center;">CLE</div>
<div class="t" style="top:2038.99px;font-size:26px;color:#333333;font-weight:700;left:821.30px;width:2000px;text-align:center;">08:40</div>
<div class="t" style="top:2038.99px;font-size:26px;color:#333333;font-weight:700;left:927.50px;width:2000px;text-align:center;">2465</div>
<div class="t" style="top:2038.99px;font-size:26px;color:#333333;font-weight:700;left:1035.60px;width:2000px;text-align:center;">CLE</div>
<div class="t" style="top:2038.99px;font-size:26px;color:#333333;font-weight:700;left:1141.30px;width:2000px;text-align:center;">15:40</div>
<div class="t" style="top:2038.99px;font-size:26px;color:#333333;font-weight:700;left:1243.40px;width:2000px;text-align:center;">15:55</div>
<div class="t" style="top:2038.99px;font-size:26px;color:#333333;font-weight:700;left:1335.30px;width:2000px;text-align:center;">No</div>
<div class="t" style="top:2038.99px;font-size:26px;color:#333333;font-weight:700;left:1427.50px;width:2000px;text-align:center;">19:35</div>
<div class="t" style="top:2038.99px;font-size:26px;color:#333333;font-weight:700;left:1527.40px;width:2000px;text-align:center;">22:56</div>
<div class="t" style="top:2038.99px;font-size:26px;color:#333333;font-weight:700;left:1627.30px;width:2000px;text-align:center;">80:15</div>
<div class="t" style="top:2038.99px;font-size:26px;color:#333333;font-weight:700;left:1747.40px;width:2000px;text-align:center;">$25.95</div>
<div class="t" style="top:2038.99px;font-size:26px;color:#333333;font-weight:700;left:1867.30px;width:2000px;text-align:center;">03:21</div>
<div class="t" style="top:2038.99px;font-size:26px;color:#333333;font-weight:700;left:1981.50px;width:2000px;text-align:center;">$243.96</div>
<div class="t" style="top:2041.38px;font-size:22px;color:#333333;font-weight:700;left:3053.80px;">MSY, YYZ, RNO</div>
<svg class="a" style="left:3305.40px;top:2032.56px;width:35.60px;height:35.60px;" viewBox="0 0 35.6 35.6" preserveAspectRatio="none"><circle cx="17.8" cy="17.8" r="17.8" fill="#002244"/><text x="4.3" y="24.9" font-family="Liberation Sans" font-weight="700" font-size="19.5" fill="#fff" textLength="27.5" lengthAdjust="spacingAndGlyphs">DH</text></svg>
<svg class="a" style="left:3671.00px;top:2045.66px;width:33.00px;height:10.00px;" viewBox="0 0 33 10" preserveAspectRatio="none"><circle cx="4.5" cy="5" r="3.8" fill="#6244bb"/><circle cx="16.5" cy="5" r="3.8" fill="#6244bb"/><circle cx="28.5" cy="5" r="3.8" fill="#6244bb"/></svg>
<div class="a" style="left:1063.00px;top:2051.20px;width:2703.00px;height:108.80px;background:#fafafa;"></div>
<div class="a" style="left:1063.00px;top:2044.00px;width:2680.00px;height:7.20px;background:linear-gradient(180deg,rgba(0,0,0,0),rgba(0,0,0,.06));"></div>
<div class="t" style="top:2081.84px;font-size:27px;color:#333333;letter-spacing:0.047px;left:1064.00px;">Items/page:</div>
<div class="a" style="left:1223.00px;top:2068.50px;width:115.00px;height:51.10px;background:#fff;border:1.5px solid #333;border-radius:6px"></div>
<div class="t" style="top:2081.84px;font-size:27px;color:#333333;left:1235.80px;">50</div>
<svg class="a" style="left:1295.00px;top:2086.60px;width:31.00px;height:16.90px;overflow:visible" viewBox="0 0 31.00 16.90" preserveAspectRatio="none"><path d="M1.5 1.5 L15.50 15.40 L29.50 1.5" fill="none" stroke="#6244bb" stroke-width="3.2" stroke-linecap="round" stroke-linejoin="round"/></svg>
<svg class="a" style="left:2212.00px;top:2077.60px;width:26.50px;height:32.90px;" viewBox="0 0 26.5 33" preserveAspectRatio="none"><path d="M1.5 0 V33" stroke="#888" stroke-width="3"/><path d="M25 1.5 L9 16.5 L25 31.5" fill="none" stroke="#888" stroke-width="3"/></svg>
<svg class="a" style="left:2263.00px;top:2077.60px;width:21.00px;height:32.90px;overflow:visible" viewBox="0 0 21.00 32.90" preserveAspectRatio="none"><path d="M19.50 1.5 L1.5 16.45 L19.50 31.40" fill="none" stroke="#888" stroke-width="3" stroke-linecap="round" stroke-linejoin="round"/></svg>
<div class="t" style="top:2082.14px;font-size:27px;color:#333333;letter-spacing:-0.820px;left:2307.30px;">page</div>
<div class="a" style="left:2381.60px;top:2067.80px;width:71.80px;height:52.00px;background:#fff;border:1.5px solid #333;border-radius:6px"></div>
<div class="t" style="top:2082.14px;font-size:27px;color:#333333;left:1417.50px;width:2000px;text-align:center;">1</div>
<div class="t" style="top:2082.14px;font-size:27px;color:#333333;letter-spacing:-0.062px;left:2469.80px;">of 5</div>
<svg class="a" style="left:2537.60px;top:2077.60px;width:19.70px;height:32.90px;overflow:visible" viewBox="0 0 19.70 32.90" preserveAspectRatio="none"><path d="M1.5 1.5 L18.20 16.45 L1.5 31.40" fill="none" stroke="#6244bb" stroke-width="3" stroke-linecap="round" stroke-linejoin="round"/></svg>
<svg class="a" style="left:2583.60px;top:2077.60px;width:26.90px;height:32.90px;" viewBox="0 0 27 33" preserveAspectRatio="none"><path d="M25.5 0 V33" stroke="#6244bb" stroke-width="3"/><path d="M1.5 1.5 L17.5 16.5 L1.5 31.5" fill="none" stroke="#6244bb" stroke-width="3"/></svg>
<div class="t" style="top:2082.14px;font-size:27px;color:#333333;right:31.00px;text-align:right;">1 - 50 of <span style="color:#6244bb;text-decoration:underline;text-decoration-thickness:2px;text-underline-offset:4px">217</span></div>
</body></html>
